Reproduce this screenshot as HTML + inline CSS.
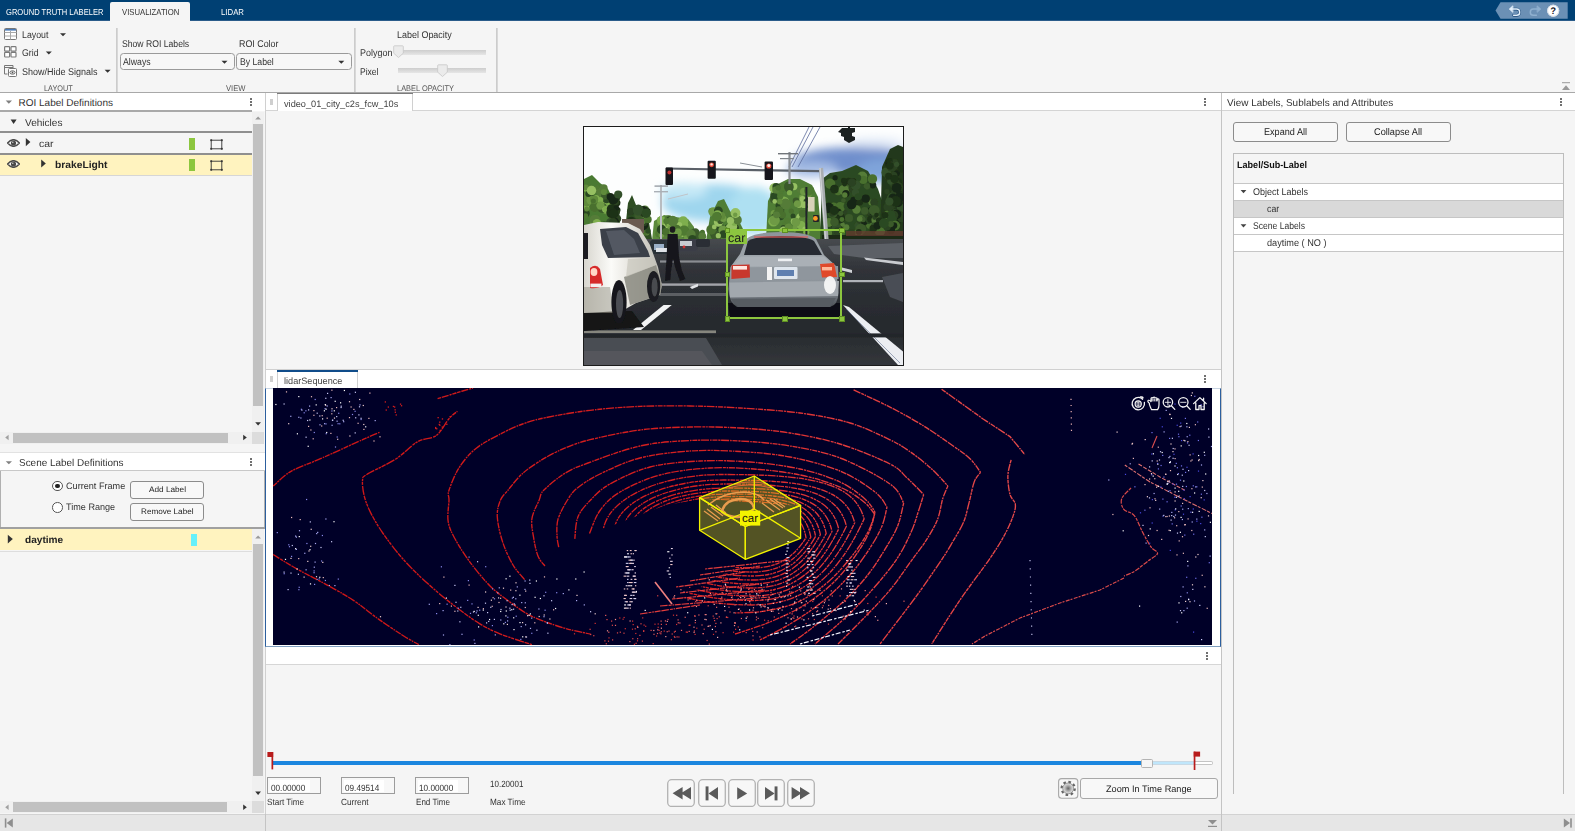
<!DOCTYPE html>
<html lang="en">
<head>
<meta charset="utf-8">
<title>Ground Truth Labeler</title>
<style>
*{box-sizing:border-box;margin:0;padding:0}
html,body{width:1575px;height:831px;overflow:hidden;background:#f5f5f5;font-family:"Liberation Sans",Arial,sans-serif;font-size:10px;color:#333;text-rendering:geometricPrecision}
#app{position:relative;width:1575px;height:831px;overflow:hidden;background:#f5f5f5}
#app div,#app svg{position:absolute}
.t{white-space:nowrap;transform-origin:0 0}
.caret{width:0;height:0;border-left:3px solid transparent;border-right:3px solid transparent;border-top:3px solid #333}
.dd{border:1px solid #9a9a9a;border-radius:3.5px;background:#f7f7f7}
.vsep{width:2px;background:linear-gradient(90deg,#c6c6c6,#dedede)}
.btn{border:1px solid #8c8c8c;border-radius:3px;background:#f8f8f8}
.dots{width:2px;height:8px;background:linear-gradient(#707070 0 2px,transparent 2px 3px,#707070 3px 5px,transparent 5px 6px,#707070 6px 8px)}
.grip{width:3px;height:6px;background:#c8c8c8}
</style>
</head>
<body>
<div id="app">
<!-- top bar -->
<div style="left:0px;top:0px;width:1575px;height:21px;background:#004073;"></div>
<div style="left:0px;top:20px;width:1575px;height:1px;background:#2a5c8a;"></div>
<div style="left:110px;top:2px;width:80px;height:20px;background:#f5f5f5;border-radius:2px 2px 0 0;"></div>
<div class="t" style="left:6.30px;top:6px;font-size:8.7px;line-height:12px;color:#fff;transform:scaleX(0.8712);">GROUND TRUTH LABELER</div>
<div class="t" style="left:121.50px;top:6px;font-size:8.7px;line-height:12px;color:#333;transform:scaleX(0.8887);">VISUALIZATION</div>
<div class="t" style="left:221.00px;top:6px;font-size:8.7px;line-height:12px;color:#fff;transform:scaleX(0.8976);">LIDAR</div>
<svg style="left:1495px;top:2px" width="74" height="18" viewBox="0 0 74 18"><path d="M0.5 8.5L5.5 0.3H72.7V16.8H5.5z" fill="#6b90b5"/>
<g fill="none" stroke-linecap="round" stroke-linejoin="round" transform="translate(0 1.5)"><path d="M16 5.6h5.6a3.1 3.1 0 0 1 0 6.2h-3" stroke="#1d4c7c" stroke-width="2.8"/><path d="M16 5.6h5.6a3.1 3.1 0 0 1 0 6.2h-3" stroke="#e4f0fb" stroke-width="1.5"/><path d="M17.6 2.6L14.2 5.6L17.6 8.6z" fill="#e4f0fb" stroke="#e4f0fb" stroke-width="0.8"/>
<path d="M44 5.6h-5.6a3.1 3.1 0 0 0 0 6.2h3" stroke="#8fb0cf" stroke-width="1.5"/><path d="M42.4 2.6L45.8 5.6L42.4 8.6z" fill="#8fb0cf" stroke="#8fb0cf" stroke-width="0.8"/></g>
<circle cx="58.2" cy="8.7" r="6" fill="#fff"/><circle cx="58.2" cy="8.7" r="5.6" fill="none" stroke="#d4dce6" stroke-width="1"/>
<text x="58.2" y="12.1" font-family="Liberation Sans, sans-serif" font-size="9.5" font-weight="bold" fill="#1a1a2a" text-anchor="middle">?</text></svg>
<!-- toolstrip -->
<svg style="left:4px;top:28px" width="13" height="12" viewBox="0 0 13 12"><rect x="0.5" y="0.5" width="12" height="11" rx="1" fill="#fff" stroke="#777"/><rect x="1" y="1" width="11" height="1.6" fill="#4a7ab5"/><path d="M0.5 4.5H12.5M0.5 8H12.5M6.5 3V11.5" stroke="#a8a8a8" stroke-width="1" fill="none"/></svg>
<svg style="left:4px;top:46px" width="13" height="12" viewBox="0 0 13 12"><g fill="#fff" stroke="#7a7a7a" stroke-width="1.2"><rect x="0.6" y="0.6" width="5" height="4.6" rx="0.8"/><rect x="7" y="0.6" width="5" height="4.6" rx="0.8"/><rect x="0.6" y="6.4" width="5" height="4.6" rx="0.8"/><rect x="7" y="6.4" width="5" height="4.6" rx="0.8"/></g></svg>
<svg style="left:4px;top:64px" width="13" height="13" viewBox="0 0 13 13"><path d="M0.5 1.5h8.5v2.5M0.5 1.5v8.5h3M0.5 3.5h8.5" fill="none" stroke="#777"/><rect x="4.5" y="4.5" width="8" height="8" rx="1" fill="#fff" stroke="#777"/><ellipse cx="8.5" cy="8.5" rx="2.6" ry="1.7" fill="none" stroke="#555" stroke-width="0.9"/><circle cx="8.5" cy="8.5" r="0.9" fill="#555"/></svg>
<div class="t" style="left:21.80px;top:30px;font-size:9.8px;line-height:12px;color:#333;transform:scaleX(0.8972);">Layout</div>
<svg style="left:60px;top:33px" width="7" height="5" viewBox="0 0 7 5"><path transform="translate(0.00 0.30)" d="M0 0H6L3.0 3z" fill="#333"/></svg>
<div class="t" style="left:22.20px;top:48px;font-size:9.8px;line-height:12px;color:#333;transform:scaleX(0.8912);">Grid</div>
<svg style="left:45px;top:51px" width="8" height="5" viewBox="0 0 8 5"><path transform="translate(0.80 0.50)" d="M0 0H6L3.0 3z" fill="#333"/></svg>
<div class="t" style="left:22.20px;top:67px;font-size:9.8px;line-height:12px;color:#333;transform:scaleX(0.9179);">Show/Hide Signals</div>
<svg style="left:104px;top:69px" width="8" height="5" viewBox="0 0 8 5"><path transform="translate(0.60 0.80)" d="M0 0H6L3.0 3z" fill="#333"/></svg>
<div class="t" style="left:43.70px;top:83px;font-size:8.2px;line-height:12px;color:#555;transform:scaleX(0.8931);">LAYOUT</div>
<div class="vsep" style="left:116px;top:28px;height:64px"></div>
<div class="t" style="left:121.80px;top:39px;font-size:9.8px;line-height:12px;color:#333;transform:scaleX(0.8812);">Show ROI Labels</div>
<div class="dd" style="left:119.5px;top:53px;width:115px;height:17px"></div>
<div class="t" style="left:123.40px;top:57px;font-size:9.8px;line-height:12px;color:#333;transform:scaleX(0.8924);">Always</div>
<svg style="left:221px;top:60px" width="8" height="5" viewBox="0 0 8 5"><path transform="translate(0.50 0.80)" d="M0 0H6L3.0 3z" fill="#333"/></svg>
<div class="t" style="left:238.50px;top:39px;font-size:9.8px;line-height:12px;color:#333;transform:scaleX(0.9067);">ROI Color</div>
<div class="dd" style="left:236px;top:53px;width:115.5px;height:17px"></div>
<div class="t" style="left:240.00px;top:57px;font-size:9.8px;line-height:12px;color:#333;transform:scaleX(0.8863);">By Label</div>
<svg style="left:338px;top:60px" width="8" height="5" viewBox="0 0 8 5"><path transform="translate(0.30 0.80)" d="M0 0H6L3.0 3z" fill="#333"/></svg>
<div class="t" style="left:226.00px;top:83px;font-size:8.2px;line-height:12px;color:#555;transform:scaleX(0.9305);">VIEW</div>
<div class="vsep" style="left:354px;top:28px;height:64px"></div>
<div class="t" style="left:396.60px;top:30px;font-size:9.8px;line-height:12px;color:#333;transform:scaleX(0.9145);">Label Opacity</div>
<div class="t" style="left:359.50px;top:48px;font-size:9.8px;line-height:12px;color:#333;transform:scaleX(0.9177);">Polygon</div>
<div class="t" style="left:359.50px;top:67px;font-size:9.8px;line-height:12px;color:#333;transform:scaleX(0.8709);">Pixel</div>
<div style="left:398.3px;top:49.5px;width:87.7px;height:5px;background:linear-gradient(#cdcdcd,#e6e6e6);"></div>
<div style="left:398.3px;top:68px;width:87.7px;height:5px;background:linear-gradient(#cdcdcd,#e6e6e6);"></div>
<svg style="left:393.3px;top:45.2px" width="11" height="13" viewBox="0 0 11 13"><path d="M1.5 0.8h8q0.8 0 0.8 0.8v6.6l-4.8 4.3l-4.8-4.3v-6.6q0-0.8 0.8-0.8z" fill="#ebebeb" stroke="#c6c6c6" stroke-width="0.8"/></svg>
<svg style="left:437px;top:63.8px" width="11" height="13" viewBox="0 0 11 13"><path d="M1.5 0.8h8q0.8 0 0.8 0.8v6.6l-4.8 4.3l-4.8-4.3v-6.6q0-0.8 0.8-0.8z" fill="#ebebeb" stroke="#c6c6c6" stroke-width="0.8"/></svg>
<div class="t" style="left:396.60px;top:83px;font-size:8.2px;line-height:12px;color:#555;transform:scaleX(0.9059);">LABEL OPACITY</div>
<div class="vsep" style="left:496px;top:28px;height:64px"></div>
<svg style="left:1561px;top:81px" width="10" height="10" viewBox="0 0 10 10"><rect x="1" y="1.2" width="8" height="1" fill="#999"/><path d="M1 9L5 4.2L9 9z" fill="#999"/></svg>
<div style="left:0px;top:92px;width:1575px;height:1px;background:#a8a8a8;"></div>
<!-- left panel -->
<div style="left:0px;top:93px;width:265px;height:17.5px;background:#fff;"></div>
<svg style="left:5px;top:100px" width="8" height="5" viewBox="0 0 8 5"><path transform="translate(0.70 0.60)" d="M0 0H6.3L3.15 3.1z" fill="#808080"/></svg>
<div class="t" style="left:18.50px;top:98px;font-size:10px;line-height:12px;color:#333;">ROI Label Definitions</div>
<div class="dots" style="left:250px;top:98px"></div>
<div style="left:0px;top:110.3px;width:252px;height:1.6px;background:#a9a9a9;"></div>
<svg style="left:10px;top:119px" width="8" height="6" viewBox="0 0 8 6"><path transform="translate(0.60 0.50)" d="M0 0H6L3.0 4.5z" fill="#333"/></svg>
<div class="t" style="left:25.40px;top:118px;font-size:10px;line-height:12px;color:#333;transform:scaleX(1.0053);">Vehicles</div>
<div style="left:0px;top:131.1px;width:252px;height:1.6px;background:#8f8f8f;"></div>
<svg style="left:7px;top:138.6px" width="13" height="8" viewBox="0 0 13 8"><path d="M0.6 4Q6.5 -2.6 12.4 4Q6.5 10.6 0.6 4z" fill="#fff" stroke="#4a4a4a" stroke-width="1.5"/><circle cx="6.5" cy="4" r="2.6" fill="#4a4a4a"/><circle cx="5.8" cy="3.2" r="0.7" fill="#ddd"/></svg>
<svg style="left:25px;top:138px" width="7" height="10" viewBox="0 0 7 10"><path transform="translate(0.80 0.00)" d="M0 0L4.6 4.1L0 8.2z" fill="#333"/></svg>
<div class="t" style="left:39.00px;top:139px;font-size:10px;line-height:12px;color:#333;transform:scaleX(1.0438);">car</div>
<div style="left:189px;top:138px;width:6px;height:11.7px;background:#8cc63f;"></div>
<svg style="left:210px;top:138.6px" width="13" height="11" viewBox="0 0 13 11"><rect x="1.2" y="1.2" width="10.6" height="8.6" fill="none" stroke="#333" stroke-width="0.9"/><g fill="#333"><rect x="0.3" y="0.3" width="1.8" height="1.8"/><rect x="10.9" y="0.3" width="1.8" height="1.8"/><rect x="0.3" y="8.9" width="1.8" height="1.8"/><rect x="10.9" y="8.9" width="1.8" height="1.8"/></g></svg>
<div style="left:0px;top:153.4px;width:252px;height:1.6px;background:#8f8f8f;"></div>
<div style="left:0px;top:155px;width:252px;height:19.8px;background:#fff3bf;"></div>
<svg style="left:7px;top:159.8px" width="13" height="8" viewBox="0 0 13 8"><path d="M0.6 4Q6.5 -2.6 12.4 4Q6.5 10.6 0.6 4z" fill="#fff" stroke="#4a4a4a" stroke-width="1.5"/><circle cx="6.5" cy="4" r="2.6" fill="#4a4a4a"/><circle cx="5.8" cy="3.2" r="0.7" fill="#ddd"/></svg>
<svg style="left:41px;top:159px" width="6" height="10" viewBox="0 0 6 10"><path transform="translate(0.20 0.40)" d="M0 0L4.6 4.1L0 8.2z" fill="#333"/></svg>
<div class="t" style="left:54.50px;top:160px;font-size:10px;line-height:12px;color:#222;font-weight:bold;transform:scaleX(1.0270);">brakeLight</div>
<div style="left:189px;top:159.4px;width:6px;height:11.7px;background:#8cc63f;"></div>
<svg style="left:210px;top:160px" width="13" height="11" viewBox="0 0 13 11"><rect x="1.2" y="1.2" width="10.6" height="8.6" fill="none" stroke="#333" stroke-width="0.9"/><g fill="#333"><rect x="0.3" y="0.3" width="1.8" height="1.8"/><rect x="10.9" y="0.3" width="1.8" height="1.8"/><rect x="0.3" y="8.9" width="1.8" height="1.8"/><rect x="10.9" y="8.9" width="1.8" height="1.8"/></g></svg>
<div style="left:0px;top:174.8px;width:252px;height:1px;background:#d6d6d6;"></div>
<div style="left:252px;top:112px;width:12.3px;height:320px;background:#f0f0f0;"></div>
<svg style="left:255px;top:116px" width="7" height="5" viewBox="0 0 7 5"><path transform="translate(0.20 0.60)" d="M0 3H5.8L2.9 0z" fill="#999"/></svg>
<div style="left:253.2px;top:124.2px;width:9.8px;height:282px;background:#c1c1c1;"></div>
<svg style="left:255px;top:422px" width="7" height="5" viewBox="0 0 7 5"><path transform="translate(0.20 0.20)" d="M0 0H5.8L2.9 3.4z" fill="#333"/></svg>
<div style="left:0px;top:431.5px;width:252px;height:12.3px;background:#f0f0f0;"></div>
<div style="left:252px;top:431.5px;width:12.3px;height:12.3px;background:#dcdcdc;"></div>
<svg style="left:5px;top:434px" width="5" height="8" viewBox="0 0 5 8"><path transform="translate(0.20 0.80)" d="M3.4 0L0 2.7L3.4 5.4z" fill="#a0a0a0"/></svg>
<div style="left:13px;top:432.7px;width:214.5px;height:9.9px;background:#c1c1c1;"></div>
<svg style="left:243px;top:434px" width="5" height="8" viewBox="0 0 5 8"><path transform="translate(0.20 0.80)" d="M0 0L3.6 2.7L0 5.4z" fill="#333"/></svg>
<div style="left:0px;top:452px;width:265px;height:1px;background:#e2e2e2;"></div>
<div style="left:0px;top:453px;width:265px;height:17px;background:#fff;"></div>
<svg style="left:5px;top:461px" width="8" height="5" viewBox="0 0 8 5"><path transform="translate(0.70 0.20)" d="M0 0H6.3L3.15 3.1z" fill="#808080"/></svg>
<div class="t" style="left:18.70px;top:458px;font-size:10px;line-height:12px;color:#333;transform:scaleX(0.9946);">Scene Label Definitions</div>
<div class="dots" style="left:250px;top:458px"></div>
<div style="left:0px;top:470px;width:265px;height:1px;background:#c8c8c8;"></div>
<div style="left:0px;top:471px;width:1px;height:57px;background:#b0b0b0;"></div>
<div style="left:264px;top:471px;width:1px;height:57px;background:#b0b0b0;"></div>
<div style="left:52px;top:480.8px;width:10.6px;height:10.6px;border:1px solid #555;border-radius:50%;background:#fff"></div>
<div style="left:55px;top:483.8px;width:4.6px;height:4.6px;border-radius:50%;background:#222"></div>
<div style="left:52px;top:502.2px;width:10.6px;height:10.6px;border:1px solid #555;border-radius:50%;background:#fff"></div>
<div class="t" style="left:65.50px;top:480px;font-size:9.3px;line-height:12px;color:#333;transform:scaleX(0.9808);">Current Frame</div>
<div class="t" style="left:65.50px;top:501px;font-size:9.3px;line-height:12px;color:#333;transform:scaleX(0.9772);">Time Range</div>
<div class="btn" style="left:130.3px;top:481.4px;width:74px;height:17.8px"></div>
<div class="t" style="left:148.80px;top:484px;font-size:8px;line-height:12px;color:#222;transform:scaleX(1.0269);">Add Label</div>
<div class="btn" style="left:130.3px;top:503.2px;width:74px;height:17.6px"></div>
<div class="t" style="left:141.05px;top:506px;font-size:8px;line-height:12px;color:#222;transform:scaleX(1.0177);">Remove Label</div>
<div style="left:0px;top:527.3px;width:265px;height:1.8px;background:#a0a0a0;"></div>
<div style="left:0px;top:529.2px;width:252px;height:21.3px;background:#fff3bf;"></div>
<div style="left:0px;top:550.5px;width:252px;height:1px;background:#ddd;"></div>
<svg style="left:7px;top:534px" width="7" height="11" viewBox="0 0 7 11"><path transform="translate(0.80 0.80)" d="M0 0L5 4.3L0 8.6z" fill="#333"/></svg>
<div class="t" style="left:25.40px;top:535px;font-size:10px;line-height:12px;color:#222;font-weight:bold;transform:scaleX(1.0108);">daytime</div>
<div style="left:190.6px;top:534.2px;width:6.2px;height:11.8px;background:#66f0fa;"></div>
<div style="left:252px;top:529.2px;width:12.3px;height:271.4px;background:#f0f0f0;"></div>
<svg style="left:255px;top:535px" width="7" height="5" viewBox="0 0 7 5"><path transform="translate(0.20 0.60)" d="M0 3H5.8L2.9 0z" fill="#999"/></svg>
<div style="left:253.2px;top:543.5px;width:9.8px;height:232px;background:#c1c1c1;"></div>
<svg style="left:255px;top:791px" width="7" height="6" viewBox="0 0 7 6"><path transform="translate(0.20 0.60)" d="M0 0H5.8L2.9 3.4z" fill="#333"/></svg>
<div style="left:0px;top:800.6px;width:252px;height:12.6px;background:#f0f0f0;"></div>
<div style="left:252px;top:800.6px;width:12.3px;height:12.6px;background:#dcdcdc;"></div>
<svg style="left:5px;top:804px" width="5" height="8" viewBox="0 0 5 8"><path transform="translate(0.20 0.60)" d="M3.4 0L0 2.7L3.4 5.4z" fill="#a0a0a0"/></svg>
<div style="left:13px;top:801.8px;width:214.3px;height:10px;background:#c1c1c1;"></div>
<svg style="left:243px;top:804px" width="5" height="8" viewBox="0 0 5 8"><path transform="translate(0.20 0.60)" d="M0 0L3.6 2.7L0 5.4z" fill="#333"/></svg>
<!-- center -->
<div style="left:264.5px;top:93px;width:1px;height:721px;background:#d0d0d0;"></div>
<div style="left:265.5px;top:93px;width:955.5px;height:17.4px;background:#fff;"></div>
<div style="left:265.5px;top:110.4px;width:955.5px;height:1px;background:#d4d4d4;"></div>
<div style="left:269.6px;top:99.2px;width:3px;height:5.6px;background:#cfcfcf;"></div>
<div style="left:277px;top:93px;width:136.4px;height:17.6px;background:#fff;border-left:1px solid #d0d0d0;border-right:1px solid #d0d0d0;"></div>
<div style="left:277px;top:92.6px;width:136.4px;height:1.9px;background:#7b7b7b;"></div>
<div class="t" style="left:283.80px;top:98px;font-size:9.3px;line-height:12px;color:#444;transform:scaleX(0.9870);">video_01_city_c2s_fcw_10s</div>
<div class="dots" style="left:1204px;top:98px"></div>
<div style="left:265.5px;top:368.8px;width:955.5px;height:1px;background:#d0d0d0;"></div>
<div style="left:265.5px;top:369.8px;width:955.5px;height:18px;background:#fff;"></div>
<div style="left:269.6px;top:376px;width:3px;height:5.6px;background:#cfcfcf;"></div>
<div style="left:277px;top:369.8px;width:81.2px;height:18px;background:#fff;border-left:1px solid #d0d0d0;border-right:1px solid #d0d0d0;"></div>
<div style="left:277px;top:369.5px;width:81.2px;height:2px;background:#0f4c8a;"></div>
<div class="t" style="left:284.00px;top:375px;font-size:9.3px;line-height:12px;color:#444;transform:scaleX(0.9822);">lidarSequence</div>
<div class="dots" style="left:1204px;top:375px"></div>
<div style="left:265.2px;top:387.6px;width:955.8px;height:259px;background:#fff;border:1.3px solid #2c5f9e;border-bottom:1.8px solid #7f9fc0;border-top:1px solid #c8d4e2;"></div>
<div style="left:265.5px;top:646.6px;width:955.5px;height:17.6px;background:#fff;"></div>
<div style="left:265.5px;top:664px;width:955.5px;height:1px;background:#d6d6d6;"></div>
<div class="dots" style="left:1206.4px;top:652px"></div>
<!-- video frame -->
<div style="left:583px;top:126px;width:321px;height:240px;background:#1c1c1c"></div>
<svg style="left:584px;top:127px" width="319" height="238" viewBox="0 0 319 238"><defs>
<filter id="b0" x="0" y="0" width="100%" height="100%"><feGaussianBlur stdDeviation="0.55"/></filter>
<filter id="b1" x="-5%" y="-5%" width="110%" height="110%"><feGaussianBlur stdDeviation="0.7"/></filter>
<filter id="b2" x="-10%" y="-10%" width="120%" height="120%"><feGaussianBlur stdDeviation="2.2"/></filter>
<filter id="b3" x="-20%" y="-20%" width="140%" height="140%"><feGaussianBlur stdDeviation="5"/></filter>
<linearGradient id="road" x1="0" y1="0" x2="0" y2="1"><stop offset="0" stop-color="#474a4f"/><stop offset="0.25" stop-color="#303338"/><stop offset="0.7" stop-color="#26292d"/><stop offset="1" stop-color="#33363b"/></linearGradient>
<linearGradient id="carb" x1="0" y1="0" x2="0" y2="1"><stop offset="0" stop-color="#8d949b"/><stop offset="0.45" stop-color="#a4abb1"/><stop offset="0.8" stop-color="#7c838a"/><stop offset="1" stop-color="#4a4f55"/></linearGradient>
<linearGradient id="van" x1="0" y1="0" x2="1" y2="0"><stop offset="0" stop-color="#d8d6cf"/><stop offset="0.35" stop-color="#fbfbf8"/><stop offset="0.6" stop-color="#e6e4de"/><stop offset="1" stop-color="#b9b8b0"/></linearGradient>
<clipPath id="pc"><rect x="0" y="0" width="319" height="238"/></clipPath>
</defs><g clip-path="url(#pc)"><g filter="url(#b0)"><rect width="319" height="125" fill="#fdfefe"/><g filter="url(#b3)"><ellipse cx="130" cy="76" rx="52" ry="19" fill="#9fd6ee"/><ellipse cx="170" cy="84" rx="26" ry="24" fill="#aee0f2"/><ellipse cx="100" cy="64" rx="24" ry="8" fill="#c4e8f6"/><ellipse cx="272" cy="34" rx="62" ry="14" fill="#6f8fcc"/><ellipse cx="302" cy="44" rx="30" ry="12" fill="#7fa4da"/><ellipse cx="228" cy="42" rx="26" ry="8" fill="#a4bce4"/><ellipse cx="290" cy="16" rx="30" ry="5" fill="#dfe8f6"/></g><g filter="url(#b1)"><path d="M0 52L8 48L16 56L24 62L30 74L36 92L36 112L0 112z" fill="#4a7a32"/><circle cx="7.8" cy="63.8" r="4.3" fill="#7eae4e"/><circle cx="19.6" cy="61.4" r="4.1" fill="#557c38"/><circle cx="5.2" cy="61.1" r="3.6" fill="#4f7a32"/><circle cx="2.3" cy="74.9" r="4.9" fill="#7eae4e"/><circle cx="22.6" cy="83.3" r="4.1" fill="#6e9a44"/><circle cx="13.8" cy="73.8" r="5.4" fill="#6e9a44"/><circle cx="13.3" cy="63.0" r="3.6" fill="#557c38"/><circle cx="2.9" cy="70.2" r="4.9" fill="#5f8a3a"/><circle cx="2.6" cy="80.9" r="2.8" fill="#7eae4e"/><circle cx="13.1" cy="60.2" r="2.4" fill="#4f7a32"/><circle cx="11.9" cy="79.3" r="4.8" fill="#2c4a22"/><circle cx="14.0" cy="76.1" r="3.2" fill="#5f8a3a"/><circle cx="16.7" cy="67.6" r="4.1" fill="#557c38"/><circle cx="11.9" cy="71.6" r="3.7" fill="#7eae4e"/><circle cx="2.9" cy="74.7" r="4.7" fill="#5f8a3a"/><circle cx="22.3" cy="74.8" r="5.4" fill="#7eae4e"/><circle cx="18.3" cy="81.0" r="5.1" fill="#3a5a2a"/><circle cx="8.2" cy="71.9" r="3.8" fill="#2c4a22"/><circle cx="1.7" cy="61.4" r="3.1" fill="#7eae4e"/><circle cx="1.5" cy="86.2" r="4.3" fill="#2c4a22"/><circle cx="6.9" cy="73.3" r="4.4" fill="#6e9a44"/><circle cx="22.5" cy="72.1" r="4.2" fill="#2c4a22"/><circle cx="1.5" cy="88.9" r="2.6" fill="#4f7a32"/><circle cx="9.6" cy="95.0" r="3.8" fill="#5f8a3a"/><circle cx="10.8" cy="80.0" r="5.1" fill="#48702f"/><circle cx="20.7" cy="69.0" r="3.6" fill="#3a5a2a"/><circle cx="16.3" cy="73.1" r="3.0" fill="#7eae4e"/><circle cx="4.3" cy="67.1" r="3.0" fill="#2c4a22"/><circle cx="19.9" cy="65.0" r="3.1" fill="#5f8a3a"/><circle cx="10.1" cy="72.7" r="4.1" fill="#5f8a3a"/><circle cx="16.5" cy="78.6" r="4.2" fill="#6e9a44"/><circle cx="11.0" cy="93.1" r="5.3" fill="#557c38"/><circle cx="9.4" cy="73.9" r="2.5" fill="#48702f"/><circle cx="1.6" cy="60.3" r="2.9" fill="#5f8a3a"/><circle cx="2.7" cy="82.1" r="2.5" fill="#5f8a3a"/><circle cx="12.9" cy="96.3" r="4.2" fill="#7eae4e"/><circle cx="20.9" cy="82.7" r="2.7" fill="#96c062"/><circle cx="22.8" cy="82.2" r="3.8" fill="#7eae4e"/><circle cx="20.3" cy="98.1" r="3.7" fill="#2c4a22"/><circle cx="7.5" cy="63.5" r="4.7" fill="#96c062"/><circle cx="29.8" cy="87.9" r="3.9" fill="#2a4220"/><circle cx="33.8" cy="82.9" r="2.7" fill="#1f3018"/><circle cx="32.2" cy="75.8" r="4.3" fill="#1f3018"/><circle cx="31.7" cy="74.7" r="3.4" fill="#2a4220"/><circle cx="28.8" cy="73.5" r="4.0" fill="#182614"/><circle cx="31.2" cy="85.5" r="4.8" fill="#2a4220"/><circle cx="32.6" cy="91.7" r="4.6" fill="#2a4220"/><circle cx="27.4" cy="81.8" r="4.6" fill="#1f3018"/><circle cx="32.5" cy="81.2" r="2.8" fill="#182614"/><circle cx="29.6" cy="95.4" r="5.5" fill="#182614"/><circle cx="26.4" cy="69.8" r="3.8" fill="#182614"/><circle cx="27.5" cy="85.8" r="5.2" fill="#1f3018"/><circle cx="29.8" cy="86.7" r="4.8" fill="#1f3018"/><circle cx="32.8" cy="70.4" r="3.5" fill="#2a4220"/><circle cx="29.8" cy="72.2" r="4.8" fill="#182614"/><circle cx="26.5" cy="95.7" r="4.6" fill="#33502a"/><circle cx="29.2" cy="95.7" r="4.6" fill="#2a4220"/><circle cx="34.2" cy="67.5" r="4.1" fill="#33502a"/><path d="M40 112L44 76L48 68L52 78L58 84L64 90L68 112z" fill="#2d4d22"/><circle cx="60.3" cy="85.4" r="4.9" fill="#557c38"/><circle cx="57.2" cy="90.9" r="4.0" fill="#182614"/><circle cx="44.2" cy="103.1" r="4.6" fill="#2a4220"/><circle cx="54.5" cy="106.8" r="3.6" fill="#33502a"/><circle cx="60.7" cy="87.1" r="3.0" fill="#3a5a2a"/><circle cx="54.0" cy="102.2" r="3.3" fill="#2c4a22"/><circle cx="60.8" cy="83.1" r="4.6" fill="#557c38"/><circle cx="57.3" cy="103.6" r="3.9" fill="#182614"/><circle cx="54.6" cy="95.6" r="2.3" fill="#557c38"/><circle cx="59.6" cy="98.0" r="4.8" fill="#182614"/><circle cx="47.3" cy="94.3" r="4.6" fill="#1f3018"/><circle cx="50.5" cy="95.5" r="4.0" fill="#2a4220"/><circle cx="61.8" cy="82.9" r="2.8" fill="#1f3018"/><circle cx="59.6" cy="95.2" r="4.1" fill="#2a4220"/><circle cx="52.8" cy="98.1" r="3.9" fill="#33502a"/><circle cx="57.9" cy="93.7" r="4.0" fill="#557c38"/><circle cx="54.2" cy="88.1" r="3.9" fill="#3a5a2a"/><circle cx="62.6" cy="105.7" r="2.9" fill="#557c38"/><circle cx="46.6" cy="84.7" r="3.7" fill="#2a4220"/><circle cx="57.5" cy="93.1" r="2.9" fill="#3a5a2a"/><circle cx="59.8" cy="105.8" r="2.7" fill="#48702f"/><circle cx="46.7" cy="105.4" r="5.4" fill="#33502a"/><circle cx="59.0" cy="84.0" r="5.1" fill="#182614"/><circle cx="64.0" cy="104.0" r="2.7" fill="#2c4a22"/><circle cx="64.1" cy="92.4" r="3.6" fill="#48702f"/><circle cx="50.3" cy="101.0" r="2.3" fill="#557c38"/><circle cx="52.8" cy="81.9" r="3.3" fill="#3a5a2a"/><circle cx="54.3" cy="83.1" r="5.5" fill="#33502a"/><circle cx="63.6" cy="84.3" r="3.1" fill="#1f3018"/><circle cx="62.3" cy="86.3" r="4.7" fill="#2c4a22"/><rect x="38" y="92" width="22" height="14" fill="#6b5a50"/><path d="M68 114L70 94L80 88L92 90L104 92L110 100L110 114z" fill="#5c8a3e"/><circle cx="100.7" cy="105.3" r="5.3" fill="#48702f"/><circle cx="79.3" cy="109.8" r="4.1" fill="#3a5a2a"/><circle cx="77.4" cy="93.7" r="4.5" fill="#48702f"/><circle cx="102.1" cy="97.7" r="2.3" fill="#7eae4e"/><circle cx="99.2" cy="94.2" r="5.0" fill="#7eae4e"/><circle cx="82.8" cy="94.9" r="2.2" fill="#557c38"/><circle cx="87.5" cy="109.8" r="4.3" fill="#6e9a44"/><circle cx="90.8" cy="97.1" r="2.6" fill="#5f8a3a"/><circle cx="82.7" cy="96.0" r="5.3" fill="#96c062"/><circle cx="91.0" cy="96.5" r="3.7" fill="#5f8a3a"/><circle cx="83.0" cy="107.7" r="5.5" fill="#6e9a44"/><circle cx="75.2" cy="106.4" r="4.0" fill="#4f7a32"/><circle cx="90.4" cy="97.2" r="3.7" fill="#48702f"/><circle cx="94.8" cy="102.9" r="5.1" fill="#557c38"/><circle cx="84.1" cy="96.7" r="3.0" fill="#4f7a32"/><circle cx="100.2" cy="105.9" r="4.3" fill="#48702f"/><circle cx="105.0" cy="111.0" r="5.0" fill="#6e9a44"/><circle cx="76.9" cy="106.5" r="3.0" fill="#5f8a3a"/><circle cx="76.4" cy="105.1" r="3.5" fill="#557c38"/><circle cx="95.2" cy="97.9" r="3.0" fill="#96c062"/><circle cx="76.1" cy="96.1" r="3.1" fill="#6e9a44"/><circle cx="82.8" cy="110.6" r="5.4" fill="#557c38"/><circle cx="84.6" cy="93.3" r="5.1" fill="#4f7a32"/><circle cx="85.6" cy="92.7" r="3.5" fill="#2c4a22"/><circle cx="83.2" cy="104.9" r="3.0" fill="#6e9a44"/><circle cx="77.5" cy="107.9" r="2.7" fill="#6e9a44"/><circle cx="86.8" cy="98.3" r="4.3" fill="#7eae4e"/><circle cx="92.6" cy="102.5" r="4.7" fill="#48702f"/><circle cx="98.1" cy="106.1" r="3.8" fill="#96c062"/><circle cx="96.9" cy="104.7" r="2.3" fill="#557c38"/><circle cx="93.9" cy="106.4" r="4.9" fill="#5f8a3a"/><circle cx="102.5" cy="106.7" r="4.1" fill="#6e9a44"/><circle cx="100.0" cy="103.6" r="5.1" fill="#4f7a32"/><circle cx="77.3" cy="93.4" r="4.3" fill="#7eae4e"/><circle cx="86.2" cy="101.1" r="2.4" fill="#6e9a44"/><circle cx="93.9" cy="105.4" r="3.8" fill="#6e9a44"/><circle cx="88.7" cy="94.0" r="5.3" fill="#557c38"/><circle cx="77.5" cy="102.5" r="4.7" fill="#2c4a22"/><circle cx="82.4" cy="94.0" r="3.1" fill="#4f7a32"/><circle cx="81.8" cy="104.8" r="3.7" fill="#48702f"/><path d="M122 114L126 90L134 74L140 72L146 84L156 96L160 104L160 114z" fill="#4f7d36"/><circle cx="129.2" cy="107.2" r="3.1" fill="#3a5a2a"/><circle cx="143.0" cy="99.9" r="2.5" fill="#2c4a22"/><circle cx="135.7" cy="100.1" r="4.5" fill="#2c4a22"/><circle cx="127.6" cy="84.0" r="3.1" fill="#48702f"/><circle cx="144.9" cy="100.8" r="3.2" fill="#96c062"/><circle cx="134.5" cy="95.1" r="4.7" fill="#96c062"/><circle cx="132.3" cy="109.0" r="5.3" fill="#3a5a2a"/><circle cx="134.6" cy="84.5" r="3.9" fill="#4f7a32"/><circle cx="152.6" cy="92.9" r="5.2" fill="#557c38"/><circle cx="129.2" cy="84.9" r="4.7" fill="#6e9a44"/><circle cx="151.5" cy="86.0" r="4.9" fill="#96c062"/><circle cx="134.4" cy="85.5" r="3.4" fill="#4f7a32"/><circle cx="150.1" cy="95.6" r="2.3" fill="#3a5a2a"/><circle cx="151.5" cy="100.9" r="3.5" fill="#2c4a22"/><circle cx="137.9" cy="92.6" r="2.6" fill="#7eae4e"/><circle cx="127.3" cy="102.8" r="5.0" fill="#48702f"/><circle cx="151.2" cy="87.7" r="2.2" fill="#6e9a44"/><circle cx="133.7" cy="84.2" r="3.5" fill="#48702f"/><circle cx="136.4" cy="94.0" r="3.1" fill="#3a5a2a"/><circle cx="134.4" cy="83.8" r="4.4" fill="#2c4a22"/><circle cx="133.6" cy="89.6" r="3.9" fill="#557c38"/><circle cx="147.0" cy="103.8" r="3.6" fill="#3a5a2a"/><circle cx="148.0" cy="99.6" r="5.2" fill="#96c062"/><circle cx="141.3" cy="102.0" r="2.4" fill="#5f8a3a"/><circle cx="138.7" cy="102.9" r="4.3" fill="#6e9a44"/><circle cx="139.6" cy="107.2" r="4.0" fill="#2c4a22"/><circle cx="139.3" cy="91.7" r="3.2" fill="#6e9a44"/><circle cx="137.6" cy="88.9" r="3.8" fill="#5f8a3a"/><circle cx="130.3" cy="99.9" r="2.4" fill="#96c062"/><circle cx="150.4" cy="95.9" r="2.9" fill="#7eae4e"/><circle cx="152.7" cy="94.6" r="2.7" fill="#557c38"/><circle cx="133.5" cy="87.2" r="4.0" fill="#7eae4e"/><circle cx="133.3" cy="89.4" r="4.1" fill="#3a5a2a"/><circle cx="146.4" cy="93.6" r="3.6" fill="#96c062"/><circle cx="132.6" cy="89.8" r="4.7" fill="#4f7a32"/><circle cx="134.3" cy="108.7" r="2.6" fill="#96c062"/><circle cx="112.4" cy="111.0" r="5.0" fill="#3a5a2a"/><circle cx="108.9" cy="105.4" r="3.5" fill="#557c38"/><circle cx="111.1" cy="106.1" r="4.9" fill="#3a5a2a"/><circle cx="106.9" cy="107.2" r="4.7" fill="#557c38"/><circle cx="118.4" cy="107.9" r="2.4" fill="#557c38"/><circle cx="118.4" cy="105.4" r="2.6" fill="#48702f"/><circle cx="107.3" cy="112.8" r="2.6" fill="#557c38"/><circle cx="106.4" cy="110.8" r="2.2" fill="#48702f"/><circle cx="108.4" cy="112.3" r="4.3" fill="#2c4a22"/><circle cx="118.3" cy="109.3" r="3.9" fill="#557c38"/><path d="M182 112L184 74L192 58L204 52L216 52L228 58L234 70L238 112z" fill="#4f7d36"/><circle cx="215.4" cy="63.5" r="2.4" fill="#557c38"/><circle cx="224.6" cy="67.3" r="3.1" fill="#6e9a44"/><circle cx="189.7" cy="72.6" r="3.7" fill="#3a5a2a"/><circle cx="213.4" cy="100.3" r="3.8" fill="#4f7a32"/><circle cx="209.8" cy="59.6" r="3.6" fill="#96c062"/><circle cx="191.4" cy="67.4" r="5.1" fill="#48702f"/><circle cx="192.3" cy="69.0" r="3.6" fill="#3a5a2a"/><circle cx="197.8" cy="59.8" r="3.3" fill="#48702f"/><circle cx="202.9" cy="77.1" r="2.2" fill="#96c062"/><circle cx="216.9" cy="82.2" r="2.9" fill="#4f7a32"/><circle cx="201.0" cy="97.2" r="3.0" fill="#4f7a32"/><circle cx="199.2" cy="100.5" r="2.6" fill="#2c4a22"/><circle cx="212.1" cy="100.9" r="3.8" fill="#6e9a44"/><circle cx="224.8" cy="65.2" r="3.5" fill="#4f7a32"/><circle cx="190.2" cy="86.6" r="3.6" fill="#6e9a44"/><circle cx="196.2" cy="79.6" r="4.5" fill="#3a5a2a"/><circle cx="216.7" cy="105.7" r="5.3" fill="#3a5a2a"/><circle cx="196.4" cy="89.3" r="3.9" fill="#2c4a22"/><circle cx="190.5" cy="89.8" r="3.4" fill="#3a5a2a"/><circle cx="226.1" cy="79.3" r="2.6" fill="#7eae4e"/><circle cx="199.8" cy="74.9" r="5.4" fill="#7eae4e"/><circle cx="210.3" cy="94.3" r="3.5" fill="#96c062"/><circle cx="220.0" cy="78.8" r="2.4" fill="#2c4a22"/><circle cx="196.6" cy="84.0" r="3.7" fill="#3a5a2a"/><circle cx="202.9" cy="100.9" r="2.3" fill="#48702f"/><circle cx="198.6" cy="88.0" r="3.5" fill="#48702f"/><circle cx="190.6" cy="61.2" r="5.2" fill="#96c062"/><circle cx="196.6" cy="61.2" r="4.2" fill="#3a5a2a"/><circle cx="199.5" cy="103.8" r="4.2" fill="#96c062"/><circle cx="217.2" cy="91.0" r="5.2" fill="#96c062"/><circle cx="189.4" cy="94.2" r="5.2" fill="#7eae4e"/><circle cx="190.2" cy="69.3" r="3.8" fill="#2c4a22"/><circle cx="225.0" cy="76.6" r="3.0" fill="#48702f"/><circle cx="219.8" cy="64.5" r="3.8" fill="#6e9a44"/><circle cx="219.3" cy="93.4" r="4.9" fill="#5f8a3a"/><circle cx="212.0" cy="73.8" r="3.3" fill="#3a5a2a"/><circle cx="218.6" cy="86.6" r="3.9" fill="#48702f"/><circle cx="217.5" cy="70.0" r="2.4" fill="#6e9a44"/><circle cx="207.3" cy="84.1" r="2.7" fill="#48702f"/><circle cx="222.3" cy="105.2" r="3.1" fill="#7eae4e"/><circle cx="197.1" cy="78.2" r="5.5" fill="#2c4a22"/><circle cx="195.8" cy="64.5" r="3.7" fill="#4f7a32"/><circle cx="217.3" cy="98.5" r="4.4" fill="#7eae4e"/><circle cx="218.5" cy="72.2" r="3.1" fill="#96c062"/><circle cx="203.2" cy="93.3" r="2.9" fill="#4f7a32"/><circle cx="196.2" cy="69.4" r="3.1" fill="#4f7a32"/><circle cx="201.5" cy="77.1" r="5.5" fill="#557c38"/><circle cx="209.0" cy="89.1" r="2.5" fill="#2c4a22"/><circle cx="226.4" cy="63.1" r="3.8" fill="#4f7a32"/><circle cx="220.7" cy="101.7" r="2.3" fill="#96c062"/><circle cx="198.0" cy="60.6" r="4.2" fill="#4f7a32"/><circle cx="224.1" cy="75.9" r="5.1" fill="#2c4a22"/><circle cx="211.9" cy="95.1" r="4.4" fill="#6e9a44"/><circle cx="193.3" cy="86.6" r="4.2" fill="#4f7a32"/><circle cx="190.7" cy="74.4" r="2.3" fill="#96c062"/><circle cx="190.7" cy="93.1" r="5.2" fill="#6e9a44"/><circle cx="219.9" cy="77.7" r="3.4" fill="#96c062"/><circle cx="192.2" cy="59.7" r="3.8" fill="#2c4a22"/><circle cx="191.7" cy="63.0" r="3.5" fill="#557c38"/><circle cx="195.1" cy="83.6" r="4.4" fill="#48702f"/><circle cx="215.3" cy="77.7" r="3.1" fill="#96c062"/><circle cx="204.9" cy="60.6" r="4.7" fill="#3a5a2a"/><circle cx="204.8" cy="59.1" r="4.7" fill="#3a5a2a"/><circle cx="213.4" cy="76.8" r="3.5" fill="#6e9a44"/><circle cx="205.5" cy="65.7" r="2.6" fill="#7eae4e"/><circle cx="204.5" cy="100.2" r="3.7" fill="#5f8a3a"/><circle cx="194.2" cy="60.7" r="2.7" fill="#48702f"/><circle cx="192.6" cy="87.8" r="3.4" fill="#557c38"/><circle cx="195.7" cy="74.8" r="2.7" fill="#5f8a3a"/><circle cx="223.9" cy="63.4" r="3.8" fill="#4f7a32"/><path d="M236 114L238 52L246 46L258 44L272 38L284 44L294 62L300 80L304 114z" fill="#2c4a20"/><circle cx="258.6" cy="97.5" r="2.3" fill="#557c38"/><circle cx="259.2" cy="84.2" r="4.3" fill="#2a4220"/><circle cx="287.2" cy="85.0" r="4.9" fill="#182614"/><circle cx="274.7" cy="98.6" r="4.2" fill="#33502a"/><circle cx="283.7" cy="59.7" r="2.9" fill="#2c4a22"/><circle cx="288.9" cy="58.1" r="3.4" fill="#182614"/><circle cx="256.0" cy="91.0" r="5.2" fill="#1f3018"/><circle cx="286.3" cy="97.8" r="4.4" fill="#48702f"/><circle cx="249.8" cy="83.8" r="4.0" fill="#3a5a2a"/><circle cx="275.1" cy="66.9" r="3.0" fill="#2c4a22"/><circle cx="275.6" cy="74.9" r="3.6" fill="#1f3018"/><circle cx="244.4" cy="106.1" r="3.7" fill="#557c38"/><circle cx="280.5" cy="94.2" r="3.7" fill="#182614"/><circle cx="282.8" cy="72.2" r="2.4" fill="#48702f"/><circle cx="264.7" cy="54.4" r="3.7" fill="#1f3018"/><circle cx="246.1" cy="56.6" r="5.2" fill="#48702f"/><circle cx="281.2" cy="78.7" r="2.4" fill="#2c4a22"/><circle cx="275.3" cy="94.4" r="2.3" fill="#2a4220"/><circle cx="291.6" cy="91.4" r="4.9" fill="#33502a"/><circle cx="250.5" cy="100.3" r="3.2" fill="#182614"/><circle cx="276.9" cy="90.8" r="2.9" fill="#48702f"/><circle cx="273.3" cy="63.7" r="3.3" fill="#3a5a2a"/><circle cx="287.3" cy="75.5" r="3.0" fill="#557c38"/><circle cx="254.1" cy="64.3" r="3.9" fill="#48702f"/><circle cx="261.9" cy="60.6" r="3.5" fill="#3a5a2a"/><circle cx="276.6" cy="100.9" r="2.8" fill="#3a5a2a"/><circle cx="249.7" cy="79.8" r="4.3" fill="#48702f"/><circle cx="290.2" cy="75.3" r="3.9" fill="#2a4220"/><circle cx="256.2" cy="80.1" r="5.0" fill="#48702f"/><circle cx="256.8" cy="106.4" r="4.1" fill="#48702f"/><circle cx="259.9" cy="53.8" r="3.0" fill="#1f3018"/><circle cx="258.3" cy="78.9" r="3.2" fill="#48702f"/><circle cx="279.1" cy="92.3" r="2.9" fill="#3a5a2a"/><circle cx="273.5" cy="74.1" r="3.9" fill="#1f3018"/><circle cx="250.5" cy="62.2" r="4.4" fill="#1f3018"/><circle cx="246.8" cy="81.9" r="3.2" fill="#48702f"/><circle cx="269.6" cy="73.0" r="3.2" fill="#182614"/><circle cx="253.9" cy="85.2" r="3.8" fill="#182614"/><circle cx="244.9" cy="95.4" r="4.5" fill="#557c38"/><circle cx="248.8" cy="86.0" r="5.1" fill="#3a5a2a"/><circle cx="263.3" cy="64.4" r="2.2" fill="#48702f"/><circle cx="272.5" cy="82.5" r="4.2" fill="#557c38"/><circle cx="256.0" cy="101.3" r="2.3" fill="#1f3018"/><circle cx="263.5" cy="62.8" r="2.4" fill="#2a4220"/><circle cx="244.8" cy="80.9" r="5.3" fill="#182614"/><circle cx="263.9" cy="79.1" r="4.3" fill="#2c4a22"/><circle cx="282.9" cy="59.2" r="3.2" fill="#3a5a2a"/><circle cx="274.0" cy="106.6" r="4.6" fill="#557c38"/><circle cx="278.3" cy="49.5" r="5.0" fill="#557c38"/><circle cx="248.0" cy="87.0" r="2.8" fill="#2a4220"/><circle cx="256.6" cy="86.3" r="2.6" fill="#3a5a2a"/><circle cx="278.1" cy="64.5" r="4.0" fill="#2c4a22"/><circle cx="276.8" cy="102.1" r="5.4" fill="#3a5a2a"/><circle cx="274.8" cy="104.9" r="2.9" fill="#1f3018"/><circle cx="252.3" cy="101.4" r="5.0" fill="#33502a"/><circle cx="289.2" cy="92.2" r="3.3" fill="#2c4a22"/><circle cx="259.8" cy="62.9" r="5.2" fill="#557c38"/><circle cx="266.7" cy="79.8" r="2.2" fill="#1f3018"/><circle cx="265.0" cy="91.0" r="4.1" fill="#3a5a2a"/><circle cx="281.8" cy="71.7" r="4.1" fill="#182614"/><circle cx="251.1" cy="50.7" r="2.6" fill="#182614"/><circle cx="260.6" cy="57.3" r="2.3" fill="#1f3018"/><circle cx="250.8" cy="86.3" r="2.3" fill="#2a4220"/><circle cx="279.3" cy="52.9" r="4.1" fill="#48702f"/><circle cx="253.7" cy="104.3" r="4.0" fill="#2a4220"/><circle cx="286.1" cy="92.8" r="4.5" fill="#2c4a22"/><circle cx="249.3" cy="61.0" r="2.6" fill="#1f3018"/><circle cx="289.4" cy="101.8" r="4.7" fill="#2a4220"/><circle cx="283.5" cy="85.6" r="3.1" fill="#2a4220"/><circle cx="250.5" cy="94.9" r="4.3" fill="#3a5a2a"/><circle cx="259.4" cy="73.6" r="2.3" fill="#3a5a2a"/><circle cx="288.5" cy="51.9" r="4.7" fill="#48702f"/><circle cx="280.8" cy="83.9" r="3.8" fill="#3a5a2a"/><circle cx="273.6" cy="50.9" r="3.6" fill="#2c4a22"/><circle cx="268.9" cy="54.8" r="3.7" fill="#1f3018"/><circle cx="269.8" cy="61.6" r="5.0" fill="#2a4220"/><circle cx="271.5" cy="65.7" r="3.6" fill="#33502a"/><circle cx="257.9" cy="92.5" r="2.4" fill="#48702f"/><circle cx="267.6" cy="77.5" r="4.8" fill="#182614"/><circle cx="290.2" cy="83.3" r="5.4" fill="#3a5a2a"/><circle cx="271.7" cy="58.3" r="4.9" fill="#33502a"/><circle cx="267.9" cy="55.5" r="4.3" fill="#2a4220"/><circle cx="267.5" cy="106.4" r="4.1" fill="#2a4220"/><circle cx="274.1" cy="69.7" r="3.5" fill="#2c4a22"/><circle cx="286.7" cy="92.2" r="3.6" fill="#1f3018"/><circle cx="261.9" cy="66.6" r="3.6" fill="#182614"/><circle cx="262.3" cy="100.2" r="3.0" fill="#557c38"/><circle cx="250.2" cy="83.4" r="4.5" fill="#1f3018"/><circle cx="260.8" cy="68.0" r="2.7" fill="#557c38"/><circle cx="275.7" cy="92.0" r="2.8" fill="#557c38"/><path d="M296 112L298 40L306 22L314 18L319 20L319 112z" fill="#22381a"/><circle cx="312.9" cy="46.3" r="3.0" fill="#182614"/><circle cx="309.4" cy="86.9" r="3.0" fill="#2a4220"/><circle cx="306.4" cy="78.5" r="4.9" fill="#2a4220"/><circle cx="313.4" cy="92.7" r="4.6" fill="#182614"/><circle cx="304.8" cy="50.9" r="2.8" fill="#1f3018"/><circle cx="304.9" cy="72.2" r="2.8" fill="#2a4220"/><circle cx="317.4" cy="81.0" r="4.6" fill="#33502a"/><circle cx="306.5" cy="36.8" r="5.2" fill="#182614"/><circle cx="305.5" cy="54.8" r="2.3" fill="#33502a"/><circle cx="315.4" cy="57.9" r="2.9" fill="#182614"/><circle cx="309.4" cy="38.9" r="4.2" fill="#33502a"/><circle cx="302.4" cy="45.4" r="5.0" fill="#33502a"/><circle cx="315.3" cy="72.8" r="4.4" fill="#2a4220"/><circle cx="312.7" cy="71.1" r="3.7" fill="#182614"/><circle cx="306.3" cy="75.0" r="5.2" fill="#2a4220"/><circle cx="314.3" cy="75.8" r="4.3" fill="#182614"/><circle cx="315.3" cy="60.9" r="2.3" fill="#33502a"/><circle cx="310.3" cy="72.4" r="5.1" fill="#182614"/><circle cx="314.3" cy="54.8" r="3.8" fill="#1f3018"/><circle cx="302.9" cy="64.8" r="2.7" fill="#2a4220"/><circle cx="310.3" cy="36.2" r="4.1" fill="#2a4220"/><circle cx="313.3" cy="62.8" r="4.3" fill="#182614"/><circle cx="310.3" cy="56.2" r="5.3" fill="#2a4220"/><circle cx="317.5" cy="41.6" r="3.9" fill="#1f3018"/><circle cx="313.5" cy="69.4" r="4.3" fill="#182614"/><circle cx="306.5" cy="55.5" r="2.2" fill="#33502a"/><circle cx="316.4" cy="70.3" r="4.4" fill="#182614"/><circle cx="304.0" cy="49.3" r="3.5" fill="#2a4220"/><circle cx="317.6" cy="91.8" r="3.7" fill="#2a4220"/><circle cx="304.3" cy="79.9" r="4.9" fill="#2a4220"/><circle cx="309.5" cy="66.0" r="2.9" fill="#2a4220"/><circle cx="307.8" cy="71.0" r="4.9" fill="#33502a"/><circle cx="309.5" cy="48.7" r="4.0" fill="#2a4220"/><circle cx="314.3" cy="60.0" r="4.8" fill="#2a4220"/><circle cx="306.4" cy="54.0" r="3.0" fill="#33502a"/><circle cx="312.7" cy="60.8" r="4.9" fill="#182614"/><circle cx="307.8" cy="72.0" r="3.3" fill="#33502a"/><circle cx="308.9" cy="70.9" r="4.4" fill="#182614"/><circle cx="304.7" cy="49.3" r="3.5" fill="#1f3018"/><circle cx="315.0" cy="88.2" r="4.8" fill="#2a4220"/><circle cx="310.5" cy="52.0" r="4.1" fill="#1f3018"/><circle cx="305.6" cy="34.4" r="3.2" fill="#1f3018"/><circle cx="311.2" cy="84.9" r="2.8" fill="#33502a"/><circle cx="307.7" cy="39.6" r="5.2" fill="#2a4220"/><circle cx="311.7" cy="74.1" r="5.4" fill="#1f3018"/><circle cx="312.6" cy="87.4" r="4.8" fill="#182614"/><circle cx="305.4" cy="74.5" r="4.0" fill="#33502a"/><circle cx="312.6" cy="37.3" r="2.6" fill="#33502a"/><circle cx="305.9" cy="38.7" r="3.8" fill="#1f3018"/><circle cx="309.8" cy="88.2" r="4.5" fill="#2a4220"/><circle cx="300.0" cy="96.7" r="5.0" fill="#1f3018"/><circle cx="291.9" cy="93.0" r="4.5" fill="#557c38"/><circle cx="303.9" cy="101.8" r="3.4" fill="#2c4a22"/><circle cx="311.9" cy="99.0" r="2.8" fill="#48702f"/><circle cx="303.2" cy="88.0" r="4.2" fill="#48702f"/><circle cx="307.3" cy="89.1" r="3.8" fill="#182614"/><circle cx="288.9" cy="99.7" r="4.3" fill="#48702f"/><circle cx="290.3" cy="98.7" r="3.3" fill="#33502a"/><circle cx="294.9" cy="93.3" r="3.0" fill="#1f3018"/><circle cx="307.8" cy="92.5" r="4.9" fill="#2c4a22"/><circle cx="296.0" cy="104.2" r="5.1" fill="#48702f"/><circle cx="311.3" cy="98.6" r="4.8" fill="#48702f"/><circle cx="292.7" cy="99.6" r="2.6" fill="#2a4220"/><circle cx="306.8" cy="88.2" r="4.6" fill="#2c4a22"/><circle cx="301.1" cy="88.3" r="3.2" fill="#1f3018"/><circle cx="289.2" cy="101.5" r="3.8" fill="#1f3018"/><circle cx="306.9" cy="103.0" r="4.2" fill="#182614"/><circle cx="303.0" cy="99.3" r="4.2" fill="#2a4220"/><circle cx="293.2" cy="98.8" r="3.7" fill="#182614"/><circle cx="290.5" cy="90.6" r="2.3" fill="#2a4220"/><circle cx="309.9" cy="98.6" r="3.4" fill="#182614"/><circle cx="306.8" cy="97.1" r="3.1" fill="#3a5a2a"/><circle cx="292.5" cy="88.1" r="2.3" fill="#1f3018"/><circle cx="299.9" cy="96.4" r="4.9" fill="#2c4a22"/><rect x="238" y="108" width="81" height="14" fill="#1d2a18"/><rect x="262" y="104" width="57" height="5" fill="#6a3a30" opacity="0.7"/></g><g filter="url(#b1)"><rect x="76" y="58" width="2" height="56" fill="#b8bcc0"/><rect x="70.5" y="58.4" width="13.5" height="1.4" fill="#9aa0a6"/><rect x="70" y="64" width="14" height="1.4" fill="#aab0b6"/><path d="M82 41.5L236 44.2" stroke="#5a6068" stroke-width="2.2"/><path d="M237 41L243 119" stroke="#a9adb0" stroke-width="4.2"/><path d="M236 41L242 119" stroke="#d4d6d8" stroke-width="1.2"/><path d="M229 0L208 40M236 0L214 40M225 0L205 40" stroke="#5a6a9a" stroke-width="0.8" fill="none"/><rect x="204.4" y="25" width="2.2" height="32" fill="#8a8e92"/><rect x="194" y="26" width="20" height="1.4" fill="#70757a"/><rect x="196" y="31" width="14" height="1.2" fill="#80858a"/><path d="M156 36L178 40" stroke="#8a9096" stroke-width="1"/><path d="M84 72L104 67" stroke="#c0c4c8" stroke-width="1"/><rect x="81.5" y="40.5" width="7.5" height="17.5" rx="1" fill="#15171a"/><rect x="123.6" y="33.8" width="8.2" height="18" rx="1" fill="#15171a"/><rect x="180.6" y="34.5" width="8.4" height="18.5" rx="1" fill="#15171a"/><circle cx="85.4" cy="45.4" r="2" fill="#c23030"/><circle cx="127.6" cy="37.8" r="2.4" fill="#e84a3a"/><circle cx="127.6" cy="37.4" r="1.2" fill="#ffe8e0"/><circle cx="184.8" cy="39" r="2.6" fill="#e84a3a"/><circle cx="184.8" cy="38.6" r="1.5" fill="#fff0ea"/><path d="M258 1h6v-1h2v1h5v4l-3 1v3l3 1v3l-6 3l-5-3v-3l-3-1v-3l-3-1z" fill="#1e2024"/><rect x="224" y="70" width="6.6" height="14.5" fill="#d8d2b8"/><rect x="221.4" y="60" width="2" height="48" fill="#20242a"/><rect x="229" y="88" width="6" height="7" rx="1" fill="#20242a"/><circle cx="231.4" cy="91.4" r="2.4" fill="#ff9a28"/></g><rect x="0" y="112" width="319" height="126" fill="url(#road)"/><g filter="url(#b1)"><path d="M244 119L319 116L319 131L280 131L250 127z" fill="#5c6066"/><path d="M280 130.4L319 135L319 138L282 133z" fill="#c9ccd0"/><path d="M298 150L319 146L319 175L306 170z" fill="#4a4e54"/><rect x="76" y="133.4" width="66" height="2.2" fill="#8a8d92"/><rect x="76" y="156.4" width="66" height="2.4" fill="#a2a4a8"/><rect x="76" y="166" width="66" height="3" fill="#5c5f64"/><rect x="259" y="153" width="40" height="2.2" fill="#b0b3b8"/><path d="M256 140L268 143L268 146L256 143z" fill="#d0d2d6"/><path d="M105.7 160L114 156.8L114 159.4L108 162z" fill="#e4e6e8"/><path d="M79.6 178L87.8 178L57 203L49 203z" fill="#f2f3f4"/><path d="M259 178L265 180L319 224.5L319 238L314 238z" fill="#eceef2"/><path d="M262 182L316 236" stroke="#5a6a8a" stroke-width="0.8" opacity="0.7"/><rect x="0" y="203.4" width="132" height="3" fill="#86867e"/><rect x="0" y="206.4" width="319" height="4" fill="#24272b"/><path d="M0 211H122L138 238H0z" fill="#4a4d52"/><path d="M0 224H118L128 238H0z" fill="#54575c"/></g><g filter="url(#b1)"><rect x="66" y="113" width="24" height="14" rx="3" fill="#2a3038"/><rect x="70" y="117" width="10" height="6" fill="#9ab0c8"/><rect x="72" y="121" width="14" height="4" fill="#dfe3e8"/><rect x="94" y="112" width="20" height="12" rx="3" fill="#3a3e46"/><rect x="96" y="114" width="12" height="5" fill="#c8ccd2"/><rect x="112" y="112" width="14" height="8" rx="2" fill="#2a2e34"/><circle cx="100" cy="120" r="1.4" fill="#d03030"/><ellipse cx="88.5" cy="102.5" rx="2.8" ry="3.2" fill="#1a1a1c"/><path d="M83.6 107L93.6 107L95 130L98 144L101.5 152L96 154L91 140L89 132L87 144L86.4 153L81 154L82.6 130z" fill="#15161a"/></g><g filter="url(#b1)"><path d="M0 184L48 184L60 200L0 204z" fill="#121316"/><path d="M0 98L14 95L44 96L56 102L66 118L74 140L78 158L76 168L52 176L38 184L0 186z" fill="url(#van)"/><path d="M40 150L72 138L78 158L76 168L46 178z" fill="#8a8980" opacity="0.85"/><path d="M44 132L68 131L72 138L42 150z" fill="#c8c6bc" opacity="0.7"/><path d="M0 160L26 160L30 186L0 186z" fill="#9c9a8e" opacity="0.55"/><path d="M16 102L42 100L54 106L64 124L66 130L24 131L18 118z" fill="#3a3f48"/><path d="M22 104L40 103L50 112L56 126L30 128z" fill="#5d646e" opacity="0.7"/><rect x="0" y="106" width="4" height="26" fill="#1c1e22"/><path d="M6 141Q12 136 16 142L19 158Q14 162 6 161z" fill="#d62a2a"/><ellipse cx="10" cy="145" rx="3.4" ry="4" fill="#ffd8c8"/><rect x="6.4" y="156.6" width="11" height="3.6" fill="#f4eeee"/><ellipse cx="35" cy="175" rx="7.6" ry="22" fill="#17181b"/><ellipse cx="35.6" cy="177" rx="3.6" ry="14" fill="#4c4e52"/><ellipse cx="69.6" cy="159.5" rx="6.6" ry="15.5" fill="#1c1d20"/><ellipse cx="70.6" cy="160" rx="3" ry="9.6" fill="#4a4c50"/></g><g filter="url(#b1)"><path d="M144 176L258 176L258 190L146 191z" fill="#101114"/><path d="M162 112Q170 105 197 105Q224 105 232 112L240 128L252 139L254.5 166Q254 178 246 180L153 180Q145 176 144.5 162L146.5 140L156 127z" fill="url(#carb)"/><path d="M164 114Q172 109 197 109Q222 109 230 114L238 128L160 128z" fill="#262a30"/><path d="M170 110L224 110" stroke="#e05a5a" stroke-width="1.6" opacity="0.8"/><path d="M157 129.5L240 129.5L249 139L149 139z" fill="#aab0b6"/><path d="M147 140.5L254 139L254.5 152L146 153.5z" fill="#8f969d"/><path d="M145.5 155.5L255 154L254 169L146 170.5z" fill="#a2a8ae"/><path d="M147 172L252 171L246 180L154 180z" fill="#565b62"/><rect x="190" y="140" width="23.5" height="12" rx="1" fill="#dfe6ee"/><rect x="193" y="143" width="17" height="6" fill="#5f7fb0"/><rect x="183" y="140" width="5" height="13" fill="#f4f4f4"/><rect x="194" y="131.6" width="14" height="2.6" fill="#eef0f2"/><path d="M147.6 138L165.6 137.4L166 150.4L147.4 152z" fill="#c8382e"/><rect x="149" y="139" width="14" height="3.6" fill="#ffe6e0"/><path d="M236 137L250 136L253 150L238 150.6z" fill="#e0482c"/><rect x="238" y="140" width="10" height="3.4" fill="#ffb89a"/><ellipse cx="246" cy="158" rx="6" ry="9" fill="#fbfbfb" opacity="0.9"/></g></g></g></svg><div style="left:726.2px;top:229.3px;width:116px;height:90px;border:2.6px solid #8cc63f"></div><div style="left:727px;top:230px;width:19.8px;height:14px;background:#8cc63f"></div><div style="left:724.6px;top:227.6px;width:5.6px;height:5.6px;background:#8cc63f;border:1px solid #5f8f22"></div><div style="left:782.2px;top:227.6px;width:5.6px;height:5.6px;background:#8cc63f;border:1px solid #5f8f22"></div><div style="left:839.2px;top:227.6px;width:5.6px;height:5.6px;background:#8cc63f;border:1px solid #5f8f22"></div><div style="left:724.6px;top:271.8px;width:5.6px;height:5.6px;background:#8cc63f;border:1px solid #5f8f22"></div><div style="left:839.2px;top:271.8px;width:5.6px;height:5.6px;background:#8cc63f;border:1px solid #5f8f22"></div><div style="left:724.6px;top:316px;width:5.6px;height:5.6px;background:#8cc63f;border:1px solid #5f8f22"></div><div style="left:782.2px;top:316px;width:5.6px;height:5.6px;background:#8cc63f;border:1px solid #5f8f22"></div><div style="left:839.2px;top:316px;width:5.6px;height:5.6px;background:#8cc63f;border:1px solid #5f8f22"></div>
<div class="t" style="left:727.60px;top:232px;font-size:12.4px;line-height:12px;color:#1a1a1a;transform:scaleX(1.0101);">car</div>
<!-- lidar -->
<svg style="left:273px;top:388px" width="939" height="257" viewBox="273 388 939 257"><defs><linearGradient id="rg" gradientUnits="userSpaceOnUse" x1="273" y1="0" x2="1212" y2="0"><stop offset="0" stop-color="#cc1414"/><stop offset="0.45" stop-color="#d62020"/><stop offset="0.62" stop-color="#e23c3c"/><stop offset="0.8" stop-color="#e64a4a"/><stop offset="1" stop-color="#e25050"/></linearGradient></defs><rect x="273" y="388" width="939" height="257" fill="#000028"/><path d="M603.0 534.0C603.0 501.1 656.3 474.5 722.0 474.5C807.3 474.5 854.2 481.2 864.1 518.9C839.4 572.3 808.0 605.0 752.0 605.0C669.7 605.0 603.0 573.2 603.0 534.0" stroke="url(#rg)" stroke-width="1.3" stroke-dasharray="5 0.8 2.2 0.7 8 1 1.6 0.8" fill="none"/><path d="M614.0 532.8C614.0 503.6 663.0 480.0 723.5 480.0C802.2 480.0 845.5 486.4 854.7 522.8C832.1 571.0 803.4 600.5 752.0 600.5C675.8 600.5 614.0 570.2 614.0 532.8" stroke="url(#rg)" stroke-width="1.3" stroke-dasharray="3.6 0.8 7 1 2 0.8 4.6 0.7" fill="none"/><path d="M623.0 531.6C623.0 505.3 668.7 484.0 725.0 484.0C797.8 484.0 837.9 490.3 846.4 526.3C825.6 569.5 799.2 596.0 752.0 596.0C680.8 596.0 623.0 567.2 623.0 531.6" stroke="url(#rg)" stroke-width="1.3" stroke-dasharray="7.6 1 3 0.8 1.6 0.8 6 0.8" fill="none"/><path d="M630.0 530.4C630.0 507.0 673.2 488.0 726.5 488.0C793.8 488.0 830.8 494.1 838.7 528.9C819.6 568.0 795.4 592.0 752.0 592.0C684.6 592.0 630.0 564.4 630.0 530.4" stroke="url(#rg)" stroke-width="1.3" stroke-dasharray="2.4 0.8 4.6 0.8 9 1.1 3 0.7" fill="none"/><path d="M636.0 529.2C636.0 508.1 677.2 491.0 728.0 491.0C790.4 491.0 824.7 497.1 832.0 531.5C814.4 566.5 792.0 588.0 752.0 588.0C687.9 588.0 636.0 561.7 636.0 529.2" stroke="url(#rg)" stroke-width="1.3" stroke-dasharray="5 0.8 2.2 0.7 8 1 1.6 0.8" fill="none"/><path d="M642.0 528.0C642.0 509.2 681.2 494.0 729.5 494.0C787.5 494.0 819.4 499.9 826.2 533.4C809.9 564.8 789.1 584.0 752.0 584.0C691.2 584.0 642.0 558.9 642.0 528.0" stroke="url(#rg)" stroke-width="1.3" stroke-dasharray="3.6 0.8 7 1 2 0.8 4.6 0.7" fill="none"/><path d="M648.0 526.8C648.0 510.1 685.2 496.5 731.0 496.5C784.6 496.5 814.1 502.2 820.4 534.7C805.4 562.8 786.2 580.0 752.0 580.0C694.6 580.0 648.0 556.2 648.0 526.8" stroke="url(#rg)" stroke-width="1.3" stroke-dasharray="7.6 1 3 0.8 1.6 0.8 6 0.8" fill="none"/><path d="M654.0 525.6C654.0 510.9 689.1 499.0 732.5 499.0C782.4 499.0 809.8 504.6 815.6 536.3C801.6 560.9 783.8 576.0 752.0 576.0C697.9 576.0 654.0 553.4 654.0 525.6" stroke="url(#rg)" stroke-width="1.3" stroke-dasharray="2.4 0.8 4.6 0.8 9 1.1 3 0.7" fill="none"/><path d="M660.0 524.4C660.0 511.5 693.1 501.0 734.0 501.0C780.1 501.0 805.4 506.4 810.8 537.2C797.9 558.8 781.4 572.0 752.0 572.0C701.2 572.0 660.0 550.7 660.0 524.4" stroke="url(#rg)" stroke-width="1.3" stroke-dasharray="5 0.8 2.2 0.7 8 1 1.6 0.8" fill="none"/><path d="M666.0 523.2C666.0 512.0 697.1 503.0 735.5 503.0C777.8 503.0 801.1 508.2 806.0 537.8C794.1 556.5 779.0 568.0 752.0 568.0C704.5 568.0 666.0 547.9 666.0 523.2" stroke="url(#rg)" stroke-width="1.3" stroke-dasharray="3.6 0.8 7 1 2 0.8 4.6 0.7" fill="none"/><path d="M702 499L666 505L603 529L589 534L574 539.5L558 548L545 566L524 580L545 613L600 628L632 623L650 613L674 605.5L682 598L699 588L745 562L800 540L800 506z" fill="#000028"/><path d="M273.2 486.0C276.2 483.6 283.1 475.9 291.0 471.3C298.9 466.8 308.6 464.0 320.5 458.7C332.4 453.4 352.8 444.1 362.6 439.7C372.4 435.3 376.7 433.6 379.5 432.4" stroke="url(#rg)" stroke-width="1.35" stroke-dasharray="5 0.8 2.2 0.7 8 1 1.6 0.8" fill="none"/><path d="M437.6 398.7C440.7 397.8 450.1 394.8 456.0 393.0C461.9 391.2 470.2 388.8 473.0 388.0" stroke="url(#rg)" stroke-width="1.35" stroke-dasharray="3.6 0.8 7 1 2 0.8 4.6 0.7" fill="none"/><path d="M273.1 554.5C277.1 556.9 287.9 563.9 297.2 569.1C306.5 574.3 319.3 580.6 328.7 585.9C338.1 591.1 345.4 595.0 353.8 600.6C362.2 606.2 370.5 613.5 378.9 619.4C387.3 625.3 397.5 632.0 404.1 636.2C410.8 640.4 416.4 643.2 418.8 644.6" stroke="url(#rg)" stroke-width="1.35" stroke-dasharray="7.6 1 3 0.8 1.6 0.8 6 0.8" fill="none"/><path d="M531.9 644.6C526.7 642.9 509.2 637.6 500.5 634.1C491.8 630.6 486.5 627.8 479.5 623.6C472.5 619.4 465.6 614.2 458.6 609.0C451.6 603.8 444.6 598.2 437.6 592.2C430.6 586.2 423.0 579.4 416.7 573.3C410.4 567.2 405.5 562.1 399.9 555.5C394.3 548.9 388.0 540.6 383.1 533.5C378.2 526.4 373.8 519.0 370.6 512.6C367.4 506.2 365.3 500.5 364.0 495.0C362.7 489.5 362.1 483.1 362.6 479.7C363.1 476.3 361.2 478.0 366.8 474.5C372.4 471.0 387.9 464.1 396.3 458.7C404.7 453.2 410.7 445.7 417.4 441.8C424.1 437.9 431.0 439.4 436.3 435.5C441.6 431.6 445.5 422.7 449.0 418.7C452.5 414.7 456.0 412.5 457.4 411.3" stroke="url(#rg)" stroke-width="1.35" stroke-dasharray="2.4 0.8 4.6 0.8 9 1.1 3 0.7" fill="none"/><path d="M590.6 634.1C586.0 633.0 573.1 630.8 563.3 627.8C553.5 624.8 540.6 620.5 531.9 616.3C523.2 612.1 517.9 607.8 510.9 602.7C503.9 597.6 497.0 592.9 490.0 585.9C483.0 578.9 474.9 568.8 469.0 560.8C463.1 552.8 457.9 544.3 454.4 537.7C450.9 531.1 449.0 527.3 448.1 521.0C447.2 514.7 448.9 505.1 449.0 500.0C449.1 494.9 447.2 495.8 449.0 490.3C450.8 484.8 454.9 474.1 459.5 467.1C464.1 460.1 469.3 453.8 476.3 448.2C483.3 442.6 493.9 437.4 501.6 433.4C509.3 429.4 515.2 426.6 522.6 424.0C530.0 421.4 534.6 419.9 545.8 417.6C557.0 415.3 574.3 412.2 590.0 410.3C605.7 408.4 623.3 407.1 640.0 406.4C656.7 405.7 673.3 405.7 690.0 406.0C706.7 406.3 721.7 406.8 740.0 408.0C758.3 409.2 781.7 410.5 800.0 413.0C818.3 415.5 835.0 418.5 850.0 423.0C865.0 427.5 879.8 434.9 890.0 439.8C900.2 444.7 904.0 447.5 911.0 452.4C918.0 457.3 925.9 463.6 932.0 469.2C938.1 474.8 945.2 483.2 947.9 486.0" stroke="url(#rg)" stroke-width="1.35" stroke-dasharray="5 0.8 2.2 0.7 8 1 1.6 0.8" fill="none"/><path d="M947.9 486.0C947.0 488.1 944.5 493.1 942.7 498.7C941.0 504.3 940.2 512.8 937.4 519.8C934.6 526.8 930.0 534.2 925.8 540.9C921.6 547.6 918.0 551.6 912.0 559.8C906.0 568.0 898.3 580.0 890.0 590.0C881.7 600.0 870.7 611.0 862.0 620.0C853.3 629.0 842.0 640.0 838.0 644.0" stroke="url(#rg)" stroke-width="1.35" stroke-dasharray="3.6 0.8 7 1 2 0.8 4.6 0.7" fill="none"/><path d="M524.6 579.6C522.7 577.2 516.7 571.3 513.0 565.0C509.3 558.7 505.2 549.9 502.6 541.9C500.0 533.9 497.7 523.8 497.3 516.8C496.9 509.8 498.7 504.4 500.5 500.0C502.3 495.6 504.2 494.7 507.9 490.3C511.6 485.9 516.6 478.7 522.6 473.4C528.6 468.1 536.7 462.9 543.7 458.7C550.7 454.5 557.0 451.4 564.7 448.2C572.4 445.0 577.5 442.7 590.0 439.7C602.5 436.7 623.3 432.1 640.0 430.0C656.7 427.9 673.3 427.3 690.0 427.0C706.7 426.7 723.3 427.0 740.0 428.0C756.7 429.0 773.3 430.3 790.0 433.0C806.7 435.7 823.3 438.8 840.0 444.0C856.7 449.2 878.9 458.4 890.0 464.0C901.1 469.6 901.2 472.6 906.8 477.7C912.4 482.8 920.9 491.7 923.7 494.5" stroke="url(#rg)" stroke-width="1.35" stroke-dasharray="7.6 1 3 0.8 1.6 0.8 6 0.8" fill="none"/><path d="M923.7 494.5C922.8 497.3 920.5 505.1 918.4 511.4C916.3 517.7 914.7 524.3 911.0 532.4C907.3 540.5 902.8 550.2 896.3 559.8C889.8 569.4 880.5 580.3 872.0 590.0C863.5 599.7 854.5 609.0 845.0 618.0C835.5 627.0 820.0 639.7 815.0 644.0" stroke="url(#rg)" stroke-width="1.35" stroke-dasharray="2.4 0.8 4.6 0.8 9 1.1 3 0.7" fill="none"/><path d="M544.9 566.0C543.8 564.4 540.0 561.0 538.2 556.6C536.4 552.2 535.0 546.1 534.0 539.8C533.0 533.5 531.0 525.5 531.9 518.9C532.8 512.3 537.2 504.8 539.2 500.0C541.2 495.2 539.5 494.7 543.7 490.3C548.0 485.9 557.3 477.9 564.7 473.4C572.1 468.8 575.5 467.6 588.0 463.0C600.5 458.4 623.0 449.8 640.0 446.0C657.0 442.2 673.3 441.3 690.0 440.5C706.7 439.7 723.3 440.1 740.0 441.0C756.7 441.9 773.3 443.2 790.0 446.0C806.7 448.8 823.3 451.7 840.0 458.0C856.7 464.3 879.4 476.5 890.0 484.0C900.6 491.5 901.4 499.8 903.7 503.0" stroke="url(#rg)" stroke-width="1.35" stroke-dasharray="5 0.8 2.2 0.7 8 1 1.6 0.8" fill="none"/><path d="M903.7 503.0C902.8 506.5 900.7 517.7 898.4 524.0C896.1 530.3 894.7 532.9 890.0 540.9C885.3 548.9 877.5 562.1 870.0 572.0C862.5 581.9 854.7 590.7 845.0 600.0C835.3 609.3 821.2 620.7 812.0 628.0C802.8 635.3 793.7 641.3 790.0 644.0" stroke="url(#rg)" stroke-width="1.35" stroke-dasharray="3.6 0.8 7 1 2 0.8 4.6 0.7" fill="none"/><path d="M558.7 547.1C558.4 545.2 557.1 540.3 557.0 535.6C556.9 530.9 556.4 524.8 558.1 518.9C559.9 513.0 564.3 505.1 567.5 500.0C570.7 494.9 572.0 492.3 577.4 488.0C582.8 483.7 589.6 479.0 600.0 474.0C610.4 469.0 625.0 461.8 640.0 458.0C655.0 454.2 673.3 452.1 690.0 451.0C706.7 449.9 723.3 450.5 740.0 451.5C756.7 452.5 773.3 453.8 790.0 457.0C806.7 460.2 825.8 465.2 840.0 471.0C854.2 476.8 867.2 486.0 875.0 492.0C882.8 498.0 885.0 504.5 887.0 507.0" stroke="url(#rg)" stroke-width="1.35" stroke-dasharray="7.6 1 3 0.8 1.6 0.8 6 0.8" fill="none"/><path d="M887.0 507.0C886.2 510.2 884.8 519.2 882.0 526.0C879.2 532.8 875.3 539.8 870.0 548.0C864.7 556.2 858.0 566.0 850.0 575.0C842.0 584.0 832.0 593.8 822.0 602.0C812.0 610.2 800.3 617.7 790.0 624.0C779.7 630.3 765.0 637.3 760.0 640.0" stroke="url(#rg)" stroke-width="1.35" stroke-dasharray="2.4 0.8 4.6 0.8 9 1.1 3 0.7" fill="none"/><path d="M574.8 538.8C575.3 535.1 575.4 523.3 578.0 516.8C580.6 510.3 585.3 505.5 590.6 500.0C595.9 494.5 600.1 489.5 610.0 484.0C619.9 478.5 635.0 470.8 650.0 467.0C665.0 463.2 683.3 461.8 700.0 461.0C716.7 460.2 733.3 460.7 750.0 462.0C766.7 463.3 785.0 465.7 800.0 469.0C815.0 472.3 829.2 477.0 840.0 482.0C850.8 487.0 859.2 494.0 865.0 499.0C870.8 504.0 873.3 509.8 875.0 512.0" stroke="url(#rg)" stroke-width="1.35" stroke-dasharray="5 0.8 2.2 0.7 8 1 1.6 0.8" fill="none"/><path d="M875.0 512.0C874.2 515.0 872.8 523.3 870.0 530.0C867.2 536.7 863.7 543.7 858.0 552.0C852.3 560.3 844.7 571.3 836.0 580.0C827.3 588.7 817.0 597.0 806.0 604.0C795.0 611.0 781.8 617.0 770.0 622.0C758.2 627.0 740.8 632.0 735.0 634.0" stroke="url(#rg)" stroke-width="1.35" stroke-dasharray="3.6 0.8 7 1 2 0.8 4.6 0.7" fill="none"/><path d="M589.5 533.5C591.2 529.7 594.9 517.4 600.0 510.5C605.1 503.6 610.0 497.9 620.0 492.0C630.0 486.1 645.0 479.0 660.0 475.0C675.0 471.0 693.3 468.9 710.0 468.0C726.7 467.1 744.2 468.2 760.0 469.5C775.8 470.8 791.3 472.9 805.0 476.0C818.7 479.1 832.2 483.7 842.0 488.0C851.8 492.3 858.5 497.6 864.0 502.0C869.5 506.4 872.9 512.1 874.7 514.1" stroke="url(#rg)" stroke-width="1.35" stroke-dasharray="7.6 1 3 0.8 1.6 0.8 6 0.8" fill="none"/><path d="M874.7 514.1C873.6 517.1 871.8 525.0 868.0 532.0C864.2 539.0 858.7 547.7 852.0 556.0C845.3 564.3 837.0 574.3 828.0 582.0C819.0 589.7 808.5 597.2 798.0 602.0C787.5 606.8 775.5 609.2 765.0 611.0C754.5 612.8 740.0 612.7 735.0 613.0" stroke="url(#rg)" stroke-width="1.35" stroke-dasharray="2.4 0.8 4.6 0.8 9 1.1 3 0.7" fill="none"/><path d="M941.6 389.2L982.7 418.7L1010.0 436.6L1024.8 454.5" stroke="url(#rg)" stroke-width="1.35" stroke-dasharray="5 0.8 2.2 0.7 8 1 1.6 0.8" fill="none" opacity="1"/><path d="M1011.1 459.8C1010.6 462.4 1008.1 469.8 1007.9 475.6C1007.7 481.4 1008.8 489.8 1010.0 494.5C1011.2 499.2 1014.8 500.5 1015.3 504.0C1015.8 507.5 1015.0 510.5 1013.2 515.6C1011.5 520.7 1008.8 527.1 1004.8 534.5C1000.8 541.9 996.5 548.9 989.0 559.8C981.5 570.7 969.5 586.0 960.0 600.0C950.5 614.0 936.5 636.5 931.8 643.8" stroke="url(#rg)" stroke-width="1.35" stroke-dasharray="3.6 0.8 7 1 2 0.8 4.6 0.7" fill="none"/><path d="M853.6 389.9C859.7 392.8 878.3 401.1 890.0 407.1C901.7 413.1 913.2 419.5 923.7 426.0C934.2 432.5 945.5 440.6 953.2 446.0C960.9 451.4 965.4 454.3 970.0 458.7C974.6 463.1 978.8 470.1 980.6 472.4" stroke="url(#rg)" stroke-width="1.35" stroke-dasharray="7.6 1 3 0.8 1.6 0.8 6 0.8" fill="none"/><path d="M980.6 472.4C979.5 474.0 976.1 476.8 974.2 481.9C972.3 487.0 970.8 496.3 969.0 503.0C967.2 509.7 966.3 515.6 963.7 521.9C961.1 528.2 956.9 534.6 953.2 540.9C949.5 547.2 948.0 550.3 941.6 559.8C935.2 569.3 925.3 584.0 915.0 598.0C904.7 612.0 885.8 636.3 880.0 644.0" stroke="url(#rg)" stroke-width="1.35" stroke-dasharray="2.4 0.8 4.6 0.8 9 1.1 3 0.7" fill="none"/><rect x="395.6" y="414.3" width="1.3" height="1.3" fill="#d41c1c"/><rect x="400.9" y="405.1" width="1.3" height="1.3" fill="#d41c1c"/><rect x="384.7" y="401.3" width="1.3" height="1.3" fill="#d41c1c"/><rect x="394.7" y="411.6" width="1.3" height="1.3" fill="#d41c1c"/><rect x="387.7" y="406.4" width="1.3" height="1.3" fill="#d41c1c"/><rect x="392.8" y="405.8" width="1.3" height="1.3" fill="#d41c1c"/><rect x="399.9" y="403.5" width="1.3" height="1.3" fill="#d41c1c"/><rect x="394.0" y="406.4" width="1.3" height="1.3" fill="#d41c1c"/><rect x="394.5" y="409.2" width="1.3" height="1.3" fill="#d41c1c"/><rect x="385.6" y="409.4" width="1.3" height="1.3" fill="#d41c1c"/><rect x="437.5" y="417.0" width="1.3" height="1.3" fill="#d41c1c"/><rect x="439.1" y="421.5" width="1.3" height="1.3" fill="#d41c1c"/><rect x="441.6" y="426.4" width="1.3" height="1.3" fill="#d41c1c"/><rect x="436.1" y="428.1" width="1.3" height="1.3" fill="#d41c1c"/><rect x="441.8" y="418.3" width="1.3" height="1.3" fill="#d41c1c"/><rect x="435.1" y="427.8" width="1.3" height="1.3" fill="#d41c1c"/><rect x="435.0" y="426.9" width="1.3" height="1.3" fill="#d41c1c"/><rect x="446.2" y="423.7" width="1.3" height="1.3" fill="#d41c1c"/><rect x="449.5" y="416.0" width="1.3" height="1.3" fill="#d41c1c"/><rect x="438.6" y="423.8" width="1.3" height="1.3" fill="#d41c1c"/><rect x="439.2" y="424.6" width="1.3" height="1.3" fill="#d41c1c"/><rect x="439.6" y="429.8" width="1.3" height="1.3" fill="#d41c1c"/><path d="M1131.0 488.0C1129.5 489.8 1122.9 495.1 1121.7 498.7C1120.5 502.2 1121.7 506.5 1123.8 509.3C1125.9 512.1 1131.1 511.8 1134.3 515.6C1137.5 519.5 1139.9 527.1 1142.7 532.4C1145.5 537.7 1148.7 543.7 1151.2 547.2C1153.7 550.7 1158.0 551.2 1157.5 553.5C1157.0 555.8 1151.8 558.1 1148.0 561.0C1144.2 563.9 1139.0 568.5 1135.0 571.0C1131.0 573.5 1125.8 575.2 1124.0 576.0" stroke="#d84a4a" stroke-width="1.2" stroke-dasharray="3 1 5 1.2" fill="none"/><path d="M1124.0 578.0L1100.0 590.0L1060.0 603.0L1020.0 618.0L985.0 636.0L972.0 644.0" stroke="#d84a4a" stroke-width="1.2" stroke-dasharray="4 1.4 2 1" fill="none" opacity="1"/><path d="M1124.8 465.0L1150.0 482.0L1185.0 500.0L1212.0 513.5" stroke="#e07070" stroke-width="1.1" stroke-dasharray="3 1.5 5 1" fill="none" opacity="1"/><path d="M1138.5 464.0L1160.0 477.0L1184.9 490.3" stroke="#e07070" stroke-width="1.1" stroke-dasharray="4 1.5" fill="none" opacity="1"/><path d="M1157.0 436.0L1152.0 448.0" stroke="#e05050" stroke-width="1.1" fill="none" opacity="1"/><path d="M1071.0 398.7L1071.5 432.4" stroke="#e8b0b0" stroke-width="1.2" stroke-dasharray="1.2 5" fill="none" opacity="1"/><rect x="365.1" y="426.2" width="1.2" height="1.2" fill="#ffffff"/><rect x="333.7" y="410.2" width="1.2" height="1.2" fill="#ffffff"/><rect x="360.5" y="417.7" width="1.2" height="1.2" fill="#c8c8f4"/><rect x="308.0" y="425.8" width="1.2" height="1.2" fill="#e8b8b8"/><rect x="326.6" y="417.6" width="1.2" height="1.2" fill="#e8b8b8"/><rect x="275.3" y="403.9" width="1.2" height="1.2" fill="#ffffff"/><rect x="325.4" y="423.3" width="1.2" height="1.2" fill="#8888e8"/><rect x="374.6" y="420.0" width="1.2" height="1.2" fill="#a8a8f0"/><rect x="322.0" y="418.3" width="1.2" height="1.2" fill="#ffffff"/><rect x="296.8" y="433.2" width="1.2" height="1.2" fill="#ffffff"/><rect x="310.9" y="396.1" width="1.2" height="1.2" fill="#e8b8b8"/><rect x="379.4" y="436.2" width="1.2" height="1.2" fill="#e8b8b8"/><rect x="325.6" y="433.1" width="1.2" height="1.2" fill="#8888e8"/><rect x="331.5" y="424.7" width="1.2" height="1.2" fill="#a8a8f0"/><rect x="301.3" y="409.5" width="1.2" height="1.2" fill="#c8c8f4"/><rect x="321.1" y="425.4" width="1.2" height="1.2" fill="#e8b8b8"/><rect x="324.5" y="408.1" width="1.2" height="1.2" fill="#8888e8"/><rect x="319.4" y="424.2" width="1.2" height="1.2" fill="#a8a8f0"/><rect x="315.6" y="404.3" width="1.2" height="1.2" fill="#ffffff"/><rect x="338.1" y="412.7" width="1.2" height="1.2" fill="#8888e8"/><rect x="351.9" y="413.9" width="1.2" height="1.2" fill="#8888e8"/><rect x="300.3" y="417.4" width="1.2" height="1.2" fill="#a8a8f0"/><rect x="336.5" y="420.6" width="1.2" height="1.2" fill="#a8a8f0"/><rect x="340.0" y="402.2" width="1.2" height="1.2" fill="#ffffff"/><rect x="363.3" y="428.8" width="1.2" height="1.2" fill="#e8b8b8"/><rect x="325.1" y="404.7" width="1.2" height="1.2" fill="#e8b8b8"/><rect x="337.1" y="438.7" width="1.2" height="1.2" fill="#f0d0d0"/><rect x="313.7" y="431.9" width="1.2" height="1.2" fill="#8888e8"/><rect x="326.6" y="405.4" width="1.2" height="1.2" fill="#a8a8f0"/><rect x="362.7" y="404.9" width="1.2" height="1.2" fill="#f0d0d0"/><rect x="288.1" y="423.1" width="1.2" height="1.2" fill="#f0d0d0"/><rect x="363.2" y="423.9" width="1.2" height="1.2" fill="#f0d0d0"/><rect x="348.9" y="401.1" width="1.2" height="1.2" fill="#f0d0d0"/><rect x="331.4" y="408.2" width="1.2" height="1.2" fill="#f0d0d0"/><rect x="312.6" y="438.2" width="1.2" height="1.2" fill="#e8b8b8"/><rect x="337.5" y="423.1" width="1.2" height="1.2" fill="#8888e8"/><rect x="357.5" y="422.7" width="1.2" height="1.2" fill="#e8b8b8"/><rect x="343.1" y="421.1" width="1.2" height="1.2" fill="#a8a8f0"/><rect x="298.2" y="416.7" width="1.2" height="1.2" fill="#a8a8f0"/><rect x="309.3" y="419.4" width="1.2" height="1.2" fill="#ffffff"/><rect x="331.2" y="413.2" width="1.2" height="1.2" fill="#e8b8b8"/><rect x="354.5" y="410.7" width="1.2" height="1.2" fill="#8888e8"/><rect x="336.6" y="436.4" width="1.2" height="1.2" fill="#8888e8"/><rect x="283.5" y="403.4" width="1.2" height="1.2" fill="#c8c8f4"/><rect x="342.6" y="419.7" width="1.2" height="1.2" fill="#c8c8f4"/><rect x="359.1" y="398.9" width="1.2" height="1.2" fill="#f0d0d0"/><rect x="369.3" y="392.5" width="1.2" height="1.2" fill="#e8b8b8"/><rect x="355.1" y="417.2" width="1.2" height="1.2" fill="#c8c8f4"/><rect x="339.2" y="423.2" width="1.2" height="1.2" fill="#8888e8"/><rect x="358.3" y="414.3" width="1.2" height="1.2" fill="#c8c8f4"/><rect x="359.4" y="404.3" width="1.2" height="1.2" fill="#a8a8f0"/><rect x="373.4" y="440.4" width="1.2" height="1.2" fill="#e8b8b8"/><rect x="290.2" y="415.7" width="1.2" height="1.2" fill="#a8a8f0"/><rect x="332.1" y="419.5" width="1.2" height="1.2" fill="#c8c8f4"/><rect x="349.3" y="435.4" width="1.2" height="1.2" fill="#f0d0d0"/><rect x="331.3" y="410.4" width="1.2" height="1.2" fill="#8888e8"/><rect x="309.0" y="405.5" width="1.2" height="1.2" fill="#a8a8f0"/><rect x="330.3" y="432.8" width="1.2" height="1.2" fill="#e8b8b8"/><rect x="307.0" y="419.9" width="1.2" height="1.2" fill="#c8c8f4"/><rect x="354.8" y="391.7" width="1.2" height="1.2" fill="#c8c8f4"/><rect x="336.1" y="416.0" width="1.2" height="1.2" fill="#c8c8f4"/><rect x="336.0" y="407.0" width="1.2" height="1.2" fill="#e8b8b8"/><rect x="316.6" y="412.6" width="1.2" height="1.2" fill="#c8c8f4"/><rect x="310.3" y="429.4" width="1.2" height="1.2" fill="#e8b8b8"/><rect x="324.0" y="423.1" width="1.2" height="1.2" fill="#a8a8f0"/><rect x="319.2" y="415.4" width="1.2" height="1.2" fill="#c8c8f4"/><rect x="325.2" y="397.7" width="1.2" height="1.2" fill="#c8c8f4"/><rect x="323.8" y="410.2" width="1.2" height="1.2" fill="#ffffff"/><rect x="298.2" y="396.0" width="1.2" height="1.2" fill="#ffffff"/><rect x="325.5" y="408.6" width="1.2" height="1.2" fill="#ffffff"/><rect x="360.5" y="418.9" width="1.2" height="1.2" fill="#8888e8"/><rect x="307.6" y="445.7" width="1.2" height="1.2" fill="#ffffff"/><rect x="313.3" y="414.7" width="1.2" height="1.2" fill="#e8b8b8"/><rect x="326.1" y="431.9" width="1.2" height="1.2" fill="#ffffff"/><rect x="331.9" y="419.8" width="1.2" height="1.2" fill="#c8c8f4"/><rect x="350.5" y="406.4" width="1.2" height="1.2" fill="#e8b8b8"/><rect x="334.6" y="400.7" width="1.2" height="1.2" fill="#ffffff"/><rect x="308.0" y="409.3" width="1.2" height="1.2" fill="#c8c8f4"/><rect x="327.0" y="392.8" width="1.2" height="1.2" fill="#c8c8f4"/><rect x="343.8" y="389.9" width="1.2" height="1.2" fill="#ffffff"/><rect x="354.6" y="432.3" width="1.2" height="1.2" fill="#c8c8f4"/><rect x="300.8" y="408.7" width="1.2" height="1.2" fill="#8888e8"/><rect x="340.6" y="405.6" width="1.2" height="1.2" fill="#c8c8f4"/><rect x="305.5" y="436.6" width="1.2" height="1.2" fill="#c8c8f4"/><rect x="349.2" y="393.4" width="1.2" height="1.2" fill="#8888e8"/><rect x="358.9" y="406.2" width="1.2" height="1.2" fill="#c8c8f4"/><rect x="368.3" y="417.8" width="1.2" height="1.2" fill="#e8b8b8"/><rect x="313.3" y="410.0" width="1.2" height="1.2" fill="#e8b8b8"/><rect x="348.9" y="417.0" width="1.2" height="1.2" fill="#e8b8b8"/><rect x="333.9" y="417.5" width="1.2" height="1.2" fill="#f0d0d0"/><rect x="314.6" y="398.9" width="1.2" height="1.2" fill="#8888e8"/><rect x="330.5" y="397.0" width="1.2" height="1.2" fill="#a8a8f0"/><rect x="285.9" y="391.3" width="1.2" height="1.2" fill="#e8b8b8"/><rect x="321.6" y="415.1" width="1.2" height="1.2" fill="#e8b8b8"/><rect x="334.9" y="446.4" width="1.2" height="1.2" fill="#8888e8"/><rect x="353.3" y="408.8" width="1.2" height="1.2" fill="#e8b8b8"/><rect x="331.3" y="389.6" width="1.2" height="1.2" fill="#e8b8b8"/><rect x="324.7" y="404.0" width="1.2" height="1.2" fill="#ffffff"/><rect x="340.5" y="406.9" width="1.2" height="1.2" fill="#c8c8f4"/><rect x="303.6" y="412.2" width="1.2" height="1.2" fill="#8888e8"/><rect x="305.3" y="410.2" width="1.2" height="1.2" fill="#8888e8"/><rect x="310.1" y="545.7" width="1.2" height="1.2" fill="#f0d0d0"/><rect x="315.9" y="576.1" width="1.2" height="1.2" fill="#f0d0d0"/><rect x="316.1" y="533.0" width="1.2" height="1.2" fill="#a8a8f0"/><rect x="291.0" y="516.9" width="1.2" height="1.2" fill="#e8b8b8"/><rect x="317.1" y="531.8" width="1.2" height="1.2" fill="#a8a8f0"/><rect x="314.9" y="542.9" width="1.2" height="1.2" fill="#a8a8f0"/><rect x="290.4" y="557.8" width="1.2" height="1.2" fill="#f0d0d0"/><rect x="295.0" y="548.1" width="1.2" height="1.2" fill="#ffffff"/><rect x="306.3" y="542.9" width="1.2" height="1.2" fill="#8888e8"/><rect x="284.9" y="558.8" width="1.2" height="1.2" fill="#ffffff"/><rect x="276.7" y="532.0" width="1.2" height="1.2" fill="#8888e8"/><rect x="288.9" y="546.1" width="1.2" height="1.2" fill="#8888e8"/><rect x="337.7" y="578.5" width="1.2" height="1.2" fill="#8888e8"/><rect x="308.4" y="550.4" width="1.2" height="1.2" fill="#f0d0d0"/><rect x="321.8" y="534.9" width="1.2" height="1.2" fill="#8888e8"/><rect x="314.5" y="561.5" width="1.2" height="1.2" fill="#a8a8f0"/><rect x="305.5" y="569.2" width="1.2" height="1.2" fill="#a8a8f0"/><rect x="318.6" y="578.3" width="1.2" height="1.2" fill="#8888e8"/><rect x="325.3" y="518.4" width="1.2" height="1.2" fill="#a8a8f0"/><rect x="307.2" y="560.8" width="1.2" height="1.2" fill="#f0d0d0"/><rect x="283.5" y="571.5" width="1.2" height="1.2" fill="#c8c8f4"/><rect x="313.7" y="566.6" width="1.2" height="1.2" fill="#a8a8f0"/><rect x="321.0" y="560.4" width="1.2" height="1.2" fill="#8888e8"/><rect x="304.2" y="552.7" width="1.2" height="1.2" fill="#a8a8f0"/><rect x="297.8" y="573.7" width="1.2" height="1.2" fill="#c8c8f4"/><rect x="309.9" y="583.3" width="1.2" height="1.2" fill="#ffffff"/><rect x="290.4" y="572.5" width="1.2" height="1.2" fill="#c8c8f4"/><rect x="309.4" y="549.1" width="1.2" height="1.2" fill="#ffffff"/><rect x="328.8" y="584.9" width="1.2" height="1.2" fill="#a8a8f0"/><rect x="334.3" y="585.0" width="1.2" height="1.2" fill="#a8a8f0"/><rect x="298.7" y="536.0" width="1.2" height="1.2" fill="#ffffff"/><rect x="298.6" y="586.7" width="1.2" height="1.2" fill="#8888e8"/><rect x="331.0" y="541.1" width="1.2" height="1.2" fill="#c8c8f4"/><rect x="306.0" y="498.9" width="1.2" height="1.2" fill="#8888e8"/><rect x="288.2" y="544.2" width="1.2" height="1.2" fill="#8888e8"/><rect x="291.0" y="555.8" width="1.2" height="1.2" fill="#8888e8"/><rect x="298.3" y="589.1" width="1.2" height="1.2" fill="#8888e8"/><rect x="314.0" y="583.8" width="1.2" height="1.2" fill="#8888e8"/><rect x="313.5" y="572.1" width="1.2" height="1.2" fill="#8888e8"/><rect x="298.1" y="558.0" width="1.2" height="1.2" fill="#e8b8b8"/><rect x="313.5" y="570.3" width="1.2" height="1.2" fill="#8888e8"/><rect x="295.8" y="536.5" width="1.2" height="1.2" fill="#a8a8f0"/><rect x="295.0" y="535.5" width="1.2" height="1.2" fill="#a8a8f0"/><rect x="309.7" y="521.3" width="1.2" height="1.2" fill="#c8c8f4"/><rect x="299.6" y="519.0" width="1.2" height="1.2" fill="#e8b8b8"/><rect x="291.7" y="544.9" width="1.2" height="1.2" fill="#c8c8f4"/><rect x="303.5" y="576.5" width="1.2" height="1.2" fill="#f0d0d0"/><rect x="322.2" y="561.8" width="1.2" height="1.2" fill="#f0d0d0"/><rect x="298.9" y="530.1" width="1.2" height="1.2" fill="#a8a8f0"/><rect x="320.4" y="546.9" width="1.2" height="1.2" fill="#c8c8f4"/><rect x="287.5" y="589.0" width="1.2" height="1.2" fill="#c8c8f4"/><rect x="316.6" y="578.9" width="1.2" height="1.2" fill="#8888e8"/><rect x="324.8" y="579.9" width="1.2" height="1.2" fill="#8888e8"/><rect x="322.7" y="577.0" width="1.2" height="1.2" fill="#e8b8b8"/><rect x="283.6" y="573.1" width="1.2" height="1.2" fill="#8888e8"/><rect x="319.2" y="576.7" width="1.2" height="1.2" fill="#ffffff"/><rect x="310.6" y="528.7" width="1.2" height="1.2" fill="#f0d0d0"/><rect x="295.8" y="548.8" width="1.2" height="1.2" fill="#a8a8f0"/><rect x="296.5" y="568.4" width="1.2" height="1.2" fill="#ffffff"/><rect x="333.4" y="521.1" width="1.2" height="1.2" fill="#ffffff"/><rect x="474.3" y="642.8" width="1.2" height="1.2" fill="#a8a8f0"/><rect x="440.8" y="566.2" width="1.2" height="1.2" fill="#8888e8"/><rect x="485.1" y="566.1" width="1.2" height="1.2" fill="#8888e8"/><rect x="457.8" y="607.6" width="1.2" height="1.2" fill="#8888e8"/><rect x="493.9" y="598.2" width="1.2" height="1.2" fill="#8888e8"/><rect x="507.2" y="616.7" width="1.2" height="1.2" fill="#8888e8"/><rect x="482.8" y="608.1" width="1.2" height="1.2" fill="#e8b8b8"/><rect x="520.2" y="638.8" width="1.2" height="1.2" fill="#8888e8"/><rect x="521.1" y="602.0" width="1.2" height="1.2" fill="#a8a8f0"/><rect x="576.4" y="594.8" width="1.2" height="1.2" fill="#f0d0d0"/><rect x="490.2" y="606.7" width="1.2" height="1.2" fill="#c8c8f4"/><rect x="553.0" y="609.2" width="1.2" height="1.2" fill="#e8b8b8"/><rect x="543.4" y="616.1" width="1.2" height="1.2" fill="#a8a8f0"/><rect x="473.6" y="639.4" width="1.2" height="1.2" fill="#8888e8"/><rect x="500.0" y="597.7" width="1.2" height="1.2" fill="#e8b8b8"/><rect x="506.5" y="600.1" width="1.2" height="1.2" fill="#c8c8f4"/><rect x="502.9" y="587.6" width="1.2" height="1.2" fill="#f0d0d0"/><rect x="568.3" y="589.3" width="1.2" height="1.2" fill="#ffffff"/><rect x="497.2" y="592.3" width="1.2" height="1.2" fill="#a8a8f0"/><rect x="513.0" y="608.6" width="1.2" height="1.2" fill="#c8c8f4"/><rect x="535.8" y="580.4" width="1.2" height="1.2" fill="#ffffff"/><rect x="450.8" y="605.5" width="1.2" height="1.2" fill="#e8b8b8"/><rect x="519.3" y="594.6" width="1.2" height="1.2" fill="#ffffff"/><rect x="491.8" y="625.0" width="1.2" height="1.2" fill="#8888e8"/><rect x="487.0" y="612.0" width="1.2" height="1.2" fill="#c8c8f4"/><rect x="498.7" y="587.2" width="1.2" height="1.2" fill="#a8a8f0"/><rect x="473.6" y="610.8" width="1.2" height="1.2" fill="#ffffff"/><rect x="505.4" y="606.4" width="1.2" height="1.2" fill="#f0d0d0"/><rect x="503.2" y="623.2" width="1.2" height="1.2" fill="#ffffff"/><rect x="484.9" y="602.6" width="1.2" height="1.2" fill="#c8c8f4"/><rect x="522.0" y="622.0" width="1.2" height="1.2" fill="#f0d0d0"/><rect x="492.5" y="597.1" width="1.2" height="1.2" fill="#e8b8b8"/><rect x="525.0" y="624.2" width="1.2" height="1.2" fill="#c8c8f4"/><rect x="524.4" y="588.8" width="1.2" height="1.2" fill="#a8a8f0"/><rect x="459.3" y="621.2" width="1.2" height="1.2" fill="#c8c8f4"/><rect x="505.7" y="610.4" width="1.2" height="1.2" fill="#ffffff"/><rect x="594.6" y="613.2" width="1.2" height="1.2" fill="#f0d0d0"/><rect x="506.8" y="623.8" width="1.2" height="1.2" fill="#f0d0d0"/><rect x="529.9" y="627.8" width="1.2" height="1.2" fill="#a8a8f0"/><rect x="545.1" y="591.7" width="1.2" height="1.2" fill="#8888e8"/><rect x="562.7" y="593.0" width="1.2" height="1.2" fill="#a8a8f0"/><rect x="460.2" y="606.7" width="1.2" height="1.2" fill="#c8c8f4"/><rect x="524.5" y="580.4" width="1.2" height="1.2" fill="#a8a8f0"/><rect x="500.1" y="610.9" width="1.2" height="1.2" fill="#ffffff"/><rect x="551.0" y="600.1" width="1.2" height="1.2" fill="#c8c8f4"/><rect x="546.8" y="622.6" width="1.2" height="1.2" fill="#c8c8f4"/><rect x="509.6" y="609.6" width="1.2" height="1.2" fill="#c8c8f4"/><rect x="520.6" y="626.0" width="1.2" height="1.2" fill="#a8a8f0"/><rect x="442.5" y="610.0" width="1.2" height="1.2" fill="#a8a8f0"/><rect x="513.6" y="603.2" width="1.2" height="1.2" fill="#a8a8f0"/><rect x="505.5" y="578.2" width="1.2" height="1.2" fill="#ffffff"/><rect x="529.8" y="613.3" width="1.2" height="1.2" fill="#ffffff"/><rect x="531.1" y="617.5" width="1.2" height="1.2" fill="#a8a8f0"/><rect x="445.8" y="597.5" width="1.2" height="1.2" fill="#ffffff"/><rect x="531.2" y="632.7" width="1.2" height="1.2" fill="#8888e8"/><rect x="442.9" y="634.4" width="1.2" height="1.2" fill="#a8a8f0"/><rect x="534.5" y="596.7" width="1.2" height="1.2" fill="#ffffff"/><rect x="469.9" y="612.8" width="1.2" height="1.2" fill="#8888e8"/><rect x="477.5" y="606.8" width="1.2" height="1.2" fill="#f0d0d0"/><rect x="446.5" y="603.6" width="1.2" height="1.2" fill="#8888e8"/><rect x="477.0" y="561.1" width="1.2" height="1.2" fill="#c8c8f4"/><rect x="536.3" y="629.6" width="1.2" height="1.2" fill="#c8c8f4"/><rect x="511.8" y="597.5" width="1.2" height="1.2" fill="#8888e8"/><rect x="498.0" y="597.3" width="1.2" height="1.2" fill="#f0d0d0"/><rect x="454.3" y="584.8" width="1.2" height="1.2" fill="#c8c8f4"/><rect x="556.3" y="578.4" width="1.2" height="1.2" fill="#ffffff"/><rect x="436.0" y="613.0" width="1.2" height="1.2" fill="#8888e8"/><rect x="488.1" y="620.8" width="1.2" height="1.2" fill="#c8c8f4"/><rect x="525.9" y="636.4" width="1.2" height="1.2" fill="#c8c8f4"/><rect x="489.0" y="618.9" width="1.2" height="1.2" fill="#ffffff"/><rect x="549.3" y="618.4" width="1.2" height="1.2" fill="#f0d0d0"/><rect x="468.5" y="556.5" width="1.2" height="1.2" fill="#8888e8"/><rect x="527.0" y="615.1" width="1.2" height="1.2" fill="#f0d0d0"/><rect x="513.4" y="629.0" width="1.2" height="1.2" fill="#ffffff"/><rect x="428.7" y="603.7" width="1.2" height="1.2" fill="#a8a8f0"/><rect x="515.4" y="582.2" width="1.2" height="1.2" fill="#f0d0d0"/><rect x="457.2" y="610.4" width="1.2" height="1.2" fill="#c8c8f4"/><rect x="512.8" y="596.7" width="1.2" height="1.2" fill="#c8c8f4"/><rect x="515.2" y="598.2" width="1.2" height="1.2" fill="#a8a8f0"/><rect x="538.6" y="615.9" width="1.2" height="1.2" fill="#f0d0d0"/><rect x="529.1" y="579.5" width="1.2" height="1.2" fill="#c8c8f4"/><rect x="467.8" y="580.0" width="1.2" height="1.2" fill="#8888e8"/><rect x="478.0" y="626.3" width="1.2" height="1.2" fill="#ffffff"/><rect x="510.1" y="589.5" width="1.2" height="1.2" fill="#e8b8b8"/><rect x="472.9" y="611.4" width="1.2" height="1.2" fill="#c8c8f4"/><rect x="467.1" y="599.8" width="1.2" height="1.2" fill="#8888e8"/><rect x="485.0" y="591.4" width="1.2" height="1.2" fill="#f0d0d0"/><rect x="491.6" y="605.7" width="1.2" height="1.2" fill="#e8b8b8"/><rect x="492.0" y="588.3" width="1.2" height="1.2" fill="#8888e8"/><rect x="543.6" y="614.4" width="1.2" height="1.2" fill="#f0d0d0"/><rect x="486.0" y="622.3" width="1.2" height="1.2" fill="#c8c8f4"/><rect x="504.8" y="621.8" width="1.2" height="1.2" fill="#8888e8"/><rect x="556.1" y="592.1" width="1.2" height="1.2" fill="#8888e8"/><rect x="443.3" y="576.5" width="1.2" height="1.2" fill="#e8b8b8"/><rect x="525.1" y="590.5" width="1.2" height="1.2" fill="#f0d0d0"/><rect x="575.2" y="578.4" width="1.2" height="1.2" fill="#ffffff"/><rect x="583.5" y="571.4" width="1.2" height="1.2" fill="#ffffff"/><rect x="583.7" y="604.3" width="1.2" height="1.2" fill="#a8a8f0"/><rect x="511.5" y="604.0" width="1.2" height="1.2" fill="#c8c8f4"/><rect x="524.7" y="606.9" width="1.2" height="1.2" fill="#e8b8b8"/><rect x="455.4" y="601.7" width="1.2" height="1.2" fill="#c8c8f4"/><rect x="513.1" y="617.2" width="1.2" height="1.2" fill="#ffffff"/><rect x="475.7" y="612.2" width="1.2" height="1.2" fill="#8888e8"/><rect x="525.1" y="636.3" width="1.2" height="1.2" fill="#f0d0d0"/><rect x="528.5" y="614.7" width="1.2" height="1.2" fill="#ffffff"/><rect x="482.7" y="609.5" width="1.2" height="1.2" fill="#ffffff"/><rect x="509.3" y="575.6" width="1.2" height="1.2" fill="#ffffff"/><rect x="576.0" y="600.0" width="1.2" height="1.2" fill="#a8a8f0"/><rect x="539.8" y="597.9" width="1.2" height="1.2" fill="#ffffff"/><rect x="379.9" y="616.1" width="1.2" height="1.2" fill="#f0d0d0"/><rect x="461.4" y="633.7" width="1.2" height="1.2" fill="#a8a8f0"/><rect x="538.3" y="608.4" width="1.2" height="1.2" fill="#a8a8f0"/><rect x="515.3" y="590.1" width="1.2" height="1.2" fill="#f0d0d0"/><rect x="543.4" y="595.2" width="1.2" height="1.2" fill="#c8c8f4"/><rect x="534.2" y="622.2" width="1.2" height="1.2" fill="#e8b8b8"/><rect x="590.0" y="611.1" width="1.2" height="1.2" fill="#c8c8f4"/><rect x="522.1" y="636.2" width="1.2" height="1.2" fill="#ffffff"/><rect x="449.3" y="644.0" width="1.2" height="1.2" fill="#a8a8f0"/><rect x="514.3" y="604.3" width="1.2" height="1.2" fill="#f0d0d0"/><rect x="507.0" y="620.3" width="1.2" height="1.2" fill="#a8a8f0"/><rect x="529.4" y="582.8" width="1.2" height="1.2" fill="#c8c8f4"/><rect x="479.1" y="609.6" width="1.2" height="1.2" fill="#8888e8"/><rect x="516.7" y="586.3" width="1.2" height="1.2" fill="#a8a8f0"/><rect x="500.4" y="608.9" width="1.2" height="1.2" fill="#c8c8f4"/><rect x="468.5" y="584.5" width="1.2" height="1.2" fill="#e8b8b8"/><rect x="505.3" y="615.3" width="1.2" height="1.2" fill="#ffffff"/><rect x="439.1" y="603.0" width="1.2" height="1.2" fill="#e8b8b8"/><rect x="509.3" y="607.6" width="1.2" height="1.2" fill="#c8c8f4"/><rect x="555.0" y="607.9" width="1.2" height="1.2" fill="#ffffff"/><rect x="454.3" y="610.7" width="1.2" height="1.2" fill="#e8b8b8"/><rect x="471.4" y="603.3" width="1.2" height="1.2" fill="#8888e8"/><rect x="515.6" y="615.6" width="1.2" height="1.2" fill="#8888e8"/><rect x="547.3" y="632.6" width="1.2" height="1.2" fill="#c8c8f4"/><rect x="477.7" y="614.7" width="1.2" height="1.2" fill="#ffffff"/><rect x="500.2" y="619.4" width="1.2" height="1.2" fill="#a8a8f0"/><rect x="524.7" y="602.2" width="1.2" height="1.2" fill="#a8a8f0"/><rect x="511.2" y="609.1" width="1.2" height="1.2" fill="#ffffff"/><rect x="543.9" y="576.3" width="1.2" height="1.2" fill="#e8b8b8"/><rect x="498.4" y="601.9" width="1.2" height="1.2" fill="#e8b8b8"/><rect x="490.8" y="599.6" width="1.2" height="1.2" fill="#f0d0d0"/><rect x="494.7" y="634.3" width="1.2" height="1.2" fill="#a8a8f0"/><rect x="546.6" y="622.0" width="1.2" height="1.2" fill="#a8a8f0"/><rect x="544.5" y="609.6" width="1.2" height="1.2" fill="#8888e8"/><rect x="476.4" y="610.3" width="1.2" height="1.2" fill="#a8a8f0"/><rect x="519.4" y="622.0" width="1.2" height="1.2" fill="#ffffff"/><rect x="493.8" y="618.8" width="1.2" height="1.2" fill="#c8c8f4"/><rect x="1198.0" y="454.9" width="1.2" height="1.2" fill="#ffffff"/><rect x="1174.4" y="465.4" width="1.2" height="1.2" fill="#ffffff"/><rect x="1179.9" y="610.0" width="1.2" height="1.2" fill="#c8c8f4"/><rect x="1124.9" y="473.8" width="1.2" height="1.2" fill="#4848e0"/><rect x="1203.6" y="499.3" width="1.2" height="1.2" fill="#4848e0"/><rect x="1172.4" y="451.0" width="1.2" height="1.2" fill="#f0d0d0"/><rect x="1180.9" y="465.3" width="1.2" height="1.2" fill="#7070e8"/><rect x="1122.6" y="530.2" width="1.2" height="1.2" fill="#ffffff"/><rect x="1176.9" y="532.5" width="1.2" height="1.2" fill="#c8c8f4"/><rect x="1191.6" y="521.4" width="1.2" height="1.2" fill="#a8a8f0"/><rect x="1209.5" y="555.5" width="1.2" height="1.2" fill="#a8a8f0"/><rect x="1170.9" y="417.8" width="1.2" height="1.2" fill="#ffffff"/><rect x="1172.6" y="447.9" width="1.2" height="1.2" fill="#c8c8f4"/><rect x="1193.1" y="533.6" width="1.2" height="1.2" fill="#7070e8"/><rect x="1195.2" y="556.4" width="1.2" height="1.2" fill="#f0d0d0"/><rect x="1196.2" y="518.5" width="1.2" height="1.2" fill="#a8a8f0"/><rect x="1158.9" y="459.4" width="1.2" height="1.2" fill="#c8c8f4"/><rect x="1167.3" y="482.9" width="1.2" height="1.2" fill="#c8c8f4"/><rect x="1177.8" y="496.0" width="1.2" height="1.2" fill="#a8a8f0"/><rect x="1174.0" y="517.2" width="1.2" height="1.2" fill="#e8b8b8"/><rect x="1192.7" y="485.2" width="1.2" height="1.2" fill="#7070e8"/><rect x="1180.5" y="516.8" width="1.2" height="1.2" fill="#ffffff"/><rect x="1144.4" y="484.0" width="1.2" height="1.2" fill="#e8b8b8"/><rect x="1157.7" y="446.6" width="1.2" height="1.2" fill="#e8b8b8"/><rect x="1175.7" y="496.7" width="1.2" height="1.2" fill="#ffffff"/><rect x="1187.3" y="441.0" width="1.2" height="1.2" fill="#e8b8b8"/><rect x="1169.7" y="549.8" width="1.2" height="1.2" fill="#4848e0"/><rect x="1204.3" y="586.2" width="1.2" height="1.2" fill="#f0d0d0"/><rect x="1198.6" y="458.9" width="1.2" height="1.2" fill="#f0d0d0"/><rect x="1182.1" y="485.8" width="1.2" height="1.2" fill="#c8c8f4"/><rect x="1142.4" y="524.8" width="1.2" height="1.2" fill="#c8c8f4"/><rect x="1168.4" y="457.0" width="1.2" height="1.2" fill="#c8c8f4"/><rect x="1169.4" y="413.9" width="1.2" height="1.2" fill="#f0d0d0"/><rect x="1176.1" y="525.1" width="1.2" height="1.2" fill="#e8b8b8"/><rect x="1168.5" y="480.2" width="1.2" height="1.2" fill="#e8b8b8"/><rect x="1184.8" y="524.1" width="1.2" height="1.2" fill="#e8b8b8"/><rect x="1166.5" y="501.2" width="1.2" height="1.2" fill="#7070e8"/><rect x="1176.6" y="424.7" width="1.2" height="1.2" fill="#4848e0"/><rect x="1189.2" y="434.6" width="1.2" height="1.2" fill="#7070e8"/><rect x="1178.6" y="495.4" width="1.2" height="1.2" fill="#e8b8b8"/><rect x="1193.0" y="631.5" width="1.2" height="1.2" fill="#4848e0"/><rect x="1169.0" y="437.8" width="1.2" height="1.2" fill="#7070e8"/><rect x="1156.0" y="486.6" width="1.2" height="1.2" fill="#e8b8b8"/><rect x="1183.3" y="439.8" width="1.2" height="1.2" fill="#e8b8b8"/><rect x="1156.6" y="460.4" width="1.2" height="1.2" fill="#e8b8b8"/><rect x="1201.7" y="486.5" width="1.2" height="1.2" fill="#e8b8b8"/><rect x="1201.9" y="399.1" width="1.2" height="1.2" fill="#c8c8f4"/><rect x="1181.8" y="518.9" width="1.2" height="1.2" fill="#a8a8f0"/><rect x="1200.9" y="464.4" width="1.2" height="1.2" fill="#a8a8f0"/><rect x="1204.1" y="489.9" width="1.2" height="1.2" fill="#c8c8f4"/><rect x="1139.9" y="512.2" width="1.2" height="1.2" fill="#4848e0"/><rect x="1176.8" y="467.1" width="1.2" height="1.2" fill="#7070e8"/><rect x="1157.8" y="468.3" width="1.2" height="1.2" fill="#7070e8"/><rect x="1208.0" y="428.4" width="1.2" height="1.2" fill="#c8c8f4"/><rect x="1169.3" y="455.8" width="1.2" height="1.2" fill="#a8a8f0"/><rect x="1188.0" y="470.0" width="1.2" height="1.2" fill="#c8c8f4"/><rect x="1185.8" y="485.9" width="1.2" height="1.2" fill="#7070e8"/><rect x="1166.6" y="483.1" width="1.2" height="1.2" fill="#c8c8f4"/><rect x="1131.9" y="442.8" width="1.2" height="1.2" fill="#e8b8b8"/><rect x="1160.3" y="486.3" width="1.2" height="1.2" fill="#4848e0"/><rect x="1148.9" y="497.3" width="1.2" height="1.2" fill="#c8c8f4"/><rect x="1129.6" y="463.2" width="1.2" height="1.2" fill="#a8a8f0"/><rect x="1134.3" y="486.2" width="1.2" height="1.2" fill="#7070e8"/><rect x="1169.6" y="461.9" width="1.2" height="1.2" fill="#a8a8f0"/><rect x="1172.5" y="457.7" width="1.2" height="1.2" fill="#c8c8f4"/><rect x="1186.2" y="422.9" width="1.2" height="1.2" fill="#ffffff"/><rect x="1186.9" y="442.3" width="1.2" height="1.2" fill="#7070e8"/><rect x="1189.5" y="496.0" width="1.2" height="1.2" fill="#4848e0"/><rect x="1151.8" y="499.0" width="1.2" height="1.2" fill="#4848e0"/><rect x="1174.6" y="509.3" width="1.2" height="1.2" fill="#4848e0"/><rect x="1200.6" y="497.1" width="1.2" height="1.2" fill="#f0d0d0"/><rect x="1179.5" y="426.0" width="1.2" height="1.2" fill="#f0d0d0"/><rect x="1205.1" y="473.4" width="1.2" height="1.2" fill="#ffffff"/><rect x="1173.4" y="453.7" width="1.2" height="1.2" fill="#4848e0"/><rect x="1168.8" y="515.4" width="1.2" height="1.2" fill="#e8b8b8"/><rect x="1182.9" y="513.6" width="1.2" height="1.2" fill="#4848e0"/><rect x="1172.6" y="483.5" width="1.2" height="1.2" fill="#4848e0"/><rect x="1132.8" y="457.8" width="1.2" height="1.2" fill="#e8b8b8"/><rect x="1151.6" y="460.3" width="1.2" height="1.2" fill="#c8c8f4"/><rect x="1197.4" y="553.9" width="1.2" height="1.2" fill="#f0d0d0"/><rect x="1197.1" y="421.4" width="1.2" height="1.2" fill="#7070e8"/><rect x="1166.5" y="515.9" width="1.2" height="1.2" fill="#e8b8b8"/><rect x="1184.2" y="534.5" width="1.2" height="1.2" fill="#7070e8"/><rect x="1189.5" y="454.3" width="1.2" height="1.2" fill="#e8b8b8"/><rect x="1162.5" y="515.5" width="1.2" height="1.2" fill="#7070e8"/><rect x="1202.5" y="406.1" width="1.2" height="1.2" fill="#a8a8f0"/><rect x="1146.8" y="496.1" width="1.2" height="1.2" fill="#f0d0d0"/><rect x="1174.5" y="500.4" width="1.2" height="1.2" fill="#f0d0d0"/><rect x="1188.5" y="444.7" width="1.2" height="1.2" fill="#c8c8f4"/><rect x="1190.3" y="460.4" width="1.2" height="1.2" fill="#e8b8b8"/><rect x="1167.9" y="490.8" width="1.2" height="1.2" fill="#a8a8f0"/><rect x="1180.6" y="425.5" width="1.2" height="1.2" fill="#a8a8f0"/><rect x="1147.9" y="534.9" width="1.2" height="1.2" fill="#f0d0d0"/><rect x="1177.9" y="433.6" width="1.2" height="1.2" fill="#7070e8"/><rect x="1169.4" y="490.1" width="1.2" height="1.2" fill="#7070e8"/><rect x="1175.9" y="483.6" width="1.2" height="1.2" fill="#7070e8"/><rect x="1178.3" y="436.1" width="1.2" height="1.2" fill="#7070e8"/><rect x="1153.5" y="492.9" width="1.2" height="1.2" fill="#a8a8f0"/><rect x="1165.0" y="473.7" width="1.2" height="1.2" fill="#f0d0d0"/><rect x="1165.6" y="409.8" width="1.2" height="1.2" fill="#a8a8f0"/><rect x="1169.1" y="413.7" width="1.2" height="1.2" fill="#e8b8b8"/><rect x="1151.2" y="453.4" width="1.2" height="1.2" fill="#4848e0"/><rect x="1173.2" y="515.9" width="1.2" height="1.2" fill="#c8c8f4"/><rect x="1151.1" y="474.1" width="1.2" height="1.2" fill="#7070e8"/><rect x="1157.2" y="463.6" width="1.2" height="1.2" fill="#ffffff"/><rect x="1187.1" y="560.8" width="1.2" height="1.2" fill="#ffffff"/><rect x="1139.0" y="605.5" width="1.2" height="1.2" fill="#ffffff"/><rect x="1180.6" y="445.3" width="1.2" height="1.2" fill="#ffffff"/><rect x="1161.1" y="538.8" width="1.2" height="1.2" fill="#e8b8b8"/><rect x="1171.2" y="511.8" width="1.2" height="1.2" fill="#a8a8f0"/><rect x="1194.8" y="424.1" width="1.2" height="1.2" fill="#e8b8b8"/><rect x="1208.7" y="562.1" width="1.2" height="1.2" fill="#7070e8"/><rect x="1150.9" y="473.0" width="1.2" height="1.2" fill="#f0d0d0"/><rect x="1159.6" y="417.7" width="1.2" height="1.2" fill="#4848e0"/><rect x="1182.0" y="406.7" width="1.2" height="1.2" fill="#7070e8"/><rect x="1151.4" y="432.0" width="1.2" height="1.2" fill="#7070e8"/><rect x="1116.5" y="431.5" width="1.2" height="1.2" fill="#f0d0d0"/><rect x="1208.3" y="436.5" width="1.2" height="1.2" fill="#c8c8f4"/><rect x="1155.1" y="499.8" width="1.2" height="1.2" fill="#f0d0d0"/><rect x="1165.2" y="516.0" width="1.2" height="1.2" fill="#e8b8b8"/><rect x="1187.7" y="508.0" width="1.2" height="1.2" fill="#a8a8f0"/><rect x="1159.9" y="451.1" width="1.2" height="1.2" fill="#c8c8f4"/><rect x="1174.1" y="496.6" width="1.2" height="1.2" fill="#4848e0"/><rect x="1152.6" y="475.5" width="1.2" height="1.2" fill="#ffffff"/><rect x="1187.5" y="518.3" width="1.2" height="1.2" fill="#e8b8b8"/><rect x="1156.5" y="529.9" width="1.2" height="1.2" fill="#e8b8b8"/><rect x="1165.3" y="473.7" width="1.2" height="1.2" fill="#e8b8b8"/><rect x="1174.4" y="448.3" width="1.2" height="1.2" fill="#e8b8b8"/><rect x="1131.5" y="443.5" width="1.2" height="1.2" fill="#f0d0d0"/><rect x="1162.1" y="454.8" width="1.2" height="1.2" fill="#7070e8"/><rect x="1196.2" y="486.2" width="1.2" height="1.2" fill="#7070e8"/><rect x="1182.1" y="508.6" width="1.2" height="1.2" fill="#a8a8f0"/><rect x="1203.7" y="451.7" width="1.2" height="1.2" fill="#ffffff"/><rect x="1192.7" y="508.4" width="1.2" height="1.2" fill="#4848e0"/><rect x="1191.2" y="529.9" width="1.2" height="1.2" fill="#e8b8b8"/><rect x="1210.9" y="445.9" width="1.2" height="1.2" fill="#a8a8f0"/><rect x="1207.9" y="515.3" width="1.2" height="1.2" fill="#f0d0d0"/><rect x="1174.5" y="491.3" width="1.2" height="1.2" fill="#f0d0d0"/><rect x="1181.0" y="440.0" width="1.2" height="1.2" fill="#4848e0"/><rect x="1108.2" y="479.4" width="1.2" height="1.2" fill="#a8a8f0"/><rect x="1149.1" y="542.6" width="1.2" height="1.2" fill="#4848e0"/><rect x="1154.4" y="498.2" width="1.2" height="1.2" fill="#e8b8b8"/><rect x="1144.3" y="509.6" width="1.2" height="1.2" fill="#7070e8"/><rect x="1175.1" y="508.3" width="1.2" height="1.2" fill="#ffffff"/><rect x="1183.2" y="480.4" width="1.2" height="1.2" fill="#ffffff"/><rect x="1170.4" y="443.4" width="1.2" height="1.2" fill="#f0d0d0"/><rect x="1204.1" y="529.3" width="1.2" height="1.2" fill="#a8a8f0"/><rect x="1200.5" y="404.1" width="1.2" height="1.2" fill="#7070e8"/><rect x="1178.6" y="540.3" width="1.2" height="1.2" fill="#e8b8b8"/><rect x="1183.8" y="498.1" width="1.2" height="1.2" fill="#4848e0"/><rect x="1200.8" y="493.6" width="1.2" height="1.2" fill="#7070e8"/><rect x="1196.3" y="520.6" width="1.2" height="1.2" fill="#4848e0"/><rect x="1194.2" y="395.7" width="1.2" height="1.2" fill="#7070e8"/><rect x="1200.1" y="523.0" width="1.2" height="1.2" fill="#4848e0"/><rect x="1181.7" y="474.6" width="1.2" height="1.2" fill="#c8c8f4"/><rect x="1161.7" y="426.2" width="1.2" height="1.2" fill="#4848e0"/><rect x="1112.3" y="513.9" width="1.2" height="1.2" fill="#e8b8b8"/><rect x="1167.2" y="481.0" width="1.2" height="1.2" fill="#f0d0d0"/><rect x="1197.9" y="470.5" width="1.2" height="1.2" fill="#4848e0"/><rect x="1177.8" y="473.0" width="1.2" height="1.2" fill="#7070e8"/><rect x="1160.5" y="464.9" width="1.2" height="1.2" fill="#7070e8"/><rect x="1149.6" y="528.3" width="1.2" height="1.2" fill="#ffffff"/><rect x="1163.5" y="431.3" width="1.2" height="1.2" fill="#a8a8f0"/><rect x="1186.3" y="426.2" width="1.2" height="1.2" fill="#a8a8f0"/><rect x="1192.0" y="511.7" width="1.2" height="1.2" fill="#ffffff"/><rect x="1168.5" y="529.7" width="1.2" height="1.2" fill="#e8b8b8"/><rect x="1171.8" y="437.7" width="1.2" height="1.2" fill="#c8c8f4"/><rect x="1185.0" y="471.8" width="1.2" height="1.2" fill="#7070e8"/><rect x="1184.0" y="524.2" width="1.2" height="1.2" fill="#e8b8b8"/><rect x="1176.4" y="554.3" width="1.2" height="1.2" fill="#e8b8b8"/><rect x="1145.5" y="542.5" width="1.2" height="1.2" fill="#a8a8f0"/><rect x="1157.0" y="462.9" width="1.2" height="1.2" fill="#7070e8"/><rect x="1184.3" y="440.2" width="1.2" height="1.2" fill="#ffffff"/><rect x="1169.9" y="470.0" width="1.2" height="1.2" fill="#e8b8b8"/><rect x="1191.5" y="459.4" width="1.2" height="1.2" fill="#e8b8b8"/><rect x="1190.3" y="511.6" width="1.2" height="1.2" fill="#7070e8"/><rect x="1198.6" y="510.8" width="1.2" height="1.2" fill="#ffffff"/><rect x="1191.7" y="392.3" width="1.2" height="1.2" fill="#f0d0d0"/><rect x="1177.1" y="473.9" width="1.2" height="1.2" fill="#ffffff"/><rect x="1174.5" y="458.0" width="1.2" height="1.2" fill="#e8b8b8"/><rect x="1171.6" y="523.3" width="1.2" height="1.2" fill="#7070e8"/><rect x="1169.7" y="530.0" width="1.2" height="1.2" fill="#ffffff"/><rect x="1186.4" y="466.7" width="1.2" height="1.2" fill="#4848e0"/><rect x="1183.3" y="489.5" width="1.2" height="1.2" fill="#4848e0"/><rect x="1151.6" y="522.4" width="1.2" height="1.2" fill="#4848e0"/><rect x="1149.0" y="466.3" width="1.2" height="1.2" fill="#c8c8f4"/><rect x="1198.1" y="460.0" width="1.2" height="1.2" fill="#f0d0d0"/><rect x="1182.4" y="468.7" width="1.2" height="1.2" fill="#c8c8f4"/><rect x="1163.2" y="514.8" width="1.2" height="1.2" fill="#c8c8f4"/><rect x="1149.4" y="507.2" width="1.2" height="1.2" fill="#e8b8b8"/><rect x="1184.8" y="417.8" width="1.2" height="1.2" fill="#7070e8"/><rect x="1175.7" y="462.8" width="1.2" height="1.2" fill="#7070e8"/><rect x="1149.0" y="478.4" width="1.2" height="1.2" fill="#f0d0d0"/><rect x="1163.3" y="476.5" width="1.2" height="1.2" fill="#7070e8"/><rect x="1194.0" y="492.4" width="1.2" height="1.2" fill="#ffffff"/><rect x="1204.1" y="454.7" width="1.2" height="1.2" fill="#a8a8f0"/><rect x="1174.4" y="403.5" width="1.2" height="1.2" fill="#4848e0"/><rect x="1181.9" y="536.1" width="1.2" height="1.2" fill="#e8b8b8"/><rect x="1162.3" y="498.5" width="1.2" height="1.2" fill="#7070e8"/><rect x="1191.3" y="488.1" width="1.2" height="1.2" fill="#e8b8b8"/><rect x="1157.7" y="485.7" width="1.2" height="1.2" fill="#ffffff"/><rect x="1161.6" y="451.9" width="1.2" height="1.2" fill="#ffffff"/><rect x="1188.8" y="426.8" width="1.2" height="1.2" fill="#f0d0d0"/><rect x="1180.1" y="422.5" width="1.2" height="1.2" fill="#4848e0"/><rect x="1159.1" y="508.5" width="1.2" height="1.2" fill="#a8a8f0"/><rect x="1182.0" y="502.8" width="1.2" height="1.2" fill="#e8b8b8"/><rect x="1202.3" y="480.0" width="1.2" height="1.2" fill="#f0d0d0"/><rect x="1209.8" y="521.7" width="1.2" height="1.2" fill="#ffffff"/><rect x="1154.2" y="478.1" width="1.2" height="1.2" fill="#e8b8b8"/><rect x="1166.6" y="483.7" width="1.2" height="1.2" fill="#ffffff"/><rect x="1206.3" y="492.9" width="1.2" height="1.2" fill="#a8a8f0"/><rect x="1192.5" y="453.3" width="1.2" height="1.2" fill="#4848e0"/><rect x="1190.8" y="394.9" width="1.2" height="1.2" fill="#f0d0d0"/><rect x="1204.7" y="536.0" width="1.2" height="1.2" fill="#c8c8f4"/><rect x="1201.3" y="516.6" width="1.2" height="1.2" fill="#7070e8"/><rect x="1169.0" y="462.0" width="1.2" height="1.2" fill="#ffffff"/><rect x="1168.7" y="481.1" width="1.2" height="1.2" fill="#a8a8f0"/><rect x="1168.7" y="404.7" width="1.2" height="1.2" fill="#ffffff"/><rect x="1170.5" y="519.5" width="1.2" height="1.2" fill="#c8c8f4"/><rect x="1179.9" y="479.6" width="1.2" height="1.2" fill="#7070e8"/><rect x="1171.1" y="515.0" width="1.2" height="1.2" fill="#c8c8f4"/><rect x="1178.1" y="490.7" width="1.2" height="1.2" fill="#ffffff"/><rect x="1180.6" y="505.4" width="1.2" height="1.2" fill="#7070e8"/><rect x="1186.1" y="576.7" width="1.2" height="1.2" fill="#7070e8"/><rect x="1144.6" y="439.0" width="1.2" height="1.2" fill="#f0d0d0"/><rect x="1152.8" y="453.2" width="1.2" height="1.2" fill="#ffffff"/><rect x="1186.6" y="436.1" width="1.2" height="1.2" fill="#a8a8f0"/><rect x="1195.1" y="486.3" width="1.2" height="1.2" fill="#a8a8f0"/><rect x="1174.9" y="514.5" width="1.2" height="1.2" fill="#a8a8f0"/><rect x="1169.8" y="461.2" width="1.2" height="1.2" fill="#ffffff"/><rect x="1179.8" y="531.7" width="1.2" height="1.2" fill="#ffffff"/><rect x="1178.2" y="511.0" width="1.2" height="1.2" fill="#e8b8b8"/><rect x="1195.2" y="577.7" width="1.2" height="1.2" fill="#7070e8"/><rect x="1174.5" y="487.5" width="1.2" height="1.2" fill="#ffffff"/><rect x="1197.8" y="439.9" width="1.2" height="1.2" fill="#7070e8"/><rect x="1182.8" y="552.7" width="1.2" height="1.2" fill="#e8b8b8"/><rect x="1188.0" y="598.5" width="1.2" height="1.2" fill="#a8a8f0"/><rect x="1186.6" y="607.6" width="1.2" height="1.2" fill="#a8a8f0"/><rect x="1206.6" y="607.7" width="1.2" height="1.2" fill="#e8b8b8"/><rect x="1180.2" y="595.9" width="1.2" height="1.2" fill="#a8a8f0"/><rect x="1188.1" y="599.0" width="1.2" height="1.2" fill="#ffffff"/><rect x="1191.9" y="584.2" width="1.2" height="1.2" fill="#f0d0d0"/><rect x="1185.0" y="600.8" width="1.2" height="1.2" fill="#f0d0d0"/><rect x="1176.6" y="621.5" width="1.2" height="1.2" fill="#a8a8f0"/><rect x="1181.1" y="612.2" width="1.2" height="1.2" fill="#ffffff"/><rect x="1183.3" y="610.0" width="1.2" height="1.2" fill="#a8a8f0"/><rect x="1187.3" y="565.3" width="1.2" height="1.2" fill="#a8a8f0"/><rect x="1178.4" y="602.3" width="1.2" height="1.2" fill="#ffffff"/><rect x="1193.9" y="600.4" width="1.2" height="1.2" fill="#a8a8f0"/><rect x="1201.0" y="639.0" width="1.2" height="1.2" fill="#c8c8f4"/><rect x="1186.7" y="592.2" width="1.2" height="1.2" fill="#8888e8"/><rect x="1192.2" y="588.8" width="1.2" height="1.2" fill="#c8c8f4"/><rect x="1189.4" y="601.1" width="1.2" height="1.2" fill="#f0d0d0"/><rect x="1201.6" y="574.7" width="1.2" height="1.2" fill="#e8b8b8"/><rect x="1199.2" y="604.8" width="1.2" height="1.2" fill="#c8c8f4"/><rect x="1182.5" y="586.3" width="1.2" height="1.2" fill="#a8a8f0"/><rect x="766.7" y="584.2" width="1.2" height="1.2" fill="#f4b0b0"/><rect x="724.8" y="583.7" width="1.2" height="1.2" fill="#ffffff"/><rect x="768.7" y="597.2" width="1.2" height="1.2" fill="#e86060"/><rect x="753.1" y="596.2" width="1.2" height="1.2" fill="#e86060"/><rect x="755.9" y="616.5" width="1.2" height="1.2" fill="#e86060"/><rect x="774.9" y="599.0" width="1.2" height="1.2" fill="#f4b0b0"/><rect x="828.1" y="604.8" width="1.2" height="1.2" fill="#e87878"/><rect x="787.4" y="617.2" width="1.2" height="1.2" fill="#e87878"/><rect x="812.2" y="600.9" width="1.2" height="1.2" fill="#e04040"/><rect x="767.3" y="600.4" width="1.2" height="1.2" fill="#f09090"/><rect x="748.6" y="588.2" width="1.2" height="1.2" fill="#e86060"/><rect x="783.7" y="615.0" width="1.2" height="1.2" fill="#f09090"/><rect x="756.1" y="593.2" width="1.2" height="1.2" fill="#ffffff"/><rect x="696.3" y="600.0" width="1.2" height="1.2" fill="#f09090"/><rect x="689.1" y="586.8" width="1.2" height="1.2" fill="#e04040"/><rect x="795.8" y="595.7" width="1.2" height="1.2" fill="#f09090"/><rect x="773.4" y="589.5" width="1.2" height="1.2" fill="#e04040"/><rect x="724.0" y="605.8" width="1.2" height="1.2" fill="#ffffff"/><rect x="821.8" y="595.2" width="1.2" height="1.2" fill="#e04040"/><rect x="726.0" y="616.6" width="1.2" height="1.2" fill="#f09090"/><rect x="764.4" y="605.7" width="1.2" height="1.2" fill="#f4b0b0"/><rect x="761.5" y="588.7" width="1.2" height="1.2" fill="#f4b0b0"/><rect x="828.4" y="599.4" width="1.2" height="1.2" fill="#f09090"/><rect x="831.7" y="595.4" width="1.2" height="1.2" fill="#e86060"/><rect x="731.6" y="596.4" width="1.2" height="1.2" fill="#e86060"/><rect x="737.4" y="593.1" width="1.2" height="1.2" fill="#e87878"/><rect x="787.3" y="595.2" width="1.2" height="1.2" fill="#f4b0b0"/><rect x="689.4" y="598.4" width="1.2" height="1.2" fill="#e87878"/><rect x="801.3" y="618.4" width="1.2" height="1.2" fill="#e04040"/><rect x="835.4" y="610.0" width="1.2" height="1.2" fill="#f4b0b0"/><rect x="780.3" y="592.2" width="1.2" height="1.2" fill="#f09090"/><rect x="781.5" y="609.5" width="1.2" height="1.2" fill="#f09090"/><rect x="875.5" y="596.5" width="1.2" height="1.2" fill="#e04040"/><rect x="801.3" y="602.0" width="1.2" height="1.2" fill="#f09090"/><rect x="744.0" y="596.8" width="1.2" height="1.2" fill="#e87878"/><rect x="732.1" y="598.7" width="1.2" height="1.2" fill="#e87878"/><rect x="791.5" y="613.3" width="1.2" height="1.2" fill="#e86060"/><rect x="823.8" y="602.1" width="1.2" height="1.2" fill="#f4b0b0"/><rect x="680.3" y="589.1" width="1.2" height="1.2" fill="#e87878"/><rect x="752.5" y="609.6" width="1.2" height="1.2" fill="#e87878"/><rect x="707.6" y="605.2" width="1.2" height="1.2" fill="#e04040"/><rect x="808.3" y="592.6" width="1.2" height="1.2" fill="#e04040"/><rect x="772.0" y="608.7" width="1.2" height="1.2" fill="#e86060"/><rect x="729.4" y="611.4" width="1.2" height="1.2" fill="#e04040"/><rect x="783.7" y="596.3" width="1.2" height="1.2" fill="#f4b0b0"/><rect x="782.1" y="605.7" width="1.2" height="1.2" fill="#e04040"/><rect x="737.7" y="598.4" width="1.2" height="1.2" fill="#e87878"/><rect x="708.0" y="601.3" width="1.2" height="1.2" fill="#e86060"/><rect x="770.3" y="594.8" width="1.2" height="1.2" fill="#e04040"/><rect x="795.8" y="608.4" width="1.2" height="1.2" fill="#f09090"/><rect x="718.7" y="616.2" width="1.2" height="1.2" fill="#e04040"/><rect x="745.1" y="599.3" width="1.2" height="1.2" fill="#f4b0b0"/><rect x="745.5" y="593.1" width="1.2" height="1.2" fill="#f4b0b0"/><rect x="854.3" y="592.9" width="1.2" height="1.2" fill="#e87878"/><rect x="748.0" y="588.9" width="1.2" height="1.2" fill="#e04040"/><rect x="728.4" y="606.6" width="1.2" height="1.2" fill="#e86060"/><rect x="807.9" y="618.2" width="1.2" height="1.2" fill="#e86060"/><rect x="757.5" y="603.7" width="1.2" height="1.2" fill="#e87878"/><rect x="830.7" y="590.3" width="1.2" height="1.2" fill="#e87878"/><rect x="817.2" y="607.0" width="1.2" height="1.2" fill="#e04040"/><rect x="799.8" y="599.7" width="1.2" height="1.2" fill="#e87878"/><rect x="740.1" y="610.4" width="1.2" height="1.2" fill="#e86060"/><rect x="839.5" y="595.3" width="1.2" height="1.2" fill="#e04040"/><rect x="805.7" y="600.6" width="1.2" height="1.2" fill="#f4b0b0"/><rect x="737.9" y="608.8" width="1.2" height="1.2" fill="#ffffff"/><rect x="795.7" y="610.0" width="1.2" height="1.2" fill="#e87878"/><rect x="842.3" y="602.0" width="1.2" height="1.2" fill="#f4b0b0"/><rect x="767.8" y="607.4" width="1.2" height="1.2" fill="#f4b0b0"/><rect x="853.7" y="599.9" width="1.2" height="1.2" fill="#ffffff"/><rect x="683.4" y="591.5" width="1.2" height="1.2" fill="#f09090"/><rect x="770.4" y="591.8" width="1.2" height="1.2" fill="#e04040"/><rect x="854.3" y="601.0" width="1.2" height="1.2" fill="#f4b0b0"/><rect x="810.7" y="607.3" width="1.2" height="1.2" fill="#e86060"/><rect x="790.6" y="618.3" width="1.2" height="1.2" fill="#ffffff"/><rect x="712.6" y="615.5" width="1.2" height="1.2" fill="#e04040"/><rect x="734.6" y="622.5" width="1.2" height="1.2" fill="#e87878"/><rect x="726.5" y="590.5" width="1.2" height="1.2" fill="#f4b0b0"/><rect x="796.1" y="609.6" width="1.2" height="1.2" fill="#e86060"/><rect x="739.1" y="629.2" width="1.2" height="1.2" fill="#ffffff"/><rect x="772.2" y="593.9" width="1.2" height="1.2" fill="#f09090"/><rect x="796.9" y="616.4" width="1.2" height="1.2" fill="#f4b0b0"/><rect x="750.1" y="596.3" width="1.2" height="1.2" fill="#e87878"/><rect x="777.7" y="609.1" width="1.2" height="1.2" fill="#ffffff"/><rect x="766.8" y="609.5" width="1.2" height="1.2" fill="#e86060"/><rect x="794.1" y="601.5" width="1.2" height="1.2" fill="#ffffff"/><rect x="779.5" y="601.5" width="1.2" height="1.2" fill="#ffffff"/><rect x="687.1" y="612.1" width="1.2" height="1.2" fill="#ffffff"/><rect x="657.1" y="595.2" width="1.2" height="1.2" fill="#e04040"/><rect x="751.0" y="598.5" width="1.2" height="1.2" fill="#ffffff"/><rect x="844.5" y="618.3" width="1.2" height="1.2" fill="#f09090"/><rect x="789.1" y="591.3" width="1.2" height="1.2" fill="#e87878"/><rect x="724.4" y="610.1" width="1.2" height="1.2" fill="#f09090"/><rect x="740.3" y="590.1" width="1.2" height="1.2" fill="#f4b0b0"/><rect x="850.1" y="611.2" width="1.2" height="1.2" fill="#e86060"/><rect x="844.5" y="600.9" width="1.2" height="1.2" fill="#e86060"/><rect x="720.3" y="598.2" width="1.2" height="1.2" fill="#e86060"/><rect x="739.1" y="595.9" width="1.2" height="1.2" fill="#e04040"/><rect x="704.4" y="618.8" width="1.2" height="1.2" fill="#f4b0b0"/><rect x="804.4" y="593.2" width="1.2" height="1.2" fill="#f09090"/><rect x="804.5" y="605.3" width="1.2" height="1.2" fill="#e87878"/><rect x="817.0" y="610.3" width="1.2" height="1.2" fill="#f09090"/><rect x="730.9" y="597.0" width="1.2" height="1.2" fill="#e87878"/><rect x="800.1" y="590.3" width="1.2" height="1.2" fill="#e87878"/><rect x="855.3" y="591.5" width="1.2" height="1.2" fill="#e86060"/><rect x="903.4" y="600.6" width="1.2" height="1.2" fill="#e86060"/><rect x="812.0" y="613.2" width="1.2" height="1.2" fill="#e87878"/><rect x="778.9" y="595.5" width="1.2" height="1.2" fill="#f09090"/><rect x="749.2" y="601.1" width="1.2" height="1.2" fill="#f4b0b0"/><rect x="824.6" y="600.4" width="1.2" height="1.2" fill="#e86060"/><rect x="784.5" y="595.8" width="1.2" height="1.2" fill="#f4b0b0"/><rect x="774.6" y="597.3" width="1.2" height="1.2" fill="#e86060"/><rect x="751.4" y="589.7" width="1.2" height="1.2" fill="#e04040"/><rect x="725.1" y="584.8" width="1.2" height="1.2" fill="#f09090"/><rect x="749.9" y="603.5" width="1.2" height="1.2" fill="#e04040"/><rect x="821.8" y="607.1" width="1.2" height="1.2" fill="#e87878"/><rect x="790.9" y="608.0" width="1.2" height="1.2" fill="#e87878"/><rect x="719.3" y="603.0" width="1.2" height="1.2" fill="#e87878"/><rect x="863.6" y="609.5" width="1.2" height="1.2" fill="#ffffff"/><rect x="746.6" y="616.2" width="1.2" height="1.2" fill="#e86060"/><rect x="751.3" y="597.4" width="1.2" height="1.2" fill="#ffffff"/><rect x="793.8" y="602.8" width="1.2" height="1.2" fill="#f09090"/><rect x="840.9" y="588.3" width="1.2" height="1.2" fill="#f09090"/><rect x="674.0" y="595.1" width="1.2" height="1.2" fill="#e87878"/><rect x="790.7" y="618.8" width="1.2" height="1.2" fill="#e86060"/><rect x="755.2" y="612.3" width="1.2" height="1.2" fill="#ffffff"/><rect x="745.4" y="603.2" width="1.2" height="1.2" fill="#ffffff"/><rect x="722.0" y="592.3" width="1.2" height="1.2" fill="#f09090"/><rect x="785.5" y="622.6" width="1.2" height="1.2" fill="#ffffff"/><rect x="767.2" y="607.1" width="1.2" height="1.2" fill="#f4b0b0"/><rect x="818.7" y="603.6" width="1.2" height="1.2" fill="#f09090"/><rect x="673.4" y="596.5" width="1.2" height="1.2" fill="#f09090"/><rect x="867.4" y="614.2" width="1.2" height="1.2" fill="#e86060"/><rect x="781.6" y="596.2" width="1.2" height="1.2" fill="#e04040"/><rect x="808.7" y="585.2" width="1.2" height="1.2" fill="#e04040"/><rect x="693.9" y="604.9" width="1.2" height="1.2" fill="#e04040"/><rect x="866.5" y="612.1" width="1.2" height="1.2" fill="#e04040"/><rect x="755.0" y="600.0" width="1.2" height="1.2" fill="#e04040"/><rect x="762.4" y="605.4" width="1.2" height="1.2" fill="#e04040"/><rect x="842.7" y="615.6" width="1.2" height="1.2" fill="#e87878"/><rect x="732.8" y="573.1" width="1.2" height="1.2" fill="#e87878"/><rect x="885.8" y="603.0" width="1.2" height="1.2" fill="#f4b0b0"/><rect x="759.2" y="592.4" width="1.2" height="1.2" fill="#e04040"/><rect x="716.5" y="618.0" width="1.2" height="1.2" fill="#e04040"/><rect x="793.3" y="617.7" width="1.2" height="1.2" fill="#e04040"/><rect x="778.5" y="593.7" width="1.2" height="1.2" fill="#e87878"/><rect x="749.8" y="597.8" width="1.2" height="1.2" fill="#e04040"/><rect x="827.6" y="608.6" width="1.2" height="1.2" fill="#f4b0b0"/><rect x="708.7" y="579.2" width="1.2" height="1.2" fill="#f4b0b0"/><rect x="763.3" y="605.6" width="1.2" height="1.2" fill="#e87878"/><rect x="687.5" y="599.3" width="1.2" height="1.2" fill="#e87878"/><rect x="770.7" y="609.1" width="1.2" height="1.2" fill="#e87878"/><rect x="721.2" y="596.6" width="1.2" height="1.2" fill="#e87878"/><rect x="742.4" y="595.8" width="1.2" height="1.2" fill="#e87878"/><rect x="780.6" y="596.9" width="1.2" height="1.2" fill="#e87878"/><rect x="740.6" y="588.5" width="1.2" height="1.2" fill="#ffffff"/><rect x="800.8" y="602.1" width="1.2" height="1.2" fill="#f4b0b0"/><rect x="715.6" y="613.2" width="1.2" height="1.2" fill="#ffffff"/><rect x="798.8" y="586.6" width="1.2" height="1.2" fill="#ffffff"/><rect x="635.8" y="590.9" width="1.2" height="1.2" fill="#ffffff"/><rect x="677.5" y="619.3" width="1.2" height="1.2" fill="#e86060"/><rect x="753.8" y="588.8" width="1.2" height="1.2" fill="#e87878"/><rect x="760.5" y="606.3" width="1.2" height="1.2" fill="#f4b0b0"/><rect x="740.1" y="597.0" width="1.2" height="1.2" fill="#f4b0b0"/><rect x="717.0" y="636.8" width="1.2" height="1.2" fill="#f4b0b0"/><rect x="811.3" y="588.6" width="1.2" height="1.2" fill="#f4b0b0"/><rect x="782.5" y="606.1" width="1.2" height="1.2" fill="#f4b0b0"/><rect x="762.6" y="595.3" width="1.2" height="1.2" fill="#f4b0b0"/><rect x="745.6" y="617.6" width="1.2" height="1.2" fill="#ffffff"/><rect x="844.9" y="600.4" width="1.2" height="1.2" fill="#e04040"/><rect x="829.9" y="608.0" width="1.2" height="1.2" fill="#f09090"/><rect x="767.5" y="599.1" width="1.2" height="1.2" fill="#f4b0b0"/><rect x="701.7" y="600.3" width="1.2" height="1.2" fill="#f4b0b0"/><rect x="804.2" y="593.9" width="1.2" height="1.2" fill="#e86060"/><rect x="772.8" y="602.8" width="1.2" height="1.2" fill="#f4b0b0"/><rect x="734.4" y="604.3" width="1.2" height="1.2" fill="#e87878"/><rect x="740.7" y="588.9" width="1.2" height="1.2" fill="#e86060"/><rect x="749.3" y="593.6" width="1.2" height="1.2" fill="#e87878"/><rect x="864.6" y="590.0" width="1.2" height="1.2" fill="#e87878"/><rect x="721.5" y="591.9" width="1.2" height="1.2" fill="#e04040"/><rect x="759.6" y="604.4" width="1.2" height="1.2" fill="#ffffff"/><rect x="761.9" y="610.8" width="1.2" height="1.2" fill="#e86060"/><rect x="792.3" y="617.2" width="1.2" height="1.2" fill="#e86060"/><rect x="857.0" y="585.7" width="1.2" height="1.2" fill="#e86060"/><rect x="850.2" y="611.1" width="1.2" height="1.2" fill="#ffffff"/><rect x="713.6" y="603.8" width="1.2" height="1.2" fill="#f4b0b0"/><rect x="867.2" y="602.9" width="1.2" height="1.2" fill="#e04040"/><rect x="644.6" y="609.8" width="1.2" height="1.2" fill="#ffffff"/><rect x="803.2" y="609.7" width="1.2" height="1.2" fill="#f09090"/><rect x="716.0" y="606.7" width="1.2" height="1.2" fill="#e86060"/><rect x="792.2" y="604.2" width="1.2" height="1.2" fill="#e86060"/><rect x="770.8" y="610.8" width="1.2" height="1.2" fill="#f4b0b0"/><rect x="773.8" y="599.0" width="1.2" height="1.2" fill="#f09090"/><rect x="813.1" y="599.0" width="1.2" height="1.2" fill="#f4b0b0"/><rect x="725.9" y="589.2" width="1.2" height="1.2" fill="#f4b0b0"/><rect x="813.7" y="618.9" width="1.2" height="1.2" fill="#e04040"/><rect x="827.9" y="623.5" width="1.2" height="1.2" fill="#e04040"/><rect x="738.6" y="608.4" width="1.2" height="1.2" fill="#e86060"/><rect x="796.2" y="598.6" width="1.2" height="1.2" fill="#e86060"/><rect x="752.9" y="607.2" width="1.2" height="1.2" fill="#f09090"/><rect x="874.8" y="616.0" width="1.2" height="1.2" fill="#f4b0b0"/><rect x="704.1" y="597.3" width="1.2" height="1.2" fill="#ffffff"/><rect x="764.3" y="606.4" width="1.2" height="1.2" fill="#e86060"/><rect x="803.3" y="619.3" width="1.2" height="1.2" fill="#ffffff"/><rect x="772.4" y="610.7" width="1.2" height="1.2" fill="#e87878"/><rect x="779.1" y="607.8" width="1.2" height="1.2" fill="#e87878"/><rect x="760.7" y="584.5" width="1.2" height="1.2" fill="#ffffff"/><rect x="877.2" y="619.7" width="1.2" height="1.2" fill="#f09090"/><rect x="793.4" y="615.4" width="1.2" height="1.2" fill="#e04040"/><rect x="792.0" y="585.8" width="1.2" height="1.2" fill="#e86060"/><rect x="754.7" y="596.6" width="1.2" height="1.2" fill="#e87878"/><rect x="858.0" y="603.2" width="1.2" height="1.2" fill="#e04040"/><rect x="822.6" y="605.2" width="1.2" height="1.2" fill="#e04040"/><rect x="749.0" y="609.4" width="1.2" height="1.2" fill="#ffffff"/><rect x="605.1" y="614.8" width="1.2" height="1.2" fill="#e86060"/><rect x="819.4" y="589.8" width="1.2" height="1.2" fill="#f09090"/><rect x="757.5" y="594.6" width="1.2" height="1.2" fill="#f4b0b0"/><rect x="778.2" y="612.8" width="1.2" height="1.2" fill="#e87878"/><rect x="805.5" y="622.9" width="1.2" height="1.2" fill="#e04040"/><rect x="791.2" y="591.4" width="1.2" height="1.2" fill="#e86060"/><rect x="695.1" y="601.0" width="1.2" height="1.2" fill="#e04040"/><rect x="761.7" y="599.2" width="1.2" height="1.2" fill="#e86060"/><rect x="790.0" y="595.1" width="1.2" height="1.2" fill="#f09090"/><rect x="734.3" y="622.1" width="1.2" height="1.2" fill="#f09090"/><rect x="709.8" y="593.0" width="1.2" height="1.2" fill="#f09090"/><rect x="711.8" y="628.8" width="1.2" height="1.2" fill="#ffffff"/><rect x="736.0" y="600.4" width="1.2" height="1.2" fill="#e04040"/><rect x="807.5" y="594.6" width="1.2" height="1.2" fill="#e87878"/><rect x="815.3" y="607.0" width="1.2" height="1.2" fill="#ffffff"/><rect x="816.1" y="611.1" width="1.2" height="1.2" fill="#e86060"/><rect x="804.0" y="592.1" width="1.2" height="1.2" fill="#f4b0b0"/><rect x="608.2" y="631.6" width="1.2" height="1.2" fill="#e86060"/><rect x="712.9" y="633.8" width="1.2" height="1.2" fill="#d83030"/><rect x="720.3" y="622.3" width="1.2" height="1.2" fill="#f09090"/><rect x="752.1" y="630.8" width="1.2" height="1.2" fill="#e04848"/><rect x="694.8" y="619.8" width="1.2" height="1.2" fill="#f09090"/><rect x="702.6" y="633.0" width="1.2" height="1.2" fill="#f09090"/><rect x="694.7" y="622.1" width="1.2" height="1.2" fill="#e04848"/><rect x="794.1" y="626.1" width="1.2" height="1.2" fill="#e86060"/><rect x="752.5" y="639.3" width="1.2" height="1.2" fill="#d83030"/><rect x="703.6" y="628.6" width="1.2" height="1.2" fill="#e04848"/><rect x="716.3" y="613.0" width="1.2" height="1.2" fill="#d83030"/><rect x="653.2" y="629.9" width="1.2" height="1.2" fill="#f09090"/><rect x="702.7" y="633.0" width="1.2" height="1.2" fill="#e86060"/><rect x="688.6" y="624.8" width="1.2" height="1.2" fill="#e04848"/><rect x="614.9" y="618.9" width="1.2" height="1.2" fill="#f09090"/><rect x="642.1" y="617.3" width="1.2" height="1.2" fill="#d83030"/><rect x="698.3" y="614.4" width="1.2" height="1.2" fill="#e86060"/><rect x="722.5" y="632.1" width="1.2" height="1.2" fill="#d83030"/><rect x="693.4" y="626.6" width="1.2" height="1.2" fill="#f09090"/><rect x="657.6" y="623.4" width="1.2" height="1.2" fill="#d83030"/><rect x="762.1" y="627.1" width="1.2" height="1.2" fill="#e04848"/><rect x="704.6" y="614.0" width="1.2" height="1.2" fill="#e86060"/><rect x="660.8" y="627.6" width="1.2" height="1.2" fill="#f09090"/><rect x="735.0" y="628.7" width="1.2" height="1.2" fill="#d83030"/><rect x="674.8" y="630.7" width="1.2" height="1.2" fill="#e04848"/><rect x="767.6" y="620.2" width="1.2" height="1.2" fill="#e04848"/><rect x="740.8" y="617.9" width="1.2" height="1.2" fill="#e86060"/><rect x="708.1" y="625.6" width="1.2" height="1.2" fill="#f09090"/><rect x="666.7" y="620.8" width="1.2" height="1.2" fill="#f09090"/><rect x="684.6" y="616.7" width="1.2" height="1.2" fill="#e86060"/><rect x="631.9" y="628.6" width="1.2" height="1.2" fill="#d83030"/><rect x="727.1" y="616.9" width="1.2" height="1.2" fill="#d83030"/><rect x="715.3" y="631.2" width="1.2" height="1.2" fill="#e86060"/><rect x="680.9" y="629.8" width="1.2" height="1.2" fill="#e86060"/><rect x="614.9" y="624.8" width="1.2" height="1.2" fill="#e86060"/><rect x="673.8" y="631.4" width="1.2" height="1.2" fill="#e04848"/><rect x="709.6" y="625.1" width="1.2" height="1.2" fill="#f09090"/><rect x="756.6" y="631.4" width="1.2" height="1.2" fill="#e86060"/><rect x="725.7" y="616.6" width="1.2" height="1.2" fill="#d83030"/><rect x="752.4" y="635.2" width="1.2" height="1.2" fill="#e86060"/><rect x="714.0" y="620.0" width="1.2" height="1.2" fill="#e04848"/><rect x="773.7" y="616.4" width="1.2" height="1.2" fill="#e04848"/><rect x="629.5" y="620.4" width="1.2" height="1.2" fill="#f09090"/><rect x="688.6" y="630.8" width="1.2" height="1.2" fill="#e86060"/><rect x="660.5" y="620.5" width="1.2" height="1.2" fill="#e86060"/><rect x="676.1" y="614.7" width="1.2" height="1.2" fill="#e04848"/><rect x="666.6" y="631.1" width="1.2" height="1.2" fill="#e86060"/><rect x="757.6" y="617.8" width="1.2" height="1.2" fill="#e86060"/><rect x="694.4" y="615.7" width="1.2" height="1.2" fill="#e86060"/><rect x="624.7" y="628.1" width="1.2" height="1.2" fill="#d83030"/><rect x="707.5" y="625.8" width="1.2" height="1.2" fill="#f09090"/><rect x="606.9" y="630.2" width="1.2" height="1.2" fill="#f09090"/><rect x="629.3" y="641.0" width="1.2" height="1.2" fill="#e86060"/><rect x="737.7" y="626.4" width="1.2" height="1.2" fill="#d83030"/><rect x="714.8" y="625.9" width="1.2" height="1.2" fill="#e86060"/><rect x="656.9" y="632.9" width="1.2" height="1.2" fill="#e86060"/><rect x="795.1" y="625.5" width="1.2" height="1.2" fill="#e04848"/><rect x="674.3" y="636.7" width="1.2" height="1.2" fill="#e86060"/><rect x="755.8" y="619.2" width="1.2" height="1.2" fill="#e04848"/><rect x="664.8" y="620.3" width="1.2" height="1.2" fill="#e86060"/><rect x="705.6" y="619.1" width="1.2" height="1.2" fill="#f09090"/><rect x="734.4" y="622.7" width="1.2" height="1.2" fill="#e04848"/><rect x="611.8" y="624.7" width="1.2" height="1.2" fill="#e04848"/><rect x="759.3" y="636.3" width="1.2" height="1.2" fill="#e86060"/><rect x="694.2" y="615.1" width="1.2" height="1.2" fill="#e04848"/><rect x="643.5" y="624.5" width="1.2" height="1.2" fill="#d83030"/><rect x="657.2" y="629.2" width="1.2" height="1.2" fill="#f09090"/><rect x="696.2" y="627.6" width="1.2" height="1.2" fill="#d83030"/><rect x="715.3" y="622.8" width="1.2" height="1.2" fill="#e04848"/><rect x="695.9" y="605.9" width="1.2" height="1.2" fill="#f09090"/><rect x="733.0" y="631.6" width="1.2" height="1.2" fill="#d83030"/><rect x="733.5" y="612.2" width="1.2" height="1.2" fill="#f09090"/><rect x="745.6" y="620.1" width="1.2" height="1.2" fill="#d83030"/><rect x="679.3" y="622.4" width="1.2" height="1.2" fill="#e86060"/><rect x="667.4" y="618.9" width="1.2" height="1.2" fill="#e04848"/><rect x="672.9" y="614.6" width="1.2" height="1.2" fill="#d83030"/><rect x="637.2" y="626.8" width="1.2" height="1.2" fill="#f09090"/><rect x="764.0" y="619.6" width="1.2" height="1.2" fill="#d83030"/><rect x="701.4" y="624.4" width="1.2" height="1.2" fill="#e86060"/><rect x="665.2" y="636.0" width="1.2" height="1.2" fill="#f09090"/><rect x="677.7" y="622.2" width="1.2" height="1.2" fill="#e86060"/><rect x="693.5" y="631.7" width="1.2" height="1.2" fill="#f09090"/><rect x="745.6" y="632.0" width="1.2" height="1.2" fill="#e04848"/><rect x="653.4" y="633.7" width="1.2" height="1.2" fill="#e86060"/><rect x="713.5" y="617.7" width="1.2" height="1.2" fill="#e04848"/><rect x="689.4" y="624.6" width="1.2" height="1.2" fill="#d83030"/><rect x="705.4" y="614.0" width="1.2" height="1.2" fill="#f09090"/><rect x="676.0" y="623.9" width="1.2" height="1.2" fill="#d83030"/><rect x="733.9" y="625.0" width="1.2" height="1.2" fill="#f09090"/><rect x="665.7" y="623.8" width="1.2" height="1.2" fill="#e04848"/><rect x="607.9" y="640.6" width="1.2" height="1.2" fill="#e04848"/><rect x="706.5" y="639.9" width="1.2" height="1.2" fill="#e04848"/><rect x="604.3" y="640.3" width="1.2" height="1.2" fill="#e04848"/><rect x="590.1" y="633.9" width="1.2" height="1.2" fill="#e04848"/><rect x="632.0" y="620.5" width="1.2" height="1.2" fill="#d83030"/><rect x="645.1" y="625.7" width="1.2" height="1.2" fill="#d83030"/><rect x="652.6" y="643.0" width="1.2" height="1.2" fill="#d83030"/><rect x="637.0" y="638.1" width="1.2" height="1.2" fill="#e04848"/><rect x="605.7" y="643.2" width="1.2" height="1.2" fill="#e04848"/><rect x="606.4" y="619.0" width="1.2" height="1.2" fill="#e04848"/><rect x="668.4" y="630.5" width="1.2" height="1.2" fill="#e04848"/><rect x="640.4" y="623.2" width="1.2" height="1.2" fill="#e04848"/><rect x="619.2" y="617.4" width="1.2" height="1.2" fill="#d83030"/><rect x="673.8" y="635.9" width="1.2" height="1.2" fill="#d83030"/><rect x="708.7" y="643.5" width="1.2" height="1.2" fill="#e04848"/><rect x="616.9" y="632.3" width="1.2" height="1.2" fill="#e04848"/><rect x="654.4" y="623.6" width="1.2" height="1.2" fill="#d83030"/><rect x="693.8" y="630.4" width="1.2" height="1.2" fill="#e04848"/><rect x="589.5" y="628.7" width="1.2" height="1.2" fill="#e04848"/><rect x="632.6" y="624.0" width="1.2" height="1.2" fill="#d83030"/><rect x="659.4" y="632.3" width="1.2" height="1.2" fill="#e04848"/><rect x="612.0" y="639.3" width="1.2" height="1.2" fill="#e04848"/><rect x="634.6" y="628.2" width="1.2" height="1.2" fill="#e04848"/><rect x="623.5" y="616.9" width="1.2" height="1.2" fill="#d83030"/><rect x="636.9" y="640.2" width="1.2" height="1.2" fill="#d83030"/><rect x="660.8" y="623.8" width="1.2" height="1.2" fill="#e04848"/><rect x="636.9" y="625.8" width="1.2" height="1.2" fill="#e04848"/><rect x="643.1" y="630.1" width="1.2" height="1.2" fill="#d83030"/><rect x="622.5" y="618.6" width="1.2" height="1.2" fill="#d83030"/><rect x="594.6" y="622.8" width="1.2" height="1.2" fill="#d83030"/><rect x="676.5" y="636.3" width="1.2" height="1.2" fill="#e04848"/><rect x="650.5" y="629.8" width="1.2" height="1.2" fill="#e04848"/><rect x="633.8" y="643.7" width="1.2" height="1.2" fill="#d83030"/><rect x="660.3" y="633.2" width="1.2" height="1.2" fill="#e04848"/><rect x="678.3" y="636.4" width="1.2" height="1.2" fill="#d83030"/><rect x="671.6" y="633.4" width="1.2" height="1.2" fill="#e04848"/><rect x="623.4" y="632.6" width="1.2" height="1.2" fill="#e04848"/><rect x="611.0" y="620.5" width="1.2" height="1.2" fill="#e04848"/><rect x="593.2" y="635.1" width="1.2" height="1.2" fill="#e04848"/><rect x="686.8" y="631.6" width="1.2" height="1.2" fill="#d83030"/><rect x="608.4" y="637.3" width="1.2" height="1.2" fill="#d83030"/><rect x="657.6" y="626.7" width="1.2" height="1.2" fill="#d83030"/><rect x="694.5" y="633.8" width="1.2" height="1.2" fill="#d83030"/><rect x="635.5" y="642.7" width="1.2" height="1.2" fill="#e04848"/><rect x="641.8" y="640.5" width="1.2" height="1.2" fill="#e04848"/><rect x="670.8" y="639.1" width="1.2" height="1.2" fill="#d83030"/><rect x="663.6" y="630.5" width="1.2" height="1.2" fill="#d83030"/><rect x="643.1" y="630.7" width="1.2" height="1.2" fill="#e04848"/><rect x="573.9" y="633.2" width="1.2" height="1.2" fill="#d83030"/><rect x="635.2" y="632.9" width="1.2" height="1.2" fill="#d83030"/><rect x="639.3" y="634.8" width="1.2" height="1.2" fill="#e04848"/><rect x="632.2" y="638.1" width="1.2" height="1.2" fill="#e04848"/><rect x="660.7" y="631.1" width="1.2" height="1.2" fill="#e04848"/><rect x="656.0" y="635.4" width="1.2" height="1.2" fill="#d83030"/><rect x="619.7" y="631.6" width="1.2" height="1.2" fill="#e04848"/><rect x="658.5" y="629.8" width="1.2" height="1.2" fill="#d83030"/><rect x="685.7" y="631.5" width="1.2" height="1.2" fill="#d83030"/><path d="M680.0 593.0L760.0 584.0" stroke="#e03c3c" stroke-width="1.2" stroke-dasharray="5 0.8 2.2 0.7 8 1 1.6 0.8" fill="none" opacity="1"/><path d="M672.0 599.0L765.0 590.0" stroke="#e03c3c" stroke-width="1.2" stroke-dasharray="3.6 0.8 7 1 2 0.8 4.6 0.7" fill="none" opacity="1"/><path d="M660.0 606.0L770.0 597.0" stroke="#e03c3c" stroke-width="1.2" stroke-dasharray="7.6 1 3 0.8 1.6 0.8 6 0.8" fill="none" opacity="1"/><path d="M676.0 587.0L740.0 578.0" stroke="#e03c3c" stroke-width="1.2" stroke-dasharray="2.4 0.8 4.6 0.8 9 1.1 3 0.7" fill="none" opacity="1"/><path d="M690.0 581.0L745.0 572.0" stroke="#e03c3c" stroke-width="1.2" stroke-dasharray="5 0.8 2.2 0.7 8 1 1.6 0.8" fill="none" opacity="1"/><path d="M700.0 575.0L760.0 566.0" stroke="#e03c3c" stroke-width="1.2" stroke-dasharray="3.6 0.8 7 1 2 0.8 4.6 0.7" fill="none" opacity="1"/><path d="M640.0 614.0L700.0 605.0" stroke="#e03c3c" stroke-width="1.2" stroke-dasharray="7.6 1 3 0.8 1.6 0.8 6 0.8" fill="none" opacity="1"/><path d="M705.0 569.0L790.0 560.0" stroke="#e03c3c" stroke-width="1.2" stroke-dasharray="2.4 0.8 4.6 0.8 9 1.1 3 0.7" fill="none" opacity="1"/><rect x="626.7" y="550.0" width="1.5" height="1.1" fill="#f0c8c8"/><rect x="634.5" y="550.0" width="2.0" height="1.1" fill="#ffffff"/><rect x="634.8" y="550.0" width="1.5" height="1.1" fill="#f0c8c8"/><rect x="629.8" y="550.0" width="1.8" height="1.1" fill="#f0c8c8"/><rect x="627.5" y="553.2" width="1.3" height="1.1" fill="#ffffff"/><rect x="627.2" y="553.2" width="1.2" height="1.1" fill="#d0d0f0"/><rect x="632.7" y="553.2" width="1.3" height="1.1" fill="#e8d8e8"/><rect x="630.5" y="553.2" width="1.4" height="1.1" fill="#f0c8c8"/><rect x="624.0" y="556.4" width="2.9" height="1.1" fill="#e8d8e8"/><rect x="628.4" y="556.4" width="2.3" height="1.1" fill="#d0d0f0"/><rect x="624.2" y="556.4" width="2.7" height="1.1" fill="#ffffff"/><rect x="626.4" y="556.4" width="2.6" height="1.1" fill="#d0d0f0"/><rect x="630.2" y="559.6" width="2.3" height="1.1" fill="#ffffff"/><rect x="631.3" y="559.6" width="1.7" height="1.1" fill="#d0d0f0"/><rect x="628.5" y="559.6" width="2.8" height="1.1" fill="#f0c8c8"/><rect x="633.2" y="559.6" width="1.5" height="1.1" fill="#e8d8e8"/><rect x="630.2" y="562.8" width="1.5" height="1.1" fill="#ffffff"/><rect x="629.1" y="562.8" width="2.1" height="1.1" fill="#f0c8c8"/><rect x="631.3" y="562.8" width="2.7" height="1.1" fill="#e8d8e8"/><rect x="625.8" y="562.8" width="2.8" height="1.1" fill="#d0d0f0"/><rect x="634.2" y="566.0" width="1.6" height="1.1" fill="#e8d8e8"/><rect x="625.7" y="566.0" width="1.7" height="1.1" fill="#f0c8c8"/><rect x="626.5" y="566.0" width="1.2" height="1.1" fill="#e8d8e8"/><rect x="626.5" y="566.0" width="2.2" height="1.1" fill="#f0c8c8"/><rect x="629.2" y="569.2" width="2.2" height="1.1" fill="#d0d0f0"/><rect x="627.5" y="569.2" width="2.4" height="1.1" fill="#e8d8e8"/><rect x="631.7" y="569.2" width="1.9" height="1.1" fill="#e8d8e8"/><rect x="627.3" y="569.2" width="2.5" height="1.1" fill="#e8d8e8"/><rect x="627.2" y="572.4" width="2.4" height="1.1" fill="#ffffff"/><rect x="626.1" y="572.4" width="2.8" height="1.1" fill="#d0d0f0"/><rect x="634.6" y="572.4" width="1.4" height="1.1" fill="#e8d8e8"/><rect x="624.7" y="572.4" width="2.3" height="1.1" fill="#e8d8e8"/><rect x="633.2" y="575.6" width="2.5" height="1.1" fill="#f0c8c8"/><rect x="626.7" y="575.6" width="2.6" height="1.1" fill="#e8d8e8"/><rect x="632.6" y="575.6" width="2.9" height="1.1" fill="#e8d8e8"/><rect x="623.6" y="575.6" width="2.7" height="1.1" fill="#f0c8c8"/><rect x="627.0" y="578.8" width="1.5" height="1.1" fill="#d0d0f0"/><rect x="634.4" y="578.8" width="2.1" height="1.1" fill="#e8d8e8"/><rect x="630.6" y="578.8" width="1.7" height="1.1" fill="#e8d8e8"/><rect x="634.4" y="578.8" width="1.8" height="1.1" fill="#f0c8c8"/><rect x="633.8" y="582.0" width="2.6" height="1.1" fill="#d0d0f0"/><rect x="630.8" y="582.0" width="1.9" height="1.1" fill="#f0c8c8"/><rect x="627.1" y="582.0" width="1.5" height="1.1" fill="#d0d0f0"/><rect x="628.7" y="582.0" width="2.8" height="1.1" fill="#f0c8c8"/><rect x="627.6" y="585.2" width="2.4" height="1.1" fill="#e8d8e8"/><rect x="630.2" y="585.2" width="2.0" height="1.1" fill="#ffffff"/><rect x="635.0" y="585.2" width="1.3" height="1.1" fill="#f0c8c8"/><rect x="625.7" y="585.2" width="1.7" height="1.1" fill="#e8d8e8"/><rect x="626.7" y="588.4" width="1.5" height="1.1" fill="#f0c8c8"/><rect x="632.7" y="588.4" width="1.8" height="1.1" fill="#f0c8c8"/><rect x="623.8" y="588.4" width="1.5" height="1.1" fill="#f0c8c8"/><rect x="631.6" y="588.4" width="2.7" height="1.1" fill="#f0c8c8"/><rect x="632.5" y="591.6" width="2.0" height="1.1" fill="#d0d0f0"/><rect x="632.8" y="591.6" width="2.3" height="1.1" fill="#f0c8c8"/><rect x="631.8" y="591.6" width="1.4" height="1.1" fill="#e8d8e8"/><rect x="634.5" y="591.6" width="2.5" height="1.1" fill="#e8d8e8"/><rect x="630.2" y="594.8" width="2.3" height="1.1" fill="#d0d0f0"/><rect x="632.9" y="594.8" width="1.7" height="1.1" fill="#e8d8e8"/><rect x="624.5" y="594.8" width="2.5" height="1.1" fill="#f0c8c8"/><rect x="624.0" y="594.8" width="1.9" height="1.1" fill="#f0c8c8"/><rect x="633.6" y="598.0" width="2.6" height="1.1" fill="#e8d8e8"/><rect x="623.5" y="598.0" width="2.3" height="1.1" fill="#f0c8c8"/><rect x="633.7" y="598.0" width="2.2" height="1.1" fill="#d0d0f0"/><rect x="629.6" y="598.0" width="2.6" height="1.1" fill="#e8d8e8"/><rect x="624.7" y="601.2" width="2.9" height="1.1" fill="#d0d0f0"/><rect x="629.4" y="601.2" width="2.2" height="1.1" fill="#f0c8c8"/><rect x="626.1" y="601.2" width="1.7" height="1.1" fill="#f0c8c8"/><rect x="631.2" y="601.2" width="1.6" height="1.1" fill="#e8d8e8"/><rect x="628.9" y="604.4" width="2.0" height="1.1" fill="#e8d8e8"/><rect x="627.2" y="604.4" width="2.4" height="1.1" fill="#d0d0f0"/><rect x="624.1" y="604.4" width="2.0" height="1.1" fill="#ffffff"/><rect x="628.5" y="604.4" width="2.5" height="1.1" fill="#e8d8e8"/><rect x="626.3" y="607.6" width="2.4" height="1.1" fill="#e8d8e8"/><rect x="629.7" y="607.6" width="1.2" height="1.1" fill="#f0c8c8"/><rect x="623.9" y="607.6" width="1.8" height="1.1" fill="#ffffff"/><rect x="625.1" y="607.6" width="1.6" height="1.1" fill="#f0c8c8"/><rect x="670.9" y="548.0" width="1.9" height="1.1" fill="#e8d8e8"/><rect x="667.2" y="551.2" width="2.2" height="1.1" fill="#ffffff"/><rect x="671.3" y="554.4" width="1.4" height="1.1" fill="#e8d8e8"/><rect x="669.2" y="557.6" width="1.3" height="1.1" fill="#e8d8e8"/><rect x="670.1" y="560.8" width="2.6" height="1.1" fill="#e8d8e8"/><rect x="670.3" y="564.0" width="2.2" height="1.1" fill="#f0c8c8"/><rect x="668.7" y="567.2" width="1.2" height="1.1" fill="#ffffff"/><rect x="666.7" y="570.4" width="2.4" height="1.1" fill="#e8d8e8"/><rect x="668.4" y="573.6" width="2.4" height="1.1" fill="#ffffff"/><rect x="669.6" y="576.8" width="1.4" height="1.1" fill="#d0d0f0"/><rect x="787.2" y="541.0" width="2.0" height="1.1" fill="#ffffff"/><rect x="787.1" y="544.2" width="1.6" height="1.1" fill="#d0d0f0"/><rect x="786.5" y="547.4" width="2.6" height="1.1" fill="#d0d0f0"/><rect x="786.4" y="550.6" width="1.4" height="1.1" fill="#ffffff"/><rect x="785.1" y="553.8" width="1.7" height="1.1" fill="#e8d8e8"/><rect x="786.5" y="557.0" width="3.0" height="1.1" fill="#d0d0f0"/><rect x="785.6" y="560.2" width="1.8" height="1.1" fill="#d0d0f0"/><rect x="786.2" y="563.4" width="2.6" height="1.1" fill="#ffffff"/><rect x="785.8" y="566.6" width="1.9" height="1.1" fill="#d0d0f0"/><rect x="786.0" y="569.8" width="2.3" height="1.1" fill="#d0d0f0"/><rect x="785.4" y="573.0" width="2.4" height="1.1" fill="#f0c8c8"/><rect x="786.3" y="576.2" width="1.9" height="1.1" fill="#e8d8e8"/><rect x="787.3" y="579.4" width="2.9" height="1.1" fill="#f0c8c8"/><rect x="786.2" y="582.6" width="2.0" height="1.1" fill="#f0c8c8"/><rect x="786.0" y="585.8" width="1.2" height="1.1" fill="#ffffff"/><rect x="807.6" y="548.0" width="2.2" height="1.1" fill="#d0d0f0"/><rect x="807.2" y="548.0" width="2.2" height="1.1" fill="#e8d8e8"/><rect x="807.6" y="551.2" width="2.6" height="1.1" fill="#e8d8e8"/><rect x="812.3" y="551.2" width="2.7" height="1.1" fill="#e8d8e8"/><rect x="812.8" y="554.4" width="2.7" height="1.1" fill="#e8d8e8"/><rect x="811.3" y="554.4" width="2.2" height="1.1" fill="#ffffff"/><rect x="813.1" y="557.6" width="2.1" height="1.1" fill="#e8d8e8"/><rect x="807.3" y="557.6" width="2.4" height="1.1" fill="#f0c8c8"/><rect x="810.1" y="560.8" width="2.7" height="1.1" fill="#ffffff"/><rect x="807.0" y="560.8" width="1.6" height="1.1" fill="#f0c8c8"/><rect x="807.1" y="564.0" width="3.0" height="1.1" fill="#d0d0f0"/><rect x="811.7" y="564.0" width="1.8" height="1.1" fill="#d0d0f0"/><rect x="806.9" y="567.2" width="1.6" height="1.1" fill="#d0d0f0"/><rect x="812.7" y="567.2" width="1.5" height="1.1" fill="#e8d8e8"/><rect x="809.9" y="570.4" width="2.4" height="1.1" fill="#ffffff"/><rect x="810.3" y="570.4" width="2.1" height="1.1" fill="#f0c8c8"/><rect x="811.7" y="573.6" width="1.3" height="1.1" fill="#ffffff"/><rect x="811.8" y="573.6" width="1.9" height="1.1" fill="#e8d8e8"/><rect x="812.8" y="576.8" width="2.8" height="1.1" fill="#e8d8e8"/><rect x="806.6" y="576.8" width="1.9" height="1.1" fill="#ffffff"/><rect x="808.9" y="580.0" width="2.2" height="1.1" fill="#e8d8e8"/><rect x="810.3" y="580.0" width="1.8" height="1.1" fill="#d0d0f0"/><rect x="808.9" y="583.2" width="2.7" height="1.1" fill="#ffffff"/><rect x="811.7" y="583.2" width="1.5" height="1.1" fill="#e8d8e8"/><rect x="809.6" y="586.4" width="1.4" height="1.1" fill="#d0d0f0"/><rect x="807.2" y="586.4" width="1.8" height="1.1" fill="#ffffff"/><rect x="809.7" y="589.6" width="2.9" height="1.1" fill="#f0c8c8"/><rect x="806.2" y="589.6" width="2.6" height="1.1" fill="#f0c8c8"/><rect x="813.1" y="592.8" width="2.5" height="1.1" fill="#f0c8c8"/><rect x="808.1" y="592.8" width="1.8" height="1.1" fill="#d0d0f0"/><rect x="855.6" y="560.0" width="2.0" height="1.1" fill="#ffffff"/><rect x="850.2" y="560.0" width="1.6" height="1.1" fill="#f0c8c8"/><rect x="846.1" y="560.0" width="1.7" height="1.1" fill="#e8d8e8"/><rect x="850.1" y="563.2" width="1.2" height="1.1" fill="#d0d0f0"/><rect x="848.6" y="563.2" width="1.4" height="1.1" fill="#e8d8e8"/><rect x="848.6" y="563.2" width="2.2" height="1.1" fill="#ffffff"/><rect x="851.2" y="566.4" width="1.8" height="1.1" fill="#e8d8e8"/><rect x="849.7" y="566.4" width="1.7" height="1.1" fill="#e8d8e8"/><rect x="847.8" y="566.4" width="2.4" height="1.1" fill="#e8d8e8"/><rect x="846.3" y="569.6" width="2.3" height="1.1" fill="#ffffff"/><rect x="851.3" y="569.6" width="1.3" height="1.1" fill="#ffffff"/><rect x="846.5" y="569.6" width="1.3" height="1.1" fill="#f0c8c8"/><rect x="853.1" y="572.8" width="2.4" height="1.1" fill="#d0d0f0"/><rect x="850.5" y="572.8" width="2.7" height="1.1" fill="#f0c8c8"/><rect x="850.7" y="572.8" width="1.5" height="1.1" fill="#f0c8c8"/><rect x="850.8" y="576.0" width="2.1" height="1.1" fill="#e8d8e8"/><rect x="847.5" y="576.0" width="2.0" height="1.1" fill="#ffffff"/><rect x="851.7" y="576.0" width="2.4" height="1.1" fill="#f0c8c8"/><rect x="854.2" y="579.2" width="2.8" height="1.1" fill="#d0d0f0"/><rect x="847.0" y="579.2" width="2.6" height="1.1" fill="#d0d0f0"/><rect x="850.6" y="579.2" width="2.9" height="1.1" fill="#f0c8c8"/><rect x="849.6" y="582.4" width="2.3" height="1.1" fill="#e8d8e8"/><rect x="849.7" y="582.4" width="1.6" height="1.1" fill="#d0d0f0"/><rect x="846.1" y="582.4" width="1.8" height="1.1" fill="#e8d8e8"/><rect x="849.0" y="585.6" width="1.3" height="1.1" fill="#ffffff"/><rect x="846.1" y="585.6" width="2.0" height="1.1" fill="#f0c8c8"/><rect x="852.0" y="585.6" width="1.7" height="1.1" fill="#d0d0f0"/><rect x="849.8" y="588.8" width="1.5" height="1.1" fill="#e8d8e8"/><rect x="851.1" y="588.8" width="2.5" height="1.1" fill="#f0c8c8"/><rect x="854.3" y="588.8" width="1.2" height="1.1" fill="#e8d8e8"/><rect x="850.3" y="592.0" width="2.3" height="1.1" fill="#ffffff"/><rect x="853.2" y="592.0" width="2.9" height="1.1" fill="#d0d0f0"/><rect x="849.1" y="592.0" width="1.3" height="1.1" fill="#d0d0f0"/><rect x="851.6" y="595.2" width="2.5" height="1.1" fill="#e8d8e8"/><rect x="846.5" y="595.2" width="1.5" height="1.1" fill="#d0d0f0"/><rect x="849.4" y="595.2" width="1.3" height="1.1" fill="#f0c8c8"/><path d="M655.0 582.0L672.0 604.0" stroke="#f08080" stroke-width="1.6" fill="none" opacity="1"/><path d="M770.0 635.0L870.0 610.0" stroke="#f4f4ff" stroke-width="1.2" stroke-dasharray="2.5 1.5 5 2" fill="none" opacity="1"/><path d="M800.0 644.0L850.0 630.0" stroke="#f4f4ff" stroke-width="1.2" stroke-dasharray="2.5 1.5 5 2" fill="none" opacity="1"/><path d="M812.0 616.0L858.0 604.0" stroke="#f4f4ff" stroke-width="1.2" stroke-dasharray="2.5 1.5 5 2" fill="none" opacity="1"/><path d="M1030.0 560.0L1032.0 640.0" stroke="#c8c8f0" stroke-width="1.1" stroke-dasharray="1.2 7" fill="none" opacity="1"/><polygon points="754.3,476.0 800.6,505.4 800.6,538.3 745.3,559.3 699.6,530.3 699.6,497.6" fill="#e6e61e" fill-opacity="0.36"/><g stroke="#f0a050" stroke-width="1.3" fill="none" opacity="0.95"><path d="M708 505q14 -12 34 -13q16 0 22 8"/><path d="M704 511l14 10M707 509l13 10M711 507l12 9M716 505l10 8"/><path d="M722 512q2 -12 18 -13q12 0 14 9q-4 8 -16 9q-10 0 -16 -5z" stroke-width="2.4"/><path d="M766 500l14 10M770 499l13 9M774 499l11 8M762 503l12 9"/><path d="M728 488q20 -6 44 0M734 484q16 -4 34 0" stroke="#e86a38" stroke-width="1"/></g><g stroke="#f2f200" stroke-width="1.3" fill="none" stroke-linejoin="round"><polygon points="754.3,476.0 800.6,505.4 745.3,526.5 699.6,497.6"/><polygon points="699.6,497.6 745.3,526.5 745.3,559.3 699.6,530.3"/><polygon points="745.3,526.5 800.6,505.4 800.6,538.3 745.3,559.3"/><path d="M754.3 476L754.3 509L699.6 530.3M754.3 509L800.6 538.3"/></g><rect x="740" y="510.6" width="20.2" height="15" fill="#f4f400"/><text x="750.1" y="522.2" font-family="Liberation Sans, sans-serif" font-size="11.5" fill="#111" text-anchor="middle">car</text><g stroke="#f4f4f4" stroke-width="1.3" fill="none" stroke-linecap="round" stroke-linejoin="round"><path d="M1141.4 398.2A6.2 6.2 0 1 0 1144.4 402.4"/><path d="M1140.6 396.6l2.6 0.4l-0.6 2.6z" fill="#f4f4f4" stroke-width="0.8"/><circle cx="1138.2" cy="404" r="3.1" stroke-width="1.1"/><path d="M1135.4 404h5.6M1138.2 401.2v5.6M1136.2 402q2 1.4 4 0M1136.2 406q2 -1.4 4 0" stroke-width="0.7"/><g transform="translate(-1.2 0)"><path d="M1150.6 403.4q-2.4 -2.2 -1.2 -3q1.4 -0.6 2.8 1.2v-2.8q0 -1.2 1 -1.2q1 0 1 1.2v-0.6q0 -1.1 1.1 -1.1q1.1 0 1.1 1.1v0.6q0 -1 1 -1q1 0 1 1v1q0 -0.9 0.9 -0.9q0.9 0 0.9 0.9v5q0 3 -1.4 4.9h-6q-1 -1.6 -2.2 -5.3z" fill="#000028" stroke-width="1.2"/><path d="M1152.4 398.6h6.6v2.8h-6.6z" fill="#f4f4f4" stroke="none" opacity="0.85"/><path d="M1154.3 398.4v3M1156.5 398.4v3" stroke="#000028" stroke-width="0.7"/></g><circle cx="1167.9" cy="402.3" r="4.7"/><path d="M1171.4 405.8l3.4 3.6"/><path d="M1165.2 402.3h5.4M1167.9 399.6v5.4" stroke-width="0.9"/><circle cx="1183.3" cy="402.3" r="4.7"/><path d="M1186.8 405.8l3.4 3.6"/><path d="M1180.6 402.3h5.4" stroke-width="0.9"/><path d="M1193.6 403.6l6.3 -6l6.3 6M1195.8 403v6.5h3.2v-3.9h2v3.9h3.2v-6.5M1203.6 400.2v-2"/></g></svg>
<!-- controls -->
<div style="left:273px;top:760.8px;width:868.5px;height:4.2px;background:#1b86df;"></div>
<div style="left:1152px;top:760.6px;width:42px;height:4.8px;background:#bfe6fb;border-top:1px solid #c9d9e4;border-bottom:1px solid #c9d9e4;"></div>
<div style="left:1194px;top:760.6px;width:18.8px;height:4.8px;background:#fff;border:1px solid #c4c4c4;border-left:none;border-radius:0 2px 2px 0;"></div>
<div style="left:1141px;top:758.8px;width:11.8px;height:9px;background:#f6f6f6;border:1px solid #b4b4b4;border-radius:1.5px;"></div>
<svg style="left:266px;top:750px" width="10" height="22" viewBox="266 750 10 22"><rect x="267.4" y="752" width="5.8" height="5" fill="#b81c1c"/><rect x="271.5" y="752" width="1.7" height="17.4" fill="#b81c1c"/></svg>
<svg style="left:1192px;top:750px" width="10" height="22" viewBox="1192 750 10 22"><rect x="1193.7" y="751.6" width="6.4" height="5" fill="#b81c1c"/><rect x="1193.7" y="751.6" width="1.7" height="18.4" fill="#b81c1c"/></svg>
<div style="left:267.4px;top:777px;width:53.2px;height:16.8px;background:#f7f7f7;border:1px solid #9c9c9c"></div>
<div style="left:270.4px;top:780px;width:40px;height:11.6px;background:#fff;"></div>
<div class="t" style="left:271.00px;top:782px;font-size:9px;line-height:12px;color:#333;transform:scaleX(0.9111);">00.00000</div>
<div style="left:341px;top:777px;width:54px;height:16.8px;background:#f7f7f7;border:1px solid #9c9c9c"></div>
<div style="left:344px;top:780px;width:40px;height:11.6px;background:#fff;"></div>
<div class="t" style="left:344.60px;top:782px;font-size:9px;line-height:12px;color:#333;transform:scaleX(0.9111);">09.49514</div>
<div style="left:415.2px;top:777px;width:54.2px;height:16.8px;background:#f7f7f7;border:1px solid #9c9c9c"></div>
<div style="left:418.2px;top:780px;width:40px;height:11.6px;background:#fff;"></div>
<div class="t" style="left:418.80px;top:782px;font-size:9px;line-height:12px;color:#333;transform:scaleX(0.9111);">10.00000</div>
<div class="t" style="left:490.20px;top:778px;font-size:9px;line-height:12px;color:#333;transform:scaleX(0.8898);">10.20001</div>
<div class="t" style="left:267.00px;top:796px;font-size:9px;line-height:12px;color:#333;transform:scaleX(0.9059);">Start Time</div>
<div class="t" style="left:341.00px;top:796px;font-size:9px;line-height:12px;color:#333;transform:scaleX(0.9197);">Current</div>
<div class="t" style="left:415.50px;top:796px;font-size:9px;line-height:12px;color:#333;transform:scaleX(0.8958);">End Time</div>
<div class="t" style="left:489.60px;top:796px;font-size:9px;line-height:12px;color:#333;transform:scaleX(0.9113);">Max Time</div>
<svg style="left:667.3px;top:778.5px" width="28" height="28.2" viewBox="0 0 28 28.2"><rect x="0.7" y="0.7" width="26.6" height="26.8" rx="4" fill="#f7f7f7" stroke="#b2b2b2" stroke-width="1.3"/><g fill="#5a5a5a"><path d="M15.6 8.1V20.5L5.6 14.3zM24 8.1V20.5L14 14.3z"/></g></svg>
<svg style="left:697.5px;top:778.5px" width="28" height="28.2" viewBox="0 0 28 28.2"><rect x="0.7" y="0.7" width="26.6" height="26.8" rx="4" fill="#f7f7f7" stroke="#b2b2b2" stroke-width="1.3"/><g fill="#5a5a5a"><rect x="7.6" y="7.4" width="2.9" height="14"/><path d="M20 8V20.8L10.5 14.4z"/></g></svg>
<svg style="left:727.7px;top:778.5px" width="28" height="28.2" viewBox="0 0 28 28.2"><rect x="0.7" y="0.7" width="26.6" height="26.8" rx="4" fill="#f7f7f7" stroke="#b2b2b2" stroke-width="1.3"/><g fill="#5a5a5a"><path d="M9.2 8.2V20.6L19.2 14.4z"/></g></svg>
<svg style="left:757.4px;top:778.5px" width="28" height="28.2" viewBox="0 0 28 28.2"><rect x="0.7" y="0.7" width="26.6" height="26.8" rx="4" fill="#f7f7f7" stroke="#b2b2b2" stroke-width="1.3"/><g fill="#5a5a5a"><rect x="17.6" y="7.4" width="2.9" height="14"/><path d="M8 8V20.8L17.6 14.4z"/></g></svg>
<svg style="left:787.4px;top:778.5px" width="28" height="28.2" viewBox="0 0 28 28.2"><rect x="0.7" y="0.7" width="26.6" height="26.8" rx="4" fill="#f7f7f7" stroke="#b2b2b2" stroke-width="1.3"/><g fill="#5a5a5a"><path d="M4.6 8.1V20.5L14.6 14.3zM13 8.1V20.5L23 14.3z"/></g></svg>
<svg style="left:1058.2px;top:778.3px" width="20.4" height="20.8" viewBox="0 0 20.4 20.8"><defs><radialGradient id="gg"><stop offset="0" stop-color="#666"/><stop offset="0.45" stop-color="#aaa"/><stop offset="1" stop-color="#ededed"/></radialGradient></defs><rect x="0.6" y="0.6" width="19.2" height="19.6" rx="3" fill="#f7f7f7" stroke="#a8a8a8" stroke-width="1.1"/><circle cx="10.2" cy="10.4" r="5.6" fill="url(#gg)"/><circle cx="10.2" cy="10.4" r="6.6" fill="none" stroke="#666" stroke-width="2.2" stroke-dasharray="2.6 2.58"/><circle cx="10.2" cy="10.4" r="5.4" fill="none" stroke="#777" stroke-width="0.7"/></svg>
<div class="btn" style="left:1080px;top:778.3px;width:138px;height:20.6px;border-color:#a8a8a8"></div>
<div class="t" style="left:1105.80px;top:783px;font-size:9.3px;line-height:12px;color:#222;transform:scaleX(0.9868);">Zoom In Time Range</div>
<!-- right panel -->
<div style="left:1221px;top:93px;width:1px;height:738px;background:#c4c4c4;"></div>
<div style="left:1222px;top:93px;width:353px;height:17.4px;background:#fff;"></div>
<div style="left:1222px;top:110.4px;width:353px;height:1px;background:#d4d4d4;"></div>
<div class="t" style="left:1226.60px;top:98px;font-size:10px;line-height:12px;color:#333;transform:scaleX(0.9948);">View Labels, Sublabels and Attributes</div>
<div class="dots" style="left:1560px;top:98px"></div>
<div class="btn" style="left:1233.4px;top:122.4px;width:105px;height:19.4px"></div>
<div class="t" style="left:1264.25px;top:127px;font-size:9.8px;line-height:12px;color:#222;transform:scaleX(0.9285);">Expand All</div>
<div class="btn" style="left:1346px;top:122.4px;width:105px;height:19.4px"></div>
<div class="t" style="left:1374.25px;top:127px;font-size:9.8px;line-height:12px;color:#222;transform:scaleX(0.9373);">Collapse All</div>
<div style="left:1233px;top:152.8px;width:331px;height:641.2px;background:#f5f5f5;border:1.4px solid #bdbdbd;border-bottom:none;"></div>
<div class="t" style="left:1236.70px;top:160px;font-size:9.6px;line-height:12px;color:#111;font-weight:bold;transform:scaleX(0.9441);">Label/Sub-Label</div>
<div style="left:1234.4px;top:183.6px;width:328.2px;height:16.900000000000006px;background:#fff;"></div>
<div style="left:1234.4px;top:200.5px;width:328.2px;height:16.69999999999999px;background:#d9d9d9;"></div>
<div style="left:1234.4px;top:217.2px;width:328.2px;height:17.100000000000023px;background:#fff;"></div>
<div style="left:1234.4px;top:234.3px;width:328.2px;height:16.899999999999977px;background:#fff;"></div>
<div style="left:1234.4px;top:183.2px;width:328.2px;height:1px;background:#c6c6c6;"></div>
<div style="left:1234.4px;top:200.2px;width:328.2px;height:1px;background:#c6c6c6;"></div>
<div style="left:1234.4px;top:217px;width:328.2px;height:1px;background:#c6c6c6;"></div>
<div style="left:1234.4px;top:234px;width:328.2px;height:1px;background:#c6c6c6;"></div>
<div style="left:1234.4px;top:251px;width:328.2px;height:1px;background:#c6c6c6;"></div>
<svg style="left:1240px;top:190px" width="8" height="5" viewBox="0 0 8 5"><path transform="translate(0.60 0.00)" d="M0 0H5.8L2.9 3.2z" fill="#444"/></svg>
<div class="t" style="left:1252.60px;top:187px;font-size:9.8px;line-height:12px;color:#333;transform:scaleX(0.9178);">Object Labels</div>
<div class="t" style="left:1266.60px;top:204px;font-size:9.8px;line-height:12px;color:#333;transform:scaleX(0.8962);">car</div>
<svg style="left:1240px;top:224px" width="8" height="5" viewBox="0 0 8 5"><path transform="translate(0.60 0.30)" d="M0 0H5.8L2.9 3.2z" fill="#444"/></svg>
<div class="t" style="left:1252.60px;top:221px;font-size:9.8px;line-height:12px;color:#333;transform:scaleX(0.8756);">Scene Labels</div>
<div class="t" style="left:1266.60px;top:238px;font-size:9.8px;line-height:12px;color:#333;transform:scaleX(0.9339);">daytime ( NO )</div>
<!-- status bar -->
<div style="left:0px;top:814px;width:1575px;height:17px;background:#e6e6e6;"></div>
<div style="left:0px;top:814px;width:1575px;height:1px;background:#d2d2d2;"></div>
<div style="left:264.5px;top:814px;width:1px;height:17px;background:#c4c4c4;"></div>
<div style="left:1221px;top:814px;width:1px;height:17px;background:#c4c4c4;"></div>
<svg style="left:4px;top:818px" width="10" height="10" viewBox="0 0 10 10"><rect x="0.8" y="0.4" width="1.6" height="9.2" fill="#8e8e8e"/><path d="M8.8 0.4V9.6L2.6 5z" fill="#8e8e8e"/></svg>
<svg style="left:1562.6px;top:818.4px" width="10" height="10" viewBox="0 0 10 10"><rect x="7.2" y="0.4" width="1.6" height="9.2" fill="#8e8e8e"/><path d="M0.8 0.4V9.6L7 5z" fill="#8e8e8e"/></svg>
<svg style="left:1207px;top:819px" width="11" height="9" viewBox="0 0 11 9"><path d="M1 1L5.5 5.6L10 1z" fill="#8e8e8e"/><rect x="1" y="6.8" width="9" height="1.2" fill="#8e8e8e"/></svg>
</div>
</body>
</html>
